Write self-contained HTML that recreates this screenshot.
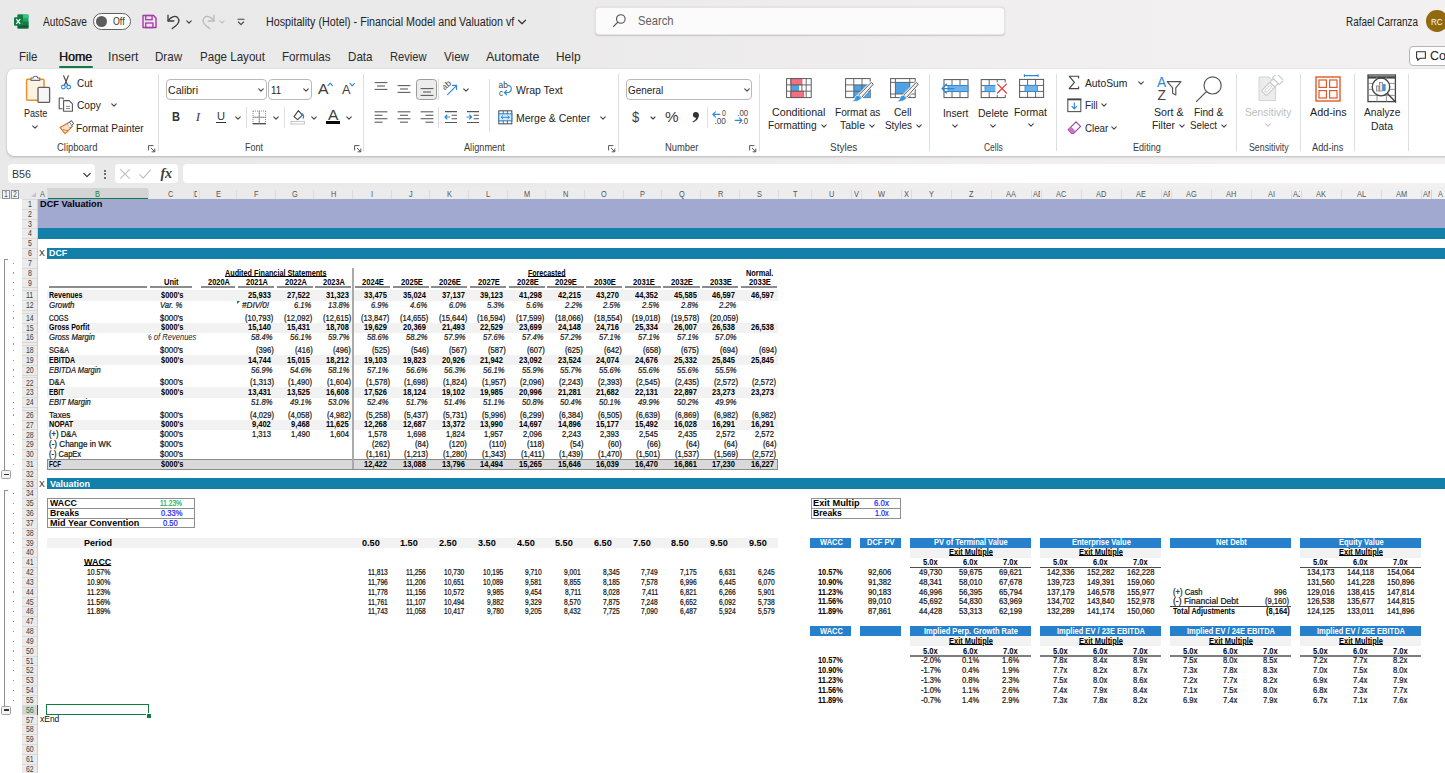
<!DOCTYPE html>
<html><head><meta charset="utf-8"><title>Excel</title><style>
html,body{margin:0;padding:0}
body{width:1445px;height:773px;overflow:hidden;background:linear-gradient(90deg,#e9e9e9 0%,#ebeaea 35%,#f1efef 75%,#f2f0f0 100%);font-family:"Liberation Sans",sans-serif;position:relative}
#app{position:absolute;left:0;top:0;width:1445px;height:773px;overflow:hidden}
#app div,#app span.t,#app svg{position:absolute}
#sheet{left:0;top:186.5px;width:1445px;height:586.5px;background:#fff}
.t{white-space:nowrap;font-size:7px;color:#111;font-family:"Liberation Sans",sans-serif}
.g{height:10px;line-height:10px}
</style></head>
<body><div id="app">
<div id="sheet"></div>
<div style="left:0.00px;top:186.50px;width:1445.00px;height:12.60px;background:linear-gradient(90deg,#e9e9e9 0%,#ececec 40%,#f0f0f0 100%)"></div>
<div style="left:0.00px;top:199.10px;width:22.00px;height:573.90px;background:#fff"></div>
<div style="left:22.00px;top:199.10px;width:16.00px;height:573.90px;background:#ebebeb"></div>
<div style="left:47.00px;top:188.30px;width:101.00px;height:10.80px;background:#d4d4d4;border-bottom:1.5px solid #107c41;box-sizing:border-box"></div>
<span class="t g" style="left:40.33px;top:189px;font-size:8.6px;color:#555;transform:scaleX(0.86);transform-origin:0 50%">A</span>
<span class="t g" style="left:95.33px;top:189px;font-size:8.6px;color:#107c41;transform:scaleX(0.86);transform-origin:0 50%">B</span>
<div style="left:46.50px;top:189.50px;width:1.00px;height:9.60px;background:#dcdcdc"></div>
<span class="t g" style="left:168.13px;top:189px;font-size:8.6px;color:#555;transform:scaleX(0.86);transform-origin:0 50%">C</span>
<div style="left:147.50px;top:189.50px;width:1.00px;height:9.60px;background:#dcdcdc"></div>
<div style="left:193.80px;top:189px;width:3.00px;height:10px;overflow:hidden"><span class="t g" style="left:0.60px;top:0;font-size:8.6px;color:#555;transform:scaleX(0.86);transform-origin:0 50%">D</span></div>
<div style="left:192.50px;top:189.50px;width:1.00px;height:9.60px;background:#dcdcdc"></div>
<span class="t g" style="left:215.58px;top:189px;font-size:8.6px;color:#555;transform:scaleX(0.86);transform-origin:0 50%">E</span>
<div style="left:198.50px;top:189.50px;width:1.00px;height:9.60px;background:#dcdcdc"></div>
<span class="t g" style="left:253.88px;top:189px;font-size:8.6px;color:#555;transform:scaleX(0.86);transform-origin:0 50%">F</span>
<div style="left:236.00px;top:189.50px;width:1.00px;height:9.60px;background:#dcdcdc"></div>
<span class="t g" style="left:291.94px;top:189px;font-size:8.6px;color:#555;transform:scaleX(0.86);transform-origin:0 50%">G</span>
<div style="left:274.68px;top:189.50px;width:1.00px;height:9.60px;background:#dcdcdc"></div>
<span class="t g" style="left:330.83px;top:189px;font-size:8.6px;color:#555;transform:scaleX(0.86);transform-origin:0 50%">H</span>
<div style="left:313.36px;top:189.50px;width:1.00px;height:9.60px;background:#dcdcdc"></div>
<span class="t g" style="left:371.15px;top:189px;font-size:8.6px;color:#555;transform:scaleX(0.86);transform-origin:0 50%">I</span>
<div style="left:352.04px;top:189.50px;width:1.00px;height:9.60px;background:#dcdcdc"></div>
<span class="t g" style="left:409.01px;top:189px;font-size:8.6px;color:#555;transform:scaleX(0.86);transform-origin:0 50%">J</span>
<div style="left:390.72px;top:189.50px;width:1.00px;height:9.60px;background:#dcdcdc"></div>
<span class="t g" style="left:447.07px;top:189px;font-size:8.6px;color:#555;transform:scaleX(0.86);transform-origin:0 50%">K</span>
<div style="left:429.40px;top:189.50px;width:1.00px;height:9.60px;background:#dcdcdc"></div>
<span class="t g" style="left:486.16px;top:189px;font-size:8.6px;color:#555;transform:scaleX(0.86);transform-origin:0 50%">L</span>
<div style="left:468.08px;top:189.50px;width:1.00px;height:9.60px;background:#dcdcdc"></div>
<span class="t g" style="left:523.82px;top:189px;font-size:8.6px;color:#555;transform:scaleX(0.86);transform-origin:0 50%">M</span>
<div style="left:506.76px;top:189.50px;width:1.00px;height:9.60px;background:#dcdcdc"></div>
<span class="t g" style="left:562.91px;top:189px;font-size:8.6px;color:#555;transform:scaleX(0.86);transform-origin:0 50%">N</span>
<div style="left:545.44px;top:189.50px;width:1.00px;height:9.60px;background:#dcdcdc"></div>
<span class="t g" style="left:601.38px;top:189px;font-size:8.6px;color:#555;transform:scaleX(0.86);transform-origin:0 50%">O</span>
<div style="left:584.12px;top:189.50px;width:1.00px;height:9.60px;background:#dcdcdc"></div>
<span class="t g" style="left:640.47px;top:189px;font-size:8.6px;color:#555;transform:scaleX(0.86);transform-origin:0 50%">P</span>
<div style="left:622.80px;top:189.50px;width:1.00px;height:9.60px;background:#dcdcdc"></div>
<span class="t g" style="left:678.74px;top:189px;font-size:8.6px;color:#555;transform:scaleX(0.86);transform-origin:0 50%">Q</span>
<div style="left:661.48px;top:189.50px;width:1.00px;height:9.60px;background:#dcdcdc"></div>
<span class="t g" style="left:717.63px;top:189px;font-size:8.6px;color:#555;transform:scaleX(0.86);transform-origin:0 50%">R</span>
<div style="left:700.16px;top:189.50px;width:1.00px;height:9.60px;background:#dcdcdc"></div>
<span class="t g" style="left:756.51px;top:189px;font-size:8.6px;color:#555;transform:scaleX(0.86);transform-origin:0 50%">S</span>
<div style="left:738.84px;top:189.50px;width:1.00px;height:9.60px;background:#dcdcdc"></div>
<span class="t g" style="left:792.54px;top:189px;font-size:8.6px;color:#555;transform:scaleX(0.86);transform-origin:0 50%">T</span>
<div style="left:777.50px;top:189.50px;width:1.00px;height:9.60px;background:#dcdcdc"></div>
<span class="t g" style="left:828.63px;top:189px;font-size:8.6px;color:#555;transform:scaleX(0.86);transform-origin:0 50%">U</span>
<div style="left:810.50px;top:189.50px;width:1.00px;height:9.60px;background:#dcdcdc"></div>
<span class="t g" style="left:853.83px;top:189px;font-size:8.6px;color:#555;transform:scaleX(0.86);transform-origin:0 50%">V</span>
<div style="left:850.50px;top:189.50px;width:1.00px;height:9.60px;background:#dcdcdc"></div>
<span class="t g" style="left:877.81px;top:189px;font-size:8.6px;color:#555;transform:scaleX(0.86);transform-origin:0 50%">W</span>
<div style="left:860.50px;top:189.50px;width:1.00px;height:9.60px;background:#dcdcdc"></div>
<span class="t g" style="left:903.83px;top:189px;font-size:8.6px;color:#555;transform:scaleX(0.86);transform-origin:0 50%">X</span>
<div style="left:900.50px;top:189.50px;width:1.00px;height:9.60px;background:#dcdcdc"></div>
<span class="t g" style="left:928.83px;top:189px;font-size:8.6px;color:#555;transform:scaleX(0.86);transform-origin:0 50%">Y</span>
<div style="left:910.50px;top:189.50px;width:1.00px;height:9.60px;background:#dcdcdc"></div>
<span class="t g" style="left:969.04px;top:189px;font-size:8.6px;color:#555;transform:scaleX(0.86);transform-origin:0 50%">Z</span>
<div style="left:950.50px;top:189.50px;width:1.00px;height:9.60px;background:#dcdcdc"></div>
<span class="t g" style="left:1006.37px;top:189px;font-size:8.6px;color:#555;transform:scaleX(0.86);transform-origin:0 50%">AA</span>
<div style="left:990.50px;top:189.50px;width:1.00px;height:9.60px;background:#dcdcdc"></div>
<div style="left:1031.80px;top:189px;width:8.40px;height:10px;overflow:hidden"><span class="t g" style="left:0.80px;top:0;font-size:8.6px;color:#555;transform:scaleX(0.86);transform-origin:0 50%">AB</span></div>
<div style="left:1030.50px;top:189.50px;width:1.00px;height:9.60px;background:#dcdcdc"></div>
<span class="t g" style="left:1056.16px;top:189px;font-size:8.6px;color:#555;transform:scaleX(0.86);transform-origin:0 50%">AC</span>
<div style="left:1040.50px;top:189.50px;width:1.00px;height:9.60px;background:#dcdcdc"></div>
<span class="t g" style="left:1096.16px;top:189px;font-size:8.6px;color:#555;transform:scaleX(0.86);transform-origin:0 50%">AD</span>
<div style="left:1080.50px;top:189.50px;width:1.00px;height:9.60px;background:#dcdcdc"></div>
<span class="t g" style="left:1136.37px;top:189px;font-size:8.6px;color:#555;transform:scaleX(0.86);transform-origin:0 50%">AE</span>
<div style="left:1120.50px;top:189.50px;width:1.00px;height:9.60px;background:#dcdcdc"></div>
<div style="left:1161.80px;top:189px;width:8.40px;height:10px;overflow:hidden"><span class="t g" style="left:0.80px;top:0;font-size:8.6px;color:#555;transform:scaleX(0.86);transform-origin:0 50%">AF</span></div>
<div style="left:1160.50px;top:189.50px;width:1.00px;height:9.60px;background:#dcdcdc"></div>
<span class="t g" style="left:1185.96px;top:189px;font-size:8.6px;color:#555;transform:scaleX(0.86);transform-origin:0 50%">AG</span>
<div style="left:1170.50px;top:189.50px;width:1.00px;height:9.60px;background:#dcdcdc"></div>
<span class="t g" style="left:1226.16px;top:189px;font-size:8.6px;color:#555;transform:scaleX(0.86);transform-origin:0 50%">AH</span>
<div style="left:1210.50px;top:189.50px;width:1.00px;height:9.60px;background:#dcdcdc"></div>
<span class="t g" style="left:1267.81px;top:189px;font-size:8.6px;color:#555;transform:scaleX(0.86);transform-origin:0 50%">AI</span>
<div style="left:1250.50px;top:189.50px;width:1.00px;height:9.60px;background:#dcdcdc"></div>
<div style="left:1291.80px;top:189px;width:8.40px;height:10px;overflow:hidden"><span class="t g" style="left:0.80px;top:0;font-size:8.6px;color:#555;transform:scaleX(0.86);transform-origin:0 50%">AJ</span></div>
<div style="left:1290.50px;top:189.50px;width:1.00px;height:9.60px;background:#dcdcdc"></div>
<span class="t g" style="left:1316.37px;top:189px;font-size:8.6px;color:#555;transform:scaleX(0.86);transform-origin:0 50%">AK</span>
<div style="left:1300.50px;top:189.50px;width:1.00px;height:9.60px;background:#dcdcdc"></div>
<span class="t g" style="left:1356.78px;top:189px;font-size:8.6px;color:#555;transform:scaleX(0.86);transform-origin:0 50%">AL</span>
<div style="left:1340.50px;top:189.50px;width:1.00px;height:9.60px;background:#dcdcdc"></div>
<span class="t g" style="left:1395.75px;top:189px;font-size:8.6px;color:#555;transform:scaleX(0.86);transform-origin:0 50%">AM</span>
<div style="left:1380.50px;top:189.50px;width:1.00px;height:9.60px;background:#dcdcdc"></div>
<div style="left:1421.80px;top:189px;width:8.40px;height:10px;overflow:hidden"><span class="t g" style="left:0.80px;top:0;font-size:8.6px;color:#555;transform:scaleX(0.86);transform-origin:0 50%">AN</span></div>
<div style="left:1420.50px;top:189.50px;width:1.00px;height:9.60px;background:#dcdcdc"></div>
<span class="t g" style="left:1438.4px;top:189px;font-size:8.6px;color:#555;transform:scaleX(0.86);transform-origin:0 50%">A</span>
<div style="left:1430.50px;top:189.50px;width:1.00px;height:9.60px;background:#d2d2d2"></div>
<span class="t g" style="left:28.06px;top:199px;font-size:8.4px;color:#3c3c3c;transform:scaleX(0.83);transform-origin:0 50%">1</span>
<div style="left:22.00px;top:198.90px;width:16.00px;height:0.80px;background:#d9d9d9"></div>
<span class="t g" style="left:28.06px;top:209px;font-size:8.4px;color:#3c3c3c;transform:scaleX(0.83);transform-origin:0 50%">2</span>
<div style="left:22.00px;top:208.73px;width:16.00px;height:0.80px;background:#d9d9d9"></div>
<span class="t g" style="left:28.06px;top:219px;font-size:8.4px;color:#3c3c3c;transform:scaleX(0.83);transform-origin:0 50%">3</span>
<div style="left:22.00px;top:218.56px;width:16.00px;height:0.80px;background:#d9d9d9"></div>
<span class="t g" style="left:28.06px;top:228px;font-size:8.4px;color:#3c3c3c;transform:scaleX(0.83);transform-origin:0 50%">4</span>
<div style="left:22.00px;top:228.39px;width:16.00px;height:0.80px;background:#d9d9d9"></div>
<span class="t g" style="left:28.06px;top:238px;font-size:8.4px;color:#3c3c3c;transform:scaleX(0.83);transform-origin:0 50%">5</span>
<div style="left:22.00px;top:238.22px;width:16.00px;height:0.80px;background:#d9d9d9"></div>
<span class="t g" style="left:28.06px;top:248px;font-size:8.4px;color:#3c3c3c;transform:scaleX(0.83);transform-origin:0 50%">6</span>
<div style="left:22.00px;top:248.05px;width:16.00px;height:0.80px;background:#d9d9d9"></div>
<span class="t g" style="left:28.06px;top:258px;font-size:8.4px;color:#3c3c3c;transform:scaleX(0.83);transform-origin:0 50%">7</span>
<div style="left:22.00px;top:257.88px;width:16.00px;height:0.80px;background:#d9d9d9"></div>
<span class="t g" style="left:28.06px;top:268px;font-size:8.4px;color:#3c3c3c;transform:scaleX(0.83);transform-origin:0 50%">8</span>
<div style="left:22.00px;top:267.71px;width:16.00px;height:0.80px;background:#d9d9d9"></div>
<span class="t g" style="left:28.06px;top:278px;font-size:8.4px;color:#3c3c3c;transform:scaleX(0.83);transform-origin:0 50%">9</span>
<div style="left:22.00px;top:277.54px;width:16.00px;height:0.80px;background:#d9d9d9"></div>
<div style="left:22.00px;top:287.37px;width:16.00px;height:0.80px;background:#d6d6d6"></div>
<span class="t g" style="left:26.38px;top:290px;font-size:8.4px;color:#3c3c3c;transform:scaleX(0.83);transform-origin:0 50%">11</span>
<div style="left:22.00px;top:290.22px;width:16.00px;height:0.80px;background:#d9d9d9"></div>
<span class="t g" style="left:26.12px;top:300px;font-size:8.4px;color:#3c3c3c;transform:scaleX(0.83);transform-origin:0 50%">12</span>
<div style="left:22.00px;top:300.05px;width:16.00px;height:0.80px;background:#d9d9d9"></div>
<div style="left:22.00px;top:309.88px;width:16.00px;height:0.80px;background:#d6d6d6"></div>
<span class="t g" style="left:26.12px;top:313px;font-size:8.4px;color:#3c3c3c;transform:scaleX(0.83);transform-origin:0 50%">14</span>
<div style="left:22.00px;top:312.73px;width:16.00px;height:0.80px;background:#d9d9d9"></div>
<span class="t g" style="left:26.12px;top:323px;font-size:8.4px;color:#3c3c3c;transform:scaleX(0.83);transform-origin:0 50%">15</span>
<div style="left:22.00px;top:322.56px;width:16.00px;height:0.80px;background:#d9d9d9"></div>
<span class="t g" style="left:26.12px;top:332px;font-size:8.4px;color:#3c3c3c;transform:scaleX(0.83);transform-origin:0 50%">16</span>
<div style="left:22.00px;top:332.39px;width:16.00px;height:0.80px;background:#d9d9d9"></div>
<div style="left:22.00px;top:342.22px;width:16.00px;height:0.80px;background:#d6d6d6"></div>
<span class="t g" style="left:26.12px;top:345px;font-size:8.4px;color:#3c3c3c;transform:scaleX(0.83);transform-origin:0 50%">18</span>
<div style="left:22.00px;top:345.07px;width:16.00px;height:0.80px;background:#d9d9d9"></div>
<span class="t g" style="left:26.12px;top:355px;font-size:8.4px;color:#3c3c3c;transform:scaleX(0.83);transform-origin:0 50%">19</span>
<div style="left:22.00px;top:354.90px;width:16.00px;height:0.80px;background:#d9d9d9"></div>
<span class="t g" style="left:26.12px;top:365px;font-size:8.4px;color:#3c3c3c;transform:scaleX(0.83);transform-origin:0 50%">20</span>
<div style="left:22.00px;top:364.73px;width:16.00px;height:0.80px;background:#d9d9d9"></div>
<div style="left:22.00px;top:374.56px;width:16.00px;height:0.80px;background:#d6d6d6"></div>
<span class="t g" style="left:26.12px;top:378px;font-size:8.4px;color:#3c3c3c;transform:scaleX(0.83);transform-origin:0 50%">22</span>
<div style="left:22.00px;top:377.41px;width:16.00px;height:0.80px;background:#d9d9d9"></div>
<span class="t g" style="left:26.12px;top:387px;font-size:8.4px;color:#3c3c3c;transform:scaleX(0.83);transform-origin:0 50%">23</span>
<div style="left:22.00px;top:387.24px;width:16.00px;height:0.80px;background:#d9d9d9"></div>
<span class="t g" style="left:26.12px;top:397px;font-size:8.4px;color:#3c3c3c;transform:scaleX(0.83);transform-origin:0 50%">24</span>
<div style="left:22.00px;top:397.07px;width:16.00px;height:0.80px;background:#d9d9d9"></div>
<div style="left:22.00px;top:406.90px;width:16.00px;height:0.80px;background:#d6d6d6"></div>
<span class="t g" style="left:26.12px;top:410px;font-size:8.4px;color:#3c3c3c;transform:scaleX(0.83);transform-origin:0 50%">26</span>
<div style="left:22.00px;top:409.75px;width:16.00px;height:0.80px;background:#d9d9d9"></div>
<span class="t g" style="left:26.12px;top:420px;font-size:8.4px;color:#3c3c3c;transform:scaleX(0.83);transform-origin:0 50%">27</span>
<div style="left:22.00px;top:419.58px;width:16.00px;height:0.80px;background:#d9d9d9"></div>
<span class="t g" style="left:26.12px;top:430px;font-size:8.4px;color:#3c3c3c;transform:scaleX(0.83);transform-origin:0 50%">28</span>
<div style="left:22.00px;top:429.41px;width:16.00px;height:0.80px;background:#d9d9d9"></div>
<span class="t g" style="left:26.12px;top:439px;font-size:8.4px;color:#3c3c3c;transform:scaleX(0.83);transform-origin:0 50%">29</span>
<div style="left:22.00px;top:439.24px;width:16.00px;height:0.80px;background:#d9d9d9"></div>
<span class="t g" style="left:26.12px;top:449px;font-size:8.4px;color:#3c3c3c;transform:scaleX(0.83);transform-origin:0 50%">30</span>
<div style="left:22.00px;top:449.07px;width:16.00px;height:0.80px;background:#d9d9d9"></div>
<span class="t g" style="left:26.12px;top:459px;font-size:8.4px;color:#3c3c3c;transform:scaleX(0.83);transform-origin:0 50%">31</span>
<div style="left:22.00px;top:458.90px;width:16.00px;height:0.80px;background:#d9d9d9"></div>
<span class="t g" style="left:26.12px;top:469px;font-size:8.4px;color:#3c3c3c;transform:scaleX(0.83);transform-origin:0 50%">32</span>
<div style="left:22.00px;top:468.73px;width:16.00px;height:0.80px;background:#d9d9d9"></div>
<span class="t g" style="left:26.12px;top:479px;font-size:8.4px;color:#3c3c3c;transform:scaleX(0.83);transform-origin:0 50%">33</span>
<div style="left:22.00px;top:478.56px;width:16.00px;height:0.80px;background:#d9d9d9"></div>
<span class="t g" style="left:26.12px;top:488px;font-size:8.4px;color:#3c3c3c;transform:scaleX(0.83);transform-origin:0 50%">34</span>
<div style="left:22.00px;top:488.39px;width:16.00px;height:0.80px;background:#d9d9d9"></div>
<span class="t g" style="left:26.12px;top:498px;font-size:8.4px;color:#3c3c3c;transform:scaleX(0.83);transform-origin:0 50%">35</span>
<div style="left:22.00px;top:498.22px;width:16.00px;height:0.80px;background:#d9d9d9"></div>
<span class="t g" style="left:26.12px;top:508px;font-size:8.4px;color:#3c3c3c;transform:scaleX(0.83);transform-origin:0 50%">36</span>
<div style="left:22.00px;top:508.05px;width:16.00px;height:0.80px;background:#d9d9d9"></div>
<span class="t g" style="left:26.12px;top:518px;font-size:8.4px;color:#3c3c3c;transform:scaleX(0.83);transform-origin:0 50%">37</span>
<div style="left:22.00px;top:517.88px;width:16.00px;height:0.80px;background:#d9d9d9"></div>
<span class="t g" style="left:26.12px;top:528px;font-size:8.4px;color:#3c3c3c;transform:scaleX(0.83);transform-origin:0 50%">38</span>
<div style="left:22.00px;top:527.71px;width:16.00px;height:0.80px;background:#d9d9d9"></div>
<span class="t g" style="left:26.12px;top:538px;font-size:8.4px;color:#3c3c3c;transform:scaleX(0.83);transform-origin:0 50%">39</span>
<div style="left:22.00px;top:537.54px;width:16.00px;height:0.80px;background:#d9d9d9"></div>
<span class="t g" style="left:26.12px;top:547px;font-size:8.4px;color:#3c3c3c;transform:scaleX(0.83);transform-origin:0 50%">40</span>
<div style="left:22.00px;top:547.37px;width:16.00px;height:0.80px;background:#d9d9d9"></div>
<span class="t g" style="left:26.12px;top:557px;font-size:8.4px;color:#3c3c3c;transform:scaleX(0.83);transform-origin:0 50%">41</span>
<div style="left:22.00px;top:557.20px;width:16.00px;height:0.80px;background:#d9d9d9"></div>
<span class="t g" style="left:26.12px;top:567px;font-size:8.4px;color:#3c3c3c;transform:scaleX(0.83);transform-origin:0 50%">42</span>
<div style="left:22.00px;top:567.03px;width:16.00px;height:0.80px;background:#d9d9d9"></div>
<span class="t g" style="left:26.12px;top:577px;font-size:8.4px;color:#3c3c3c;transform:scaleX(0.83);transform-origin:0 50%">43</span>
<div style="left:22.00px;top:576.86px;width:16.00px;height:0.80px;background:#d9d9d9"></div>
<span class="t g" style="left:26.12px;top:587px;font-size:8.4px;color:#3c3c3c;transform:scaleX(0.83);transform-origin:0 50%">44</span>
<div style="left:22.00px;top:586.69px;width:16.00px;height:0.80px;background:#d9d9d9"></div>
<span class="t g" style="left:26.12px;top:597px;font-size:8.4px;color:#3c3c3c;transform:scaleX(0.83);transform-origin:0 50%">45</span>
<div style="left:22.00px;top:596.52px;width:16.00px;height:0.80px;background:#d9d9d9"></div>
<span class="t g" style="left:26.12px;top:606px;font-size:8.4px;color:#3c3c3c;transform:scaleX(0.83);transform-origin:0 50%">46</span>
<div style="left:22.00px;top:606.35px;width:16.00px;height:0.80px;background:#d9d9d9"></div>
<span class="t g" style="left:26.12px;top:616px;font-size:8.4px;color:#3c3c3c;transform:scaleX(0.83);transform-origin:0 50%">47</span>
<div style="left:22.00px;top:616.18px;width:16.00px;height:0.80px;background:#d9d9d9"></div>
<span class="t g" style="left:26.12px;top:626px;font-size:8.4px;color:#3c3c3c;transform:scaleX(0.83);transform-origin:0 50%">48</span>
<div style="left:22.00px;top:626.01px;width:16.00px;height:0.80px;background:#d9d9d9"></div>
<span class="t g" style="left:26.12px;top:636px;font-size:8.4px;color:#3c3c3c;transform:scaleX(0.83);transform-origin:0 50%">49</span>
<div style="left:22.00px;top:635.84px;width:16.00px;height:0.80px;background:#d9d9d9"></div>
<span class="t g" style="left:26.12px;top:646px;font-size:8.4px;color:#3c3c3c;transform:scaleX(0.83);transform-origin:0 50%">50</span>
<div style="left:22.00px;top:645.67px;width:16.00px;height:0.80px;background:#d9d9d9"></div>
<span class="t g" style="left:26.12px;top:656px;font-size:8.4px;color:#3c3c3c;transform:scaleX(0.83);transform-origin:0 50%">51</span>
<div style="left:22.00px;top:655.50px;width:16.00px;height:0.80px;background:#d9d9d9"></div>
<span class="t g" style="left:26.12px;top:665px;font-size:8.4px;color:#3c3c3c;transform:scaleX(0.83);transform-origin:0 50%">52</span>
<div style="left:22.00px;top:665.33px;width:16.00px;height:0.80px;background:#d9d9d9"></div>
<span class="t g" style="left:26.12px;top:675px;font-size:8.4px;color:#3c3c3c;transform:scaleX(0.83);transform-origin:0 50%">53</span>
<div style="left:22.00px;top:675.16px;width:16.00px;height:0.80px;background:#d9d9d9"></div>
<span class="t g" style="left:26.12px;top:685px;font-size:8.4px;color:#3c3c3c;transform:scaleX(0.83);transform-origin:0 50%">54</span>
<div style="left:22.00px;top:684.99px;width:16.00px;height:0.80px;background:#d9d9d9"></div>
<span class="t g" style="left:26.12px;top:695px;font-size:8.4px;color:#3c3c3c;transform:scaleX(0.83);transform-origin:0 50%">55</span>
<div style="left:22.00px;top:694.82px;width:16.00px;height:0.80px;background:#d9d9d9"></div>
<div style="left:22.00px;top:705.05px;width:16.00px;height:9.83px;background:#d4d4d4;border-right:1.6px solid #107c41;box-sizing:border-box"></div>
<span class="t g" style="left:26.12px;top:705px;font-size:8.4px;color:#107c41;transform:scaleX(0.83);transform-origin:0 50%">56</span>
<div style="left:22.00px;top:704.65px;width:16.00px;height:0.80px;background:#d9d9d9"></div>
<span class="t g" style="left:26.12px;top:715px;font-size:8.4px;color:#3c3c3c;transform:scaleX(0.83);transform-origin:0 50%">57</span>
<div style="left:22.00px;top:714.48px;width:16.00px;height:0.80px;background:#d9d9d9"></div>
<span class="t g" style="left:26.12px;top:724px;font-size:8.4px;color:#3c3c3c;transform:scaleX(0.83);transform-origin:0 50%">58</span>
<div style="left:22.00px;top:724.31px;width:16.00px;height:0.80px;background:#d9d9d9"></div>
<span class="t g" style="left:26.12px;top:734px;font-size:8.4px;color:#3c3c3c;transform:scaleX(0.83);transform-origin:0 50%">59</span>
<div style="left:22.00px;top:734.14px;width:16.00px;height:0.80px;background:#d9d9d9"></div>
<span class="t g" style="left:26.12px;top:744px;font-size:8.4px;color:#3c3c3c;transform:scaleX(0.83);transform-origin:0 50%">60</span>
<div style="left:22.00px;top:743.97px;width:16.00px;height:0.80px;background:#d9d9d9"></div>
<span class="t g" style="left:26.12px;top:754px;font-size:8.4px;color:#3c3c3c;transform:scaleX(0.83);transform-origin:0 50%">61</span>
<div style="left:22.00px;top:753.80px;width:16.00px;height:0.80px;background:#d9d9d9"></div>
<span class="t g" style="left:26.12px;top:764px;font-size:8.4px;color:#3c3c3c;transform:scaleX(0.83);transform-origin:0 50%">62</span>
<div style="left:22.00px;top:763.63px;width:16.00px;height:0.80px;background:#d9d9d9"></div>
<div style="left:37.40px;top:199.10px;width:0.80px;height:573.90px;background:#cfcfcf"></div>
<div style="left:36.60px;top:705.05px;width:1.60px;height:9.83px;background:#107c41"></div>
<div style="left:31.4px;top:192.10px;width:0;height:0;border-bottom:5.6px solid #c6c6c6;border-left:5.6px solid transparent"></div>
<div style="left:1.50px;top:190.2px;width:8.8px;height:8.4px;border:1px solid #8f8f8f;box-sizing:border-box;background:#f6f6f6"></div>
<span class="t g" style="left:4.00px;top:190px;font-size:8.2px;color:#555;transform:scaleX(0.85);transform-origin:0 50%">1</span>
<div style="left:10.70px;top:190.2px;width:8.8px;height:8.4px;border:1px solid #8f8f8f;box-sizing:border-box;background:#f6f6f6"></div>
<span class="t g" style="left:13.20px;top:190px;font-size:8.2px;color:#555;transform:scaleX(0.85);transform-origin:0 50%">2</span>
<div style="left:4.00px;top:259.08px;width:1.20px;height:210.65px;background:#8f8f8f"></div>
<div style="left:4.00px;top:259.08px;width:4.00px;height:1.20px;background:#8f8f8f"></div>
<div style="left:1.3px;top:469.73px;width:9.4px;height:9px;border:1px solid #a0a0a0;border-radius:1.5px;box-sizing:border-box;background:#f3f3f3"></div>
<div style="left:3.50px;top:473.53px;width:5.00px;height:1.40px;background:#333"></div>
<div style="left:12.70px;top:262.60px;width:1.10px;height:1.20px;background:#999"></div>
<div style="left:12.70px;top:272.43px;width:1.10px;height:1.20px;background:#999"></div>
<div style="left:12.70px;top:282.26px;width:1.10px;height:1.20px;background:#999"></div>
<div style="left:12.70px;top:288.60px;width:1.10px;height:1.20px;background:#999"></div>
<div style="left:12.70px;top:294.94px;width:1.10px;height:1.20px;background:#999"></div>
<div style="left:12.70px;top:304.77px;width:1.10px;height:1.20px;background:#999"></div>
<div style="left:12.70px;top:311.11px;width:1.10px;height:1.20px;background:#999"></div>
<div style="left:12.70px;top:317.45px;width:1.10px;height:1.20px;background:#999"></div>
<div style="left:12.70px;top:327.28px;width:1.10px;height:1.20px;background:#999"></div>
<div style="left:12.70px;top:337.11px;width:1.10px;height:1.20px;background:#999"></div>
<div style="left:12.70px;top:343.44px;width:1.10px;height:1.20px;background:#999"></div>
<div style="left:12.70px;top:349.79px;width:1.10px;height:1.20px;background:#999"></div>
<div style="left:12.70px;top:359.62px;width:1.10px;height:1.20px;background:#999"></div>
<div style="left:12.70px;top:369.44px;width:1.10px;height:1.20px;background:#999"></div>
<div style="left:12.70px;top:375.78px;width:1.10px;height:1.20px;background:#999"></div>
<div style="left:12.70px;top:382.12px;width:1.10px;height:1.20px;background:#999"></div>
<div style="left:12.70px;top:391.95px;width:1.10px;height:1.20px;background:#999"></div>
<div style="left:12.70px;top:401.78px;width:1.10px;height:1.20px;background:#999"></div>
<div style="left:12.70px;top:408.12px;width:1.10px;height:1.20px;background:#999"></div>
<div style="left:12.70px;top:414.46px;width:1.10px;height:1.20px;background:#999"></div>
<div style="left:12.70px;top:424.29px;width:1.10px;height:1.20px;background:#999"></div>
<div style="left:12.70px;top:434.12px;width:1.10px;height:1.20px;background:#999"></div>
<div style="left:12.70px;top:443.95px;width:1.10px;height:1.20px;background:#999"></div>
<div style="left:12.70px;top:453.78px;width:1.10px;height:1.20px;background:#999"></div>
<div style="left:12.70px;top:463.61px;width:1.10px;height:1.20px;background:#999"></div>
<div style="left:4.00px;top:489.59px;width:1.20px;height:216.06px;background:#8f8f8f"></div>
<div style="left:4.00px;top:489.59px;width:4.00px;height:1.20px;background:#8f8f8f"></div>
<div style="left:1.3px;top:705.65px;width:9.4px;height:9px;border:1px solid #a0a0a0;border-radius:1.5px;box-sizing:border-box;background:#f3f3f3"></div>
<div style="left:3.50px;top:709.45px;width:5.00px;height:1.40px;background:#333"></div>
<div style="left:12.70px;top:493.10px;width:1.10px;height:1.20px;background:#999"></div>
<div style="left:12.70px;top:502.93px;width:1.10px;height:1.20px;background:#999"></div>
<div style="left:12.70px;top:512.76px;width:1.10px;height:1.20px;background:#999"></div>
<div style="left:12.70px;top:522.59px;width:1.10px;height:1.20px;background:#999"></div>
<div style="left:12.70px;top:532.42px;width:1.10px;height:1.20px;background:#999"></div>
<div style="left:12.70px;top:542.25px;width:1.10px;height:1.20px;background:#999"></div>
<div style="left:12.70px;top:552.08px;width:1.10px;height:1.20px;background:#999"></div>
<div style="left:12.70px;top:561.91px;width:1.10px;height:1.20px;background:#999"></div>
<div style="left:12.70px;top:571.75px;width:1.10px;height:1.20px;background:#999"></div>
<div style="left:12.70px;top:581.58px;width:1.10px;height:1.20px;background:#999"></div>
<div style="left:12.70px;top:591.41px;width:1.10px;height:1.20px;background:#999"></div>
<div style="left:12.70px;top:601.24px;width:1.10px;height:1.20px;background:#999"></div>
<div style="left:12.70px;top:611.07px;width:1.10px;height:1.20px;background:#999"></div>
<div style="left:12.70px;top:620.90px;width:1.10px;height:1.20px;background:#999"></div>
<div style="left:12.70px;top:630.73px;width:1.10px;height:1.20px;background:#999"></div>
<div style="left:12.70px;top:640.56px;width:1.10px;height:1.20px;background:#999"></div>
<div style="left:12.70px;top:650.39px;width:1.10px;height:1.20px;background:#999"></div>
<div style="left:12.70px;top:660.22px;width:1.10px;height:1.20px;background:#999"></div>
<div style="left:12.70px;top:670.05px;width:1.10px;height:1.20px;background:#999"></div>
<div style="left:12.70px;top:679.88px;width:1.10px;height:1.20px;background:#999"></div>
<div style="left:12.70px;top:689.71px;width:1.10px;height:1.20px;background:#999"></div>
<div style="left:12.70px;top:699.54px;width:1.10px;height:1.20px;background:#999"></div>
<div style="left:38.00px;top:199.10px;width:1407.00px;height:29.69px;background:#a2a9d0"></div>
<div style="left:38.00px;top:228.19px;width:1407.00px;height:10.53px;background:#1380aa"></div>
<div style="left:47.00px;top:247.95px;width:1398.00px;height:10.63px;background:#1380aa"></div>
<div style="left:47.00px;top:478.46px;width:1398.00px;height:10.63px;background:#1380aa"></div>
<div style="left:47.00px;top:290.32px;width:731.00px;height:10.33px;background:#f2f2f2"></div>
<div style="left:47.00px;top:322.66px;width:731.00px;height:10.33px;background:#f2f2f2"></div>
<div style="left:47.00px;top:355.00px;width:731.00px;height:10.33px;background:#f2f2f2"></div>
<div style="left:47.00px;top:387.34px;width:731.00px;height:10.33px;background:#f2f2f2"></div>
<div style="left:47.00px;top:419.68px;width:731.00px;height:10.33px;background:#f2f2f2"></div>
<div style="left:47.00px;top:458.90px;width:731.40px;height:10.63px;background:#d9d9d9;border-top:1px solid #8a8a8a;border-bottom:1px solid #8a8a8a;border-right:1px solid #8a8a8a;border-left:1px solid #8a8a8a;box-sizing:border-box"></div>
<div style="left:47.00px;top:537.74px;width:731.00px;height:10.23px;background:#f2f2f2"></div>
<div style="left:352.10px;top:267.51px;width:2.40px;height:201.62px;background:#aaaaaa"></div>
<div style="left:48.50px;top:286.02px;width:98.40px;height:1.90px;background:#8c8c8c"></div>
<div style="left:149.50px;top:286.02px;width:42.40px;height:1.90px;background:#8c8c8c"></div>
<div style="left:200.50px;top:286.02px;width:34.90px;height:1.90px;background:#8c8c8c"></div>
<div style="left:238.00px;top:286.02px;width:36.08px;height:1.90px;background:#8c8c8c"></div>
<div style="left:276.68px;top:286.02px;width:36.08px;height:1.90px;background:#8c8c8c"></div>
<div style="left:315.36px;top:286.02px;width:35.28px;height:1.90px;background:#8c8c8c"></div>
<div style="left:355.24px;top:286.02px;width:34.88px;height:1.90px;background:#8c8c8c"></div>
<div style="left:392.72px;top:286.02px;width:36.08px;height:1.90px;background:#8c8c8c"></div>
<div style="left:431.40px;top:286.02px;width:36.08px;height:1.90px;background:#8c8c8c"></div>
<div style="left:470.08px;top:286.02px;width:36.08px;height:1.90px;background:#8c8c8c"></div>
<div style="left:508.76px;top:286.02px;width:36.08px;height:1.90px;background:#8c8c8c"></div>
<div style="left:547.44px;top:286.02px;width:36.08px;height:1.90px;background:#8c8c8c"></div>
<div style="left:586.12px;top:286.02px;width:36.08px;height:1.90px;background:#8c8c8c"></div>
<div style="left:624.80px;top:286.02px;width:36.08px;height:1.90px;background:#8c8c8c"></div>
<div style="left:663.48px;top:286.02px;width:36.08px;height:1.90px;background:#8c8c8c"></div>
<div style="left:702.16px;top:286.02px;width:36.08px;height:1.90px;background:#8c8c8c"></div>
<div style="left:740.84px;top:286.02px;width:36.08px;height:1.90px;background:#8c8c8c"></div>
<span class="t g" style="left:39.60px;top:199px;font-size:8.6px;color:#000;font-weight:bold;transform:scaleX(1.0705);transform-origin:0 50%;">DCF Valuation</span>
<span class="t g" style="left:39.40px;top:248px;font-size:8.4px;color:#222;transform:scaleX(1.0351);transform-origin:0 50%;">X</span>
<span class="t g" style="left:49.40px;top:248px;font-size:8.6px;color:#fff;font-weight:bold;transform:scaleX(1.0297);transform-origin:0 50%;">DCF</span>
<span class="t g" style="left:39.40px;top:479px;font-size:8.4px;color:#222;transform:scaleX(1.0351);transform-origin:0 50%;">X</span>
<span class="t g" style="left:50.00px;top:479px;font-size:8.6px;color:#fff;font-weight:bold;transform:scaleX(1.0490);transform-origin:0 50%;">Valuation</span>
<span class="t g" style="left:39.80px;top:714px;font-size:8.4px;color:#111;transform:scaleX(1.0133);transform-origin:0 50%;">xEnd</span>
<span class="t g" style="left:225.10px;top:268px;font-size:8.3px;color:#000;font-weight:bold;transform:scaleX(0.8743);transform-origin:0 50%;text-decoration:underline;text-decoration-thickness:0.6px;text-underline-offset:0.4px;">Audited Financial Statements</span>
<span class="t g" style="left:527.60px;top:268px;font-size:8.3px;color:#000;font-weight:bold;transform:scaleX(0.8491);transform-origin:0 50%;text-decoration:underline;text-decoration-thickness:0.6px;text-underline-offset:0.4px;">Forecasted</span>
<span class="t g" style="left:745.58px;top:268px;font-size:8.3px;color:#000;font-weight:bold;transform:scaleX(0.8867);transform-origin:0 50%;">Normal.</span>
<span class="t g" style="left:164.00px;top:277px;font-size:8.3px;color:#000;font-weight:bold;transform:scaleX(0.9050);transform-origin:0 50%;">Unit</span>
<span class="t g" style="left:207.90px;top:277px;font-size:8.3px;color:#000;font-weight:bold;transform:scaleX(0.8955);transform-origin:0 50%;">2020A</span>
<span class="t g" style="left:245.99px;top:277px;font-size:8.3px;color:#000;font-weight:bold;transform:scaleX(0.8955);transform-origin:0 50%;">2021A</span>
<span class="t g" style="left:284.67px;top:277px;font-size:8.3px;color:#000;font-weight:bold;transform:scaleX(0.8955);transform-origin:0 50%;">2022A</span>
<span class="t g" style="left:323.35px;top:277px;font-size:8.3px;color:#000;font-weight:bold;transform:scaleX(0.8955);transform-origin:0 50%;">2023A</span>
<span class="t g" style="left:362.03px;top:277px;font-size:8.3px;color:#000;font-weight:bold;transform:scaleX(0.9126);transform-origin:0 50%;">2024E</span>
<span class="t g" style="left:400.71px;top:277px;font-size:8.3px;color:#000;font-weight:bold;transform:scaleX(0.9126);transform-origin:0 50%;">2025E</span>
<span class="t g" style="left:439.39px;top:277px;font-size:8.3px;color:#000;font-weight:bold;transform:scaleX(0.9126);transform-origin:0 50%;">2026E</span>
<span class="t g" style="left:478.07px;top:277px;font-size:8.3px;color:#000;font-weight:bold;transform:scaleX(0.9126);transform-origin:0 50%;">2027E</span>
<span class="t g" style="left:516.75px;top:277px;font-size:8.3px;color:#000;font-weight:bold;transform:scaleX(0.9126);transform-origin:0 50%;">2028E</span>
<span class="t g" style="left:555.43px;top:277px;font-size:8.3px;color:#000;font-weight:bold;transform:scaleX(0.9126);transform-origin:0 50%;">2029E</span>
<span class="t g" style="left:594.11px;top:277px;font-size:8.3px;color:#000;font-weight:bold;transform:scaleX(0.9126);transform-origin:0 50%;">2030E</span>
<span class="t g" style="left:632.79px;top:277px;font-size:8.3px;color:#000;font-weight:bold;transform:scaleX(0.9126);transform-origin:0 50%;">2031E</span>
<span class="t g" style="left:671.47px;top:277px;font-size:8.3px;color:#000;font-weight:bold;transform:scaleX(0.9126);transform-origin:0 50%;">2032E</span>
<span class="t g" style="left:710.15px;top:277px;font-size:8.3px;color:#000;font-weight:bold;transform:scaleX(0.9126);transform-origin:0 50%;">2033E</span>
<span class="t g" style="left:748.83px;top:277px;font-size:8.3px;color:#000;font-weight:bold;transform:scaleX(0.9126);transform-origin:0 50%;">2033E</span>
<span class="t g" style="left:49.30px;top:290px;font-size:8.3px;color:#000;font-weight:bold;transform:scaleX(0.8544);transform-origin:0 50%;">Revenues</span>
<span class="t g" style="left:160.65px;top:290px;font-size:8.3px;color:#000;font-weight:bold;transform:scaleX(0.8981);transform-origin:0 50%;">$000's</span>
<span class="t g" style="left:248.31px;top:290px;font-size:8.3px;color:#000;font-weight:bold;transform:scaleX(0.9050);transform-origin:0 50%;">25,933</span>
<span class="t g" style="left:286.99px;top:290px;font-size:8.3px;color:#000;font-weight:bold;transform:scaleX(0.9050);transform-origin:0 50%;">27,522</span>
<span class="t g" style="left:325.67px;top:290px;font-size:8.3px;color:#000;font-weight:bold;transform:scaleX(0.9050);transform-origin:0 50%;">31,323</span>
<span class="t g" style="left:364.35px;top:290px;font-size:8.3px;color:#000;font-weight:bold;transform:scaleX(0.9050);transform-origin:0 50%;">33,475</span>
<span class="t g" style="left:403.03px;top:290px;font-size:8.3px;color:#000;font-weight:bold;transform:scaleX(0.9050);transform-origin:0 50%;">35,024</span>
<span class="t g" style="left:441.71px;top:290px;font-size:8.3px;color:#000;font-weight:bold;transform:scaleX(0.9050);transform-origin:0 50%;">37,137</span>
<span class="t g" style="left:480.39px;top:290px;font-size:8.3px;color:#000;font-weight:bold;transform:scaleX(0.9050);transform-origin:0 50%;">39,123</span>
<span class="t g" style="left:519.07px;top:290px;font-size:8.3px;color:#000;font-weight:bold;transform:scaleX(0.9050);transform-origin:0 50%;">41,298</span>
<span class="t g" style="left:557.75px;top:290px;font-size:8.3px;color:#000;font-weight:bold;transform:scaleX(0.9050);transform-origin:0 50%;">42,215</span>
<span class="t g" style="left:596.43px;top:290px;font-size:8.3px;color:#000;font-weight:bold;transform:scaleX(0.9050);transform-origin:0 50%;">43,270</span>
<span class="t g" style="left:635.11px;top:290px;font-size:8.3px;color:#000;font-weight:bold;transform:scaleX(0.9050);transform-origin:0 50%;">44,352</span>
<span class="t g" style="left:673.79px;top:290px;font-size:8.3px;color:#000;font-weight:bold;transform:scaleX(0.9050);transform-origin:0 50%;">45,585</span>
<span class="t g" style="left:712.47px;top:290px;font-size:8.3px;color:#000;font-weight:bold;transform:scaleX(0.9050);transform-origin:0 50%;">46,597</span>
<span class="t g" style="left:751.15px;top:290px;font-size:8.3px;color:#000;font-weight:bold;transform:scaleX(0.9050);transform-origin:0 50%;">46,597</span>
<span class="t g" style="left:49.30px;top:300px;font-size:8.4px;color:#1a1a1a;-webkit-text-stroke:0.22px #1a1a1a;font-style:italic;transform:scaleX(0.9456);transform-origin:0 50%;">Growth</span>
<span class="t g" style="left:160.05px;top:300px;font-size:8.4px;color:#1a1a1a;-webkit-text-stroke:0.22px #1a1a1a;font-style:italic;transform:scaleX(0.9152);transform-origin:0 50%;">Var. %</span>
<span class="t g" style="left:241.88px;top:300px;font-size:8.3px;color:#1a1a1a;-webkit-text-stroke:0.22px #1a1a1a;font-style:italic;transform:scaleX(0.9791);transform-origin:0 50%;">#DIV/0!</span>
<span class="t g" style="left:293.95px;top:300px;font-size:8.3px;color:#1a1a1a;-webkit-text-stroke:0.22px #1a1a1a;font-style:italic;transform:scaleX(0.9150);transform-origin:0 50%;">6.1%</span>
<span class="t g" style="left:328.41px;top:300px;font-size:8.3px;color:#1a1a1a;-webkit-text-stroke:0.22px #1a1a1a;font-style:italic;transform:scaleX(0.9150);transform-origin:0 50%;">13.8%</span>
<span class="t g" style="left:371.31px;top:300px;font-size:8.3px;color:#1a1a1a;-webkit-text-stroke:0.22px #1a1a1a;font-style:italic;transform:scaleX(0.9150);transform-origin:0 50%;">6.9%</span>
<span class="t g" style="left:409.99px;top:300px;font-size:8.3px;color:#1a1a1a;-webkit-text-stroke:0.22px #1a1a1a;font-style:italic;transform:scaleX(0.9150);transform-origin:0 50%;">4.6%</span>
<span class="t g" style="left:448.67px;top:300px;font-size:8.3px;color:#1a1a1a;-webkit-text-stroke:0.22px #1a1a1a;font-style:italic;transform:scaleX(0.9150);transform-origin:0 50%;">6.0%</span>
<span class="t g" style="left:487.35px;top:300px;font-size:8.3px;color:#1a1a1a;-webkit-text-stroke:0.22px #1a1a1a;font-style:italic;transform:scaleX(0.9150);transform-origin:0 50%;">5.3%</span>
<span class="t g" style="left:526.03px;top:300px;font-size:8.3px;color:#1a1a1a;-webkit-text-stroke:0.22px #1a1a1a;font-style:italic;transform:scaleX(0.9150);transform-origin:0 50%;">5.6%</span>
<span class="t g" style="left:564.71px;top:300px;font-size:8.3px;color:#1a1a1a;-webkit-text-stroke:0.22px #1a1a1a;font-style:italic;transform:scaleX(0.9150);transform-origin:0 50%;">2.2%</span>
<span class="t g" style="left:603.39px;top:300px;font-size:8.3px;color:#1a1a1a;-webkit-text-stroke:0.22px #1a1a1a;font-style:italic;transform:scaleX(0.9150);transform-origin:0 50%;">2.5%</span>
<span class="t g" style="left:642.07px;top:300px;font-size:8.3px;color:#1a1a1a;-webkit-text-stroke:0.22px #1a1a1a;font-style:italic;transform:scaleX(0.9150);transform-origin:0 50%;">2.5%</span>
<span class="t g" style="left:680.75px;top:300px;font-size:8.3px;color:#1a1a1a;-webkit-text-stroke:0.22px #1a1a1a;font-style:italic;transform:scaleX(0.9150);transform-origin:0 50%;">2.8%</span>
<span class="t g" style="left:719.43px;top:300px;font-size:8.3px;color:#1a1a1a;-webkit-text-stroke:0.22px #1a1a1a;font-style:italic;transform:scaleX(0.9150);transform-origin:0 50%;">2.2%</span>
<span class="t g" style="left:49.30px;top:313px;font-size:8.4px;color:#141414;-webkit-text-stroke:0.22px #141414;transform:scaleX(0.7843);transform-origin:0 50%;">COGS</span>
<span class="t g" style="left:160.05px;top:313px;font-size:8.4px;color:#141414;-webkit-text-stroke:0.22px #141414;transform:scaleX(0.9433);transform-origin:0 50%;">$000's</span>
<span class="t g" style="left:245.40px;top:313px;font-size:8.3px;color:#141414;-webkit-text-stroke:0.22px #141414;transform:scaleX(0.9150);transform-origin:0 50%;">(10,793)</span>
<span class="t g" style="left:284.08px;top:313px;font-size:8.3px;color:#141414;-webkit-text-stroke:0.22px #141414;transform:scaleX(0.9150);transform-origin:0 50%;">(12,092)</span>
<span class="t g" style="left:322.76px;top:313px;font-size:8.3px;color:#141414;-webkit-text-stroke:0.22px #141414;transform:scaleX(0.9150);transform-origin:0 50%;">(12,615)</span>
<span class="t g" style="left:361.44px;top:313px;font-size:8.3px;color:#141414;-webkit-text-stroke:0.22px #141414;transform:scaleX(0.9150);transform-origin:0 50%;">(13,847)</span>
<span class="t g" style="left:400.12px;top:313px;font-size:8.3px;color:#141414;-webkit-text-stroke:0.22px #141414;transform:scaleX(0.9150);transform-origin:0 50%;">(14,655)</span>
<span class="t g" style="left:438.80px;top:313px;font-size:8.3px;color:#141414;-webkit-text-stroke:0.22px #141414;transform:scaleX(0.9150);transform-origin:0 50%;">(15,644)</span>
<span class="t g" style="left:477.48px;top:313px;font-size:8.3px;color:#141414;-webkit-text-stroke:0.22px #141414;transform:scaleX(0.9150);transform-origin:0 50%;">(16,594)</span>
<span class="t g" style="left:516.16px;top:313px;font-size:8.3px;color:#141414;-webkit-text-stroke:0.22px #141414;transform:scaleX(0.9150);transform-origin:0 50%;">(17,599)</span>
<span class="t g" style="left:554.84px;top:313px;font-size:8.3px;color:#141414;-webkit-text-stroke:0.22px #141414;transform:scaleX(0.9150);transform-origin:0 50%;">(18,066)</span>
<span class="t g" style="left:593.52px;top:313px;font-size:8.3px;color:#141414;-webkit-text-stroke:0.22px #141414;transform:scaleX(0.9150);transform-origin:0 50%;">(18,554)</span>
<span class="t g" style="left:632.20px;top:313px;font-size:8.3px;color:#141414;-webkit-text-stroke:0.22px #141414;transform:scaleX(0.9150);transform-origin:0 50%;">(19,018)</span>
<span class="t g" style="left:670.88px;top:313px;font-size:8.3px;color:#141414;-webkit-text-stroke:0.22px #141414;transform:scaleX(0.9150);transform-origin:0 50%;">(19,578)</span>
<span class="t g" style="left:709.56px;top:313px;font-size:8.3px;color:#141414;-webkit-text-stroke:0.22px #141414;transform:scaleX(0.9150);transform-origin:0 50%;">(20,059)</span>
<span class="t g" style="left:49.30px;top:322px;font-size:8.3px;color:#000;font-weight:bold;transform:scaleX(0.8444);transform-origin:0 50%;">Gross Porfit</span>
<span class="t g" style="left:160.65px;top:322px;font-size:8.3px;color:#000;font-weight:bold;transform:scaleX(0.8981);transform-origin:0 50%;">$000's</span>
<span class="t g" style="left:248.31px;top:322px;font-size:8.3px;color:#000;font-weight:bold;transform:scaleX(0.9050);transform-origin:0 50%;">15,140</span>
<span class="t g" style="left:286.99px;top:322px;font-size:8.3px;color:#000;font-weight:bold;transform:scaleX(0.9050);transform-origin:0 50%;">15,431</span>
<span class="t g" style="left:325.67px;top:322px;font-size:8.3px;color:#000;font-weight:bold;transform:scaleX(0.9050);transform-origin:0 50%;">18,708</span>
<span class="t g" style="left:364.35px;top:322px;font-size:8.3px;color:#000;font-weight:bold;transform:scaleX(0.9050);transform-origin:0 50%;">19,629</span>
<span class="t g" style="left:403.03px;top:322px;font-size:8.3px;color:#000;font-weight:bold;transform:scaleX(0.9050);transform-origin:0 50%;">20,369</span>
<span class="t g" style="left:441.71px;top:322px;font-size:8.3px;color:#000;font-weight:bold;transform:scaleX(0.9050);transform-origin:0 50%;">21,493</span>
<span class="t g" style="left:480.39px;top:322px;font-size:8.3px;color:#000;font-weight:bold;transform:scaleX(0.9050);transform-origin:0 50%;">22,529</span>
<span class="t g" style="left:519.07px;top:322px;font-size:8.3px;color:#000;font-weight:bold;transform:scaleX(0.9050);transform-origin:0 50%;">23,699</span>
<span class="t g" style="left:557.75px;top:322px;font-size:8.3px;color:#000;font-weight:bold;transform:scaleX(0.9050);transform-origin:0 50%;">24,148</span>
<span class="t g" style="left:596.43px;top:322px;font-size:8.3px;color:#000;font-weight:bold;transform:scaleX(0.9050);transform-origin:0 50%;">24,716</span>
<span class="t g" style="left:635.11px;top:322px;font-size:8.3px;color:#000;font-weight:bold;transform:scaleX(0.9050);transform-origin:0 50%;">25,334</span>
<span class="t g" style="left:673.79px;top:322px;font-size:8.3px;color:#000;font-weight:bold;transform:scaleX(0.9050);transform-origin:0 50%;">26,007</span>
<span class="t g" style="left:712.47px;top:322px;font-size:8.3px;color:#000;font-weight:bold;transform:scaleX(0.9050);transform-origin:0 50%;">26,538</span>
<span class="t g" style="left:751.15px;top:322px;font-size:8.3px;color:#000;font-weight:bold;transform:scaleX(0.9050);transform-origin:0 50%;">26,538</span>
<span class="t g" style="left:49.30px;top:332px;font-size:8.4px;color:#1a1a1a;-webkit-text-stroke:0.22px #1a1a1a;font-style:italic;transform:scaleX(0.9105);transform-origin:0 50%;">Gross Margin</span>
<div style="left:148.00px;top:332px;width:60px;height:10px;overflow:hidden"><span class="t g" style="left:-3.15px;top:0;font-size:8.4px;font-style:italic;color:#1a1a1a;transform:scaleX(0.9041);transform-origin:0 50%">% of Revenues</span></div>
<span class="t g" style="left:251.05px;top:332px;font-size:8.3px;color:#1a1a1a;-webkit-text-stroke:0.22px #1a1a1a;font-style:italic;transform:scaleX(0.9150);transform-origin:0 50%;">58.4%</span>
<span class="t g" style="left:289.73px;top:332px;font-size:8.3px;color:#1a1a1a;-webkit-text-stroke:0.22px #1a1a1a;font-style:italic;transform:scaleX(0.9150);transform-origin:0 50%;">56.1%</span>
<span class="t g" style="left:328.41px;top:332px;font-size:8.3px;color:#1a1a1a;-webkit-text-stroke:0.22px #1a1a1a;font-style:italic;transform:scaleX(0.9150);transform-origin:0 50%;">59.7%</span>
<span class="t g" style="left:367.09px;top:332px;font-size:8.3px;color:#1a1a1a;-webkit-text-stroke:0.22px #1a1a1a;font-style:italic;transform:scaleX(0.9150);transform-origin:0 50%;">58.6%</span>
<span class="t g" style="left:405.77px;top:332px;font-size:8.3px;color:#1a1a1a;-webkit-text-stroke:0.22px #1a1a1a;font-style:italic;transform:scaleX(0.9150);transform-origin:0 50%;">58.2%</span>
<span class="t g" style="left:444.45px;top:332px;font-size:8.3px;color:#1a1a1a;-webkit-text-stroke:0.22px #1a1a1a;font-style:italic;transform:scaleX(0.9150);transform-origin:0 50%;">57.9%</span>
<span class="t g" style="left:483.13px;top:332px;font-size:8.3px;color:#1a1a1a;-webkit-text-stroke:0.22px #1a1a1a;font-style:italic;transform:scaleX(0.9150);transform-origin:0 50%;">57.6%</span>
<span class="t g" style="left:521.81px;top:332px;font-size:8.3px;color:#1a1a1a;-webkit-text-stroke:0.22px #1a1a1a;font-style:italic;transform:scaleX(0.9150);transform-origin:0 50%;">57.4%</span>
<span class="t g" style="left:560.49px;top:332px;font-size:8.3px;color:#1a1a1a;-webkit-text-stroke:0.22px #1a1a1a;font-style:italic;transform:scaleX(0.9150);transform-origin:0 50%;">57.2%</span>
<span class="t g" style="left:599.17px;top:332px;font-size:8.3px;color:#1a1a1a;-webkit-text-stroke:0.22px #1a1a1a;font-style:italic;transform:scaleX(0.9150);transform-origin:0 50%;">57.1%</span>
<span class="t g" style="left:637.85px;top:332px;font-size:8.3px;color:#1a1a1a;-webkit-text-stroke:0.22px #1a1a1a;font-style:italic;transform:scaleX(0.9150);transform-origin:0 50%;">57.1%</span>
<span class="t g" style="left:676.53px;top:332px;font-size:8.3px;color:#1a1a1a;-webkit-text-stroke:0.22px #1a1a1a;font-style:italic;transform:scaleX(0.9150);transform-origin:0 50%;">57.1%</span>
<span class="t g" style="left:715.21px;top:332px;font-size:8.3px;color:#1a1a1a;-webkit-text-stroke:0.22px #1a1a1a;font-style:italic;transform:scaleX(0.9150);transform-origin:0 50%;">57.0%</span>
<span class="t g" style="left:49.30px;top:345px;font-size:8.4px;color:#141414;-webkit-text-stroke:0.22px #141414;transform:scaleX(0.8654);transform-origin:0 50%;">SG&amp;A</span>
<span class="t g" style="left:160.05px;top:345px;font-size:8.4px;color:#141414;-webkit-text-stroke:0.22px #141414;transform:scaleX(0.9433);transform-origin:0 50%;">$000's</span>
<span class="t g" style="left:255.95px;top:345px;font-size:8.3px;color:#141414;-webkit-text-stroke:0.22px #141414;transform:scaleX(0.9150);transform-origin:0 50%;">(396)</span>
<span class="t g" style="left:294.63px;top:345px;font-size:8.3px;color:#141414;-webkit-text-stroke:0.22px #141414;transform:scaleX(0.9150);transform-origin:0 50%;">(416)</span>
<span class="t g" style="left:333.31px;top:345px;font-size:8.3px;color:#141414;-webkit-text-stroke:0.22px #141414;transform:scaleX(0.9150);transform-origin:0 50%;">(496)</span>
<span class="t g" style="left:371.99px;top:345px;font-size:8.3px;color:#141414;-webkit-text-stroke:0.22px #141414;transform:scaleX(0.9150);transform-origin:0 50%;">(525)</span>
<span class="t g" style="left:410.67px;top:345px;font-size:8.3px;color:#141414;-webkit-text-stroke:0.22px #141414;transform:scaleX(0.9150);transform-origin:0 50%;">(546)</span>
<span class="t g" style="left:449.35px;top:345px;font-size:8.3px;color:#141414;-webkit-text-stroke:0.22px #141414;transform:scaleX(0.9150);transform-origin:0 50%;">(567)</span>
<span class="t g" style="left:488.03px;top:345px;font-size:8.3px;color:#141414;-webkit-text-stroke:0.22px #141414;transform:scaleX(0.9150);transform-origin:0 50%;">(587)</span>
<span class="t g" style="left:526.71px;top:345px;font-size:8.3px;color:#141414;-webkit-text-stroke:0.22px #141414;transform:scaleX(0.9150);transform-origin:0 50%;">(607)</span>
<span class="t g" style="left:565.39px;top:345px;font-size:8.3px;color:#141414;-webkit-text-stroke:0.22px #141414;transform:scaleX(0.9150);transform-origin:0 50%;">(625)</span>
<span class="t g" style="left:604.07px;top:345px;font-size:8.3px;color:#141414;-webkit-text-stroke:0.22px #141414;transform:scaleX(0.9150);transform-origin:0 50%;">(642)</span>
<span class="t g" style="left:642.75px;top:345px;font-size:8.3px;color:#141414;-webkit-text-stroke:0.22px #141414;transform:scaleX(0.9150);transform-origin:0 50%;">(658)</span>
<span class="t g" style="left:681.43px;top:345px;font-size:8.3px;color:#141414;-webkit-text-stroke:0.22px #141414;transform:scaleX(0.9150);transform-origin:0 50%;">(675)</span>
<span class="t g" style="left:720.11px;top:345px;font-size:8.3px;color:#141414;-webkit-text-stroke:0.22px #141414;transform:scaleX(0.9150);transform-origin:0 50%;">(694)</span>
<span class="t g" style="left:758.79px;top:345px;font-size:8.3px;color:#141414;-webkit-text-stroke:0.22px #141414;transform:scaleX(0.9150);transform-origin:0 50%;">(694)</span>
<span class="t g" style="left:49.30px;top:355px;font-size:8.3px;color:#000;font-weight:bold;transform:scaleX(0.8448);transform-origin:0 50%;">EBITDA</span>
<span class="t g" style="left:160.65px;top:355px;font-size:8.3px;color:#000;font-weight:bold;transform:scaleX(0.8981);transform-origin:0 50%;">$000's</span>
<span class="t g" style="left:248.31px;top:355px;font-size:8.3px;color:#000;font-weight:bold;transform:scaleX(0.9050);transform-origin:0 50%;">14,744</span>
<span class="t g" style="left:286.99px;top:355px;font-size:8.3px;color:#000;font-weight:bold;transform:scaleX(0.9050);transform-origin:0 50%;">15,015</span>
<span class="t g" style="left:325.67px;top:355px;font-size:8.3px;color:#000;font-weight:bold;transform:scaleX(0.9050);transform-origin:0 50%;">18,212</span>
<span class="t g" style="left:364.35px;top:355px;font-size:8.3px;color:#000;font-weight:bold;transform:scaleX(0.9050);transform-origin:0 50%;">19,103</span>
<span class="t g" style="left:403.03px;top:355px;font-size:8.3px;color:#000;font-weight:bold;transform:scaleX(0.9050);transform-origin:0 50%;">19,823</span>
<span class="t g" style="left:441.71px;top:355px;font-size:8.3px;color:#000;font-weight:bold;transform:scaleX(0.9050);transform-origin:0 50%;">20,926</span>
<span class="t g" style="left:480.39px;top:355px;font-size:8.3px;color:#000;font-weight:bold;transform:scaleX(0.9050);transform-origin:0 50%;">21,942</span>
<span class="t g" style="left:519.07px;top:355px;font-size:8.3px;color:#000;font-weight:bold;transform:scaleX(0.9050);transform-origin:0 50%;">23,092</span>
<span class="t g" style="left:557.75px;top:355px;font-size:8.3px;color:#000;font-weight:bold;transform:scaleX(0.9050);transform-origin:0 50%;">23,524</span>
<span class="t g" style="left:596.43px;top:355px;font-size:8.3px;color:#000;font-weight:bold;transform:scaleX(0.9050);transform-origin:0 50%;">24,074</span>
<span class="t g" style="left:635.11px;top:355px;font-size:8.3px;color:#000;font-weight:bold;transform:scaleX(0.9050);transform-origin:0 50%;">24,676</span>
<span class="t g" style="left:673.79px;top:355px;font-size:8.3px;color:#000;font-weight:bold;transform:scaleX(0.9050);transform-origin:0 50%;">25,332</span>
<span class="t g" style="left:712.47px;top:355px;font-size:8.3px;color:#000;font-weight:bold;transform:scaleX(0.9050);transform-origin:0 50%;">25,845</span>
<span class="t g" style="left:751.15px;top:355px;font-size:8.3px;color:#000;font-weight:bold;transform:scaleX(0.9050);transform-origin:0 50%;">25,845</span>
<span class="t g" style="left:49.30px;top:365px;font-size:8.4px;color:#1a1a1a;-webkit-text-stroke:0.22px #1a1a1a;font-style:italic;transform:scaleX(0.8908);transform-origin:0 50%;">EBITDA Margin</span>
<span class="t g" style="left:251.05px;top:365px;font-size:8.3px;color:#1a1a1a;-webkit-text-stroke:0.22px #1a1a1a;font-style:italic;transform:scaleX(0.9150);transform-origin:0 50%;">56.9%</span>
<span class="t g" style="left:289.73px;top:365px;font-size:8.3px;color:#1a1a1a;-webkit-text-stroke:0.22px #1a1a1a;font-style:italic;transform:scaleX(0.9150);transform-origin:0 50%;">54.6%</span>
<span class="t g" style="left:328.41px;top:365px;font-size:8.3px;color:#1a1a1a;-webkit-text-stroke:0.22px #1a1a1a;font-style:italic;transform:scaleX(0.9150);transform-origin:0 50%;">58.1%</span>
<span class="t g" style="left:367.09px;top:365px;font-size:8.3px;color:#1a1a1a;-webkit-text-stroke:0.22px #1a1a1a;font-style:italic;transform:scaleX(0.9150);transform-origin:0 50%;">57.1%</span>
<span class="t g" style="left:405.77px;top:365px;font-size:8.3px;color:#1a1a1a;-webkit-text-stroke:0.22px #1a1a1a;font-style:italic;transform:scaleX(0.9150);transform-origin:0 50%;">56.6%</span>
<span class="t g" style="left:444.45px;top:365px;font-size:8.3px;color:#1a1a1a;-webkit-text-stroke:0.22px #1a1a1a;font-style:italic;transform:scaleX(0.9150);transform-origin:0 50%;">56.3%</span>
<span class="t g" style="left:483.13px;top:365px;font-size:8.3px;color:#1a1a1a;-webkit-text-stroke:0.22px #1a1a1a;font-style:italic;transform:scaleX(0.9150);transform-origin:0 50%;">56.1%</span>
<span class="t g" style="left:521.81px;top:365px;font-size:8.3px;color:#1a1a1a;-webkit-text-stroke:0.22px #1a1a1a;font-style:italic;transform:scaleX(0.9150);transform-origin:0 50%;">55.9%</span>
<span class="t g" style="left:560.49px;top:365px;font-size:8.3px;color:#1a1a1a;-webkit-text-stroke:0.22px #1a1a1a;font-style:italic;transform:scaleX(0.9150);transform-origin:0 50%;">55.7%</span>
<span class="t g" style="left:599.17px;top:365px;font-size:8.3px;color:#1a1a1a;-webkit-text-stroke:0.22px #1a1a1a;font-style:italic;transform:scaleX(0.9150);transform-origin:0 50%;">55.6%</span>
<span class="t g" style="left:637.85px;top:365px;font-size:8.3px;color:#1a1a1a;-webkit-text-stroke:0.22px #1a1a1a;font-style:italic;transform:scaleX(0.9150);transform-origin:0 50%;">55.6%</span>
<span class="t g" style="left:676.53px;top:365px;font-size:8.3px;color:#1a1a1a;-webkit-text-stroke:0.22px #1a1a1a;font-style:italic;transform:scaleX(0.9150);transform-origin:0 50%;">55.6%</span>
<span class="t g" style="left:715.21px;top:365px;font-size:8.3px;color:#1a1a1a;-webkit-text-stroke:0.22px #1a1a1a;font-style:italic;transform:scaleX(0.9150);transform-origin:0 50%;">55.5%</span>
<span class="t g" style="left:49.30px;top:377px;font-size:8.4px;color:#141414;-webkit-text-stroke:0.22px #141414;transform:scaleX(0.9147);transform-origin:0 50%;">D&amp;A</span>
<span class="t g" style="left:160.05px;top:377px;font-size:8.4px;color:#141414;-webkit-text-stroke:0.22px #141414;transform:scaleX(0.9433);transform-origin:0 50%;">$000's</span>
<span class="t g" style="left:249.62px;top:377px;font-size:8.3px;color:#141414;-webkit-text-stroke:0.22px #141414;transform:scaleX(0.9150);transform-origin:0 50%;">(1,313)</span>
<span class="t g" style="left:288.30px;top:377px;font-size:8.3px;color:#141414;-webkit-text-stroke:0.22px #141414;transform:scaleX(0.9150);transform-origin:0 50%;">(1,490)</span>
<span class="t g" style="left:326.98px;top:377px;font-size:8.3px;color:#141414;-webkit-text-stroke:0.22px #141414;transform:scaleX(0.9150);transform-origin:0 50%;">(1,604)</span>
<span class="t g" style="left:365.66px;top:377px;font-size:8.3px;color:#141414;-webkit-text-stroke:0.22px #141414;transform:scaleX(0.9150);transform-origin:0 50%;">(1,578)</span>
<span class="t g" style="left:404.34px;top:377px;font-size:8.3px;color:#141414;-webkit-text-stroke:0.22px #141414;transform:scaleX(0.9150);transform-origin:0 50%;">(1,698)</span>
<span class="t g" style="left:443.02px;top:377px;font-size:8.3px;color:#141414;-webkit-text-stroke:0.22px #141414;transform:scaleX(0.9150);transform-origin:0 50%;">(1,824)</span>
<span class="t g" style="left:481.70px;top:377px;font-size:8.3px;color:#141414;-webkit-text-stroke:0.22px #141414;transform:scaleX(0.9150);transform-origin:0 50%;">(1,957)</span>
<span class="t g" style="left:520.38px;top:377px;font-size:8.3px;color:#141414;-webkit-text-stroke:0.22px #141414;transform:scaleX(0.9150);transform-origin:0 50%;">(2,096)</span>
<span class="t g" style="left:559.06px;top:377px;font-size:8.3px;color:#141414;-webkit-text-stroke:0.22px #141414;transform:scaleX(0.9150);transform-origin:0 50%;">(2,243)</span>
<span class="t g" style="left:597.74px;top:377px;font-size:8.3px;color:#141414;-webkit-text-stroke:0.22px #141414;transform:scaleX(0.9150);transform-origin:0 50%;">(2,393)</span>
<span class="t g" style="left:636.42px;top:377px;font-size:8.3px;color:#141414;-webkit-text-stroke:0.22px #141414;transform:scaleX(0.9150);transform-origin:0 50%;">(2,545)</span>
<span class="t g" style="left:675.10px;top:377px;font-size:8.3px;color:#141414;-webkit-text-stroke:0.22px #141414;transform:scaleX(0.9150);transform-origin:0 50%;">(2,435)</span>
<span class="t g" style="left:713.78px;top:377px;font-size:8.3px;color:#141414;-webkit-text-stroke:0.22px #141414;transform:scaleX(0.9150);transform-origin:0 50%;">(2,572)</span>
<span class="t g" style="left:752.46px;top:377px;font-size:8.3px;color:#141414;-webkit-text-stroke:0.22px #141414;transform:scaleX(0.9150);transform-origin:0 50%;">(2,572)</span>
<span class="t g" style="left:49.30px;top:387px;font-size:8.3px;color:#000;font-weight:bold;transform:scaleX(0.7934);transform-origin:0 50%;">EBIT</span>
<span class="t g" style="left:160.65px;top:387px;font-size:8.3px;color:#000;font-weight:bold;transform:scaleX(0.8981);transform-origin:0 50%;">$000's</span>
<span class="t g" style="left:248.31px;top:387px;font-size:8.3px;color:#000;font-weight:bold;transform:scaleX(0.9050);transform-origin:0 50%;">13,431</span>
<span class="t g" style="left:286.99px;top:387px;font-size:8.3px;color:#000;font-weight:bold;transform:scaleX(0.9050);transform-origin:0 50%;">13,525</span>
<span class="t g" style="left:325.67px;top:387px;font-size:8.3px;color:#000;font-weight:bold;transform:scaleX(0.9050);transform-origin:0 50%;">16,608</span>
<span class="t g" style="left:364.35px;top:387px;font-size:8.3px;color:#000;font-weight:bold;transform:scaleX(0.9050);transform-origin:0 50%;">17,526</span>
<span class="t g" style="left:403.03px;top:387px;font-size:8.3px;color:#000;font-weight:bold;transform:scaleX(0.9050);transform-origin:0 50%;">18,124</span>
<span class="t g" style="left:441.71px;top:387px;font-size:8.3px;color:#000;font-weight:bold;transform:scaleX(0.9050);transform-origin:0 50%;">19,102</span>
<span class="t g" style="left:480.39px;top:387px;font-size:8.3px;color:#000;font-weight:bold;transform:scaleX(0.9050);transform-origin:0 50%;">19,985</span>
<span class="t g" style="left:519.07px;top:387px;font-size:8.3px;color:#000;font-weight:bold;transform:scaleX(0.9050);transform-origin:0 50%;">20,996</span>
<span class="t g" style="left:557.75px;top:387px;font-size:8.3px;color:#000;font-weight:bold;transform:scaleX(0.9050);transform-origin:0 50%;">21,281</span>
<span class="t g" style="left:596.43px;top:387px;font-size:8.3px;color:#000;font-weight:bold;transform:scaleX(0.9050);transform-origin:0 50%;">21,682</span>
<span class="t g" style="left:635.11px;top:387px;font-size:8.3px;color:#000;font-weight:bold;transform:scaleX(0.9050);transform-origin:0 50%;">22,131</span>
<span class="t g" style="left:673.79px;top:387px;font-size:8.3px;color:#000;font-weight:bold;transform:scaleX(0.9050);transform-origin:0 50%;">22,897</span>
<span class="t g" style="left:712.47px;top:387px;font-size:8.3px;color:#000;font-weight:bold;transform:scaleX(0.9050);transform-origin:0 50%;">23,273</span>
<span class="t g" style="left:751.15px;top:387px;font-size:8.3px;color:#000;font-weight:bold;transform:scaleX(0.9050);transform-origin:0 50%;">23,273</span>
<span class="t g" style="left:49.30px;top:397px;font-size:8.4px;color:#1a1a1a;-webkit-text-stroke:0.22px #1a1a1a;font-style:italic;transform:scaleX(0.8976);transform-origin:0 50%;">EBIT Margin</span>
<span class="t g" style="left:251.05px;top:397px;font-size:8.3px;color:#1a1a1a;-webkit-text-stroke:0.22px #1a1a1a;font-style:italic;transform:scaleX(0.9150);transform-origin:0 50%;">51.8%</span>
<span class="t g" style="left:289.73px;top:397px;font-size:8.3px;color:#1a1a1a;-webkit-text-stroke:0.22px #1a1a1a;font-style:italic;transform:scaleX(0.9150);transform-origin:0 50%;">49.1%</span>
<span class="t g" style="left:328.41px;top:397px;font-size:8.3px;color:#1a1a1a;-webkit-text-stroke:0.22px #1a1a1a;font-style:italic;transform:scaleX(0.9150);transform-origin:0 50%;">53.0%</span>
<span class="t g" style="left:367.09px;top:397px;font-size:8.3px;color:#1a1a1a;-webkit-text-stroke:0.22px #1a1a1a;font-style:italic;transform:scaleX(0.9150);transform-origin:0 50%;">52.4%</span>
<span class="t g" style="left:405.77px;top:397px;font-size:8.3px;color:#1a1a1a;-webkit-text-stroke:0.22px #1a1a1a;font-style:italic;transform:scaleX(0.9150);transform-origin:0 50%;">51.7%</span>
<span class="t g" style="left:444.45px;top:397px;font-size:8.3px;color:#1a1a1a;-webkit-text-stroke:0.22px #1a1a1a;font-style:italic;transform:scaleX(0.9150);transform-origin:0 50%;">51.4%</span>
<span class="t g" style="left:483.13px;top:397px;font-size:8.3px;color:#1a1a1a;-webkit-text-stroke:0.22px #1a1a1a;font-style:italic;transform:scaleX(0.9150);transform-origin:0 50%;">51.1%</span>
<span class="t g" style="left:521.81px;top:397px;font-size:8.3px;color:#1a1a1a;-webkit-text-stroke:0.22px #1a1a1a;font-style:italic;transform:scaleX(0.9150);transform-origin:0 50%;">50.8%</span>
<span class="t g" style="left:560.49px;top:397px;font-size:8.3px;color:#1a1a1a;-webkit-text-stroke:0.22px #1a1a1a;font-style:italic;transform:scaleX(0.9150);transform-origin:0 50%;">50.4%</span>
<span class="t g" style="left:599.17px;top:397px;font-size:8.3px;color:#1a1a1a;-webkit-text-stroke:0.22px #1a1a1a;font-style:italic;transform:scaleX(0.9150);transform-origin:0 50%;">50.1%</span>
<span class="t g" style="left:637.85px;top:397px;font-size:8.3px;color:#1a1a1a;-webkit-text-stroke:0.22px #1a1a1a;font-style:italic;transform:scaleX(0.9150);transform-origin:0 50%;">49.9%</span>
<span class="t g" style="left:676.53px;top:397px;font-size:8.3px;color:#1a1a1a;-webkit-text-stroke:0.22px #1a1a1a;font-style:italic;transform:scaleX(0.9150);transform-origin:0 50%;">50.2%</span>
<span class="t g" style="left:715.21px;top:397px;font-size:8.3px;color:#1a1a1a;-webkit-text-stroke:0.22px #1a1a1a;font-style:italic;transform:scaleX(0.9150);transform-origin:0 50%;">49.9%</span>
<span class="t g" style="left:49.30px;top:410px;font-size:8.4px;color:#141414;-webkit-text-stroke:0.22px #141414;transform:scaleX(0.9753);transform-origin:0 50%;">Taxes</span>
<span class="t g" style="left:160.05px;top:410px;font-size:8.4px;color:#141414;-webkit-text-stroke:0.22px #141414;transform:scaleX(0.9433);transform-origin:0 50%;">$000's</span>
<span class="t g" style="left:249.62px;top:410px;font-size:8.3px;color:#141414;-webkit-text-stroke:0.22px #141414;transform:scaleX(0.9150);transform-origin:0 50%;">(4,029)</span>
<span class="t g" style="left:288.30px;top:410px;font-size:8.3px;color:#141414;-webkit-text-stroke:0.22px #141414;transform:scaleX(0.9150);transform-origin:0 50%;">(4,058)</span>
<span class="t g" style="left:326.98px;top:410px;font-size:8.3px;color:#141414;-webkit-text-stroke:0.22px #141414;transform:scaleX(0.9150);transform-origin:0 50%;">(4,982)</span>
<span class="t g" style="left:365.66px;top:410px;font-size:8.3px;color:#141414;-webkit-text-stroke:0.22px #141414;transform:scaleX(0.9150);transform-origin:0 50%;">(5,258)</span>
<span class="t g" style="left:404.34px;top:410px;font-size:8.3px;color:#141414;-webkit-text-stroke:0.22px #141414;transform:scaleX(0.9150);transform-origin:0 50%;">(5,437)</span>
<span class="t g" style="left:443.02px;top:410px;font-size:8.3px;color:#141414;-webkit-text-stroke:0.22px #141414;transform:scaleX(0.9150);transform-origin:0 50%;">(5,731)</span>
<span class="t g" style="left:481.70px;top:410px;font-size:8.3px;color:#141414;-webkit-text-stroke:0.22px #141414;transform:scaleX(0.9150);transform-origin:0 50%;">(5,996)</span>
<span class="t g" style="left:520.38px;top:410px;font-size:8.3px;color:#141414;-webkit-text-stroke:0.22px #141414;transform:scaleX(0.9150);transform-origin:0 50%;">(6,299)</span>
<span class="t g" style="left:559.06px;top:410px;font-size:8.3px;color:#141414;-webkit-text-stroke:0.22px #141414;transform:scaleX(0.9150);transform-origin:0 50%;">(6,384)</span>
<span class="t g" style="left:597.74px;top:410px;font-size:8.3px;color:#141414;-webkit-text-stroke:0.22px #141414;transform:scaleX(0.9150);transform-origin:0 50%;">(6,505)</span>
<span class="t g" style="left:636.42px;top:410px;font-size:8.3px;color:#141414;-webkit-text-stroke:0.22px #141414;transform:scaleX(0.9150);transform-origin:0 50%;">(6,639)</span>
<span class="t g" style="left:675.10px;top:410px;font-size:8.3px;color:#141414;-webkit-text-stroke:0.22px #141414;transform:scaleX(0.9150);transform-origin:0 50%;">(6,869)</span>
<span class="t g" style="left:713.78px;top:410px;font-size:8.3px;color:#141414;-webkit-text-stroke:0.22px #141414;transform:scaleX(0.9150);transform-origin:0 50%;">(6,982)</span>
<span class="t g" style="left:752.46px;top:410px;font-size:8.3px;color:#141414;-webkit-text-stroke:0.22px #141414;transform:scaleX(0.9150);transform-origin:0 50%;">(6,982)</span>
<span class="t g" style="left:49.30px;top:419px;font-size:8.3px;color:#000;font-weight:bold;transform:scaleX(0.8735);transform-origin:0 50%;">NOPAT</span>
<span class="t g" style="left:160.65px;top:419px;font-size:8.3px;color:#000;font-weight:bold;transform:scaleX(0.8981);transform-origin:0 50%;">$000's</span>
<span class="t g" style="left:252.48px;top:419px;font-size:8.3px;color:#000;font-weight:bold;transform:scaleX(0.9050);transform-origin:0 50%;">9,402</span>
<span class="t g" style="left:291.16px;top:419px;font-size:8.3px;color:#000;font-weight:bold;transform:scaleX(0.9050);transform-origin:0 50%;">9,468</span>
<span class="t g" style="left:326.08px;top:419px;font-size:8.3px;color:#000;font-weight:bold;transform:scaleX(0.9050);transform-origin:0 50%;">11,625</span>
<span class="t g" style="left:364.35px;top:419px;font-size:8.3px;color:#000;font-weight:bold;transform:scaleX(0.9050);transform-origin:0 50%;">12,268</span>
<span class="t g" style="left:403.03px;top:419px;font-size:8.3px;color:#000;font-weight:bold;transform:scaleX(0.9050);transform-origin:0 50%;">12,687</span>
<span class="t g" style="left:441.71px;top:419px;font-size:8.3px;color:#000;font-weight:bold;transform:scaleX(0.9050);transform-origin:0 50%;">13,372</span>
<span class="t g" style="left:480.39px;top:419px;font-size:8.3px;color:#000;font-weight:bold;transform:scaleX(0.9050);transform-origin:0 50%;">13,990</span>
<span class="t g" style="left:519.07px;top:419px;font-size:8.3px;color:#000;font-weight:bold;transform:scaleX(0.9050);transform-origin:0 50%;">14,697</span>
<span class="t g" style="left:557.75px;top:419px;font-size:8.3px;color:#000;font-weight:bold;transform:scaleX(0.9050);transform-origin:0 50%;">14,896</span>
<span class="t g" style="left:596.43px;top:419px;font-size:8.3px;color:#000;font-weight:bold;transform:scaleX(0.9050);transform-origin:0 50%;">15,177</span>
<span class="t g" style="left:635.11px;top:419px;font-size:8.3px;color:#000;font-weight:bold;transform:scaleX(0.9050);transform-origin:0 50%;">15,492</span>
<span class="t g" style="left:673.79px;top:419px;font-size:8.3px;color:#000;font-weight:bold;transform:scaleX(0.9050);transform-origin:0 50%;">16,028</span>
<span class="t g" style="left:712.47px;top:419px;font-size:8.3px;color:#000;font-weight:bold;transform:scaleX(0.9050);transform-origin:0 50%;">16,291</span>
<span class="t g" style="left:751.15px;top:419px;font-size:8.3px;color:#000;font-weight:bold;transform:scaleX(0.9050);transform-origin:0 50%;">16,291</span>
<span class="t g" style="left:49.30px;top:429px;font-size:8.4px;color:#141414;-webkit-text-stroke:0.22px #141414;transform:scaleX(0.9201);transform-origin:0 50%;">(+) D&amp;A</span>
<span class="t g" style="left:160.05px;top:429px;font-size:8.4px;color:#141414;-webkit-text-stroke:0.22px #141414;transform:scaleX(0.9433);transform-origin:0 50%;">$000's</span>
<span class="t g" style="left:252.28px;top:429px;font-size:8.3px;color:#141414;-webkit-text-stroke:0.22px #141414;transform:scaleX(0.9150);transform-origin:0 50%;">1,313</span>
<span class="t g" style="left:290.96px;top:429px;font-size:8.3px;color:#141414;-webkit-text-stroke:0.22px #141414;transform:scaleX(0.9150);transform-origin:0 50%;">1,490</span>
<span class="t g" style="left:329.64px;top:429px;font-size:8.3px;color:#141414;-webkit-text-stroke:0.22px #141414;transform:scaleX(0.9150);transform-origin:0 50%;">1,604</span>
<span class="t g" style="left:368.32px;top:429px;font-size:8.3px;color:#141414;-webkit-text-stroke:0.22px #141414;transform:scaleX(0.9150);transform-origin:0 50%;">1,578</span>
<span class="t g" style="left:407.00px;top:429px;font-size:8.3px;color:#141414;-webkit-text-stroke:0.22px #141414;transform:scaleX(0.9150);transform-origin:0 50%;">1,698</span>
<span class="t g" style="left:445.68px;top:429px;font-size:8.3px;color:#141414;-webkit-text-stroke:0.22px #141414;transform:scaleX(0.9150);transform-origin:0 50%;">1,824</span>
<span class="t g" style="left:484.36px;top:429px;font-size:8.3px;color:#141414;-webkit-text-stroke:0.22px #141414;transform:scaleX(0.9150);transform-origin:0 50%;">1,957</span>
<span class="t g" style="left:523.04px;top:429px;font-size:8.3px;color:#141414;-webkit-text-stroke:0.22px #141414;transform:scaleX(0.9150);transform-origin:0 50%;">2,096</span>
<span class="t g" style="left:561.72px;top:429px;font-size:8.3px;color:#141414;-webkit-text-stroke:0.22px #141414;transform:scaleX(0.9150);transform-origin:0 50%;">2,243</span>
<span class="t g" style="left:600.40px;top:429px;font-size:8.3px;color:#141414;-webkit-text-stroke:0.22px #141414;transform:scaleX(0.9150);transform-origin:0 50%;">2,393</span>
<span class="t g" style="left:639.08px;top:429px;font-size:8.3px;color:#141414;-webkit-text-stroke:0.22px #141414;transform:scaleX(0.9150);transform-origin:0 50%;">2,545</span>
<span class="t g" style="left:677.76px;top:429px;font-size:8.3px;color:#141414;-webkit-text-stroke:0.22px #141414;transform:scaleX(0.9150);transform-origin:0 50%;">2,435</span>
<span class="t g" style="left:716.44px;top:429px;font-size:8.3px;color:#141414;-webkit-text-stroke:0.22px #141414;transform:scaleX(0.9150);transform-origin:0 50%;">2,572</span>
<span class="t g" style="left:755.12px;top:429px;font-size:8.3px;color:#141414;-webkit-text-stroke:0.22px #141414;transform:scaleX(0.9150);transform-origin:0 50%;">2,572</span>
<span class="t g" style="left:49.30px;top:439px;font-size:8.4px;color:#141414;-webkit-text-stroke:0.22px #141414;transform:scaleX(0.9633);transform-origin:0 50%;">(-) Change in WK</span>
<span class="t g" style="left:160.05px;top:439px;font-size:8.4px;color:#141414;-webkit-text-stroke:0.22px #141414;transform:scaleX(0.9433);transform-origin:0 50%;">$000's</span>
<span class="t g" style="left:371.99px;top:439px;font-size:8.3px;color:#141414;-webkit-text-stroke:0.22px #141414;transform:scaleX(0.9150);transform-origin:0 50%;">(262)</span>
<span class="t g" style="left:414.90px;top:439px;font-size:8.3px;color:#141414;-webkit-text-stroke:0.22px #141414;transform:scaleX(0.9150);transform-origin:0 50%;">(84)</span>
<span class="t g" style="left:449.35px;top:439px;font-size:8.3px;color:#141414;-webkit-text-stroke:0.22px #141414;transform:scaleX(0.9150);transform-origin:0 50%;">(120)</span>
<span class="t g" style="left:488.60px;top:439px;font-size:8.3px;color:#141414;-webkit-text-stroke:0.22px #141414;transform:scaleX(0.9150);transform-origin:0 50%;">(110)</span>
<span class="t g" style="left:527.28px;top:439px;font-size:8.3px;color:#141414;-webkit-text-stroke:0.22px #141414;transform:scaleX(0.9150);transform-origin:0 50%;">(118)</span>
<span class="t g" style="left:569.62px;top:439px;font-size:8.3px;color:#141414;-webkit-text-stroke:0.22px #141414;transform:scaleX(0.9150);transform-origin:0 50%;">(54)</span>
<span class="t g" style="left:608.30px;top:439px;font-size:8.3px;color:#141414;-webkit-text-stroke:0.22px #141414;transform:scaleX(0.9150);transform-origin:0 50%;">(60)</span>
<span class="t g" style="left:646.98px;top:439px;font-size:8.3px;color:#141414;-webkit-text-stroke:0.22px #141414;transform:scaleX(0.9150);transform-origin:0 50%;">(66)</span>
<span class="t g" style="left:685.66px;top:439px;font-size:8.3px;color:#141414;-webkit-text-stroke:0.22px #141414;transform:scaleX(0.9150);transform-origin:0 50%;">(64)</span>
<span class="t g" style="left:724.34px;top:439px;font-size:8.3px;color:#141414;-webkit-text-stroke:0.22px #141414;transform:scaleX(0.9150);transform-origin:0 50%;">(64)</span>
<span class="t g" style="left:763.02px;top:439px;font-size:8.3px;color:#141414;-webkit-text-stroke:0.22px #141414;transform:scaleX(0.9150);transform-origin:0 50%;">(64)</span>
<span class="t g" style="left:49.30px;top:449px;font-size:8.4px;color:#141414;-webkit-text-stroke:0.22px #141414;transform:scaleX(0.8960);transform-origin:0 50%;">(-) CapEx</span>
<span class="t g" style="left:160.05px;top:449px;font-size:8.4px;color:#141414;-webkit-text-stroke:0.22px #141414;transform:scaleX(0.9433);transform-origin:0 50%;">$000's</span>
<span class="t g" style="left:365.66px;top:449px;font-size:8.3px;color:#141414;-webkit-text-stroke:0.22px #141414;transform:scaleX(0.9150);transform-origin:0 50%;">(1,161)</span>
<span class="t g" style="left:404.34px;top:449px;font-size:8.3px;color:#141414;-webkit-text-stroke:0.22px #141414;transform:scaleX(0.9150);transform-origin:0 50%;">(1,213)</span>
<span class="t g" style="left:443.02px;top:449px;font-size:8.3px;color:#141414;-webkit-text-stroke:0.22px #141414;transform:scaleX(0.9150);transform-origin:0 50%;">(1,280)</span>
<span class="t g" style="left:481.70px;top:449px;font-size:8.3px;color:#141414;-webkit-text-stroke:0.22px #141414;transform:scaleX(0.9150);transform-origin:0 50%;">(1,343)</span>
<span class="t g" style="left:520.94px;top:449px;font-size:8.3px;color:#141414;-webkit-text-stroke:0.22px #141414;transform:scaleX(0.9150);transform-origin:0 50%;">(1,411)</span>
<span class="t g" style="left:559.06px;top:449px;font-size:8.3px;color:#141414;-webkit-text-stroke:0.22px #141414;transform:scaleX(0.9150);transform-origin:0 50%;">(1,439)</span>
<span class="t g" style="left:597.74px;top:449px;font-size:8.3px;color:#141414;-webkit-text-stroke:0.22px #141414;transform:scaleX(0.9150);transform-origin:0 50%;">(1,470)</span>
<span class="t g" style="left:636.42px;top:449px;font-size:8.3px;color:#141414;-webkit-text-stroke:0.22px #141414;transform:scaleX(0.9150);transform-origin:0 50%;">(1,501)</span>
<span class="t g" style="left:675.10px;top:449px;font-size:8.3px;color:#141414;-webkit-text-stroke:0.22px #141414;transform:scaleX(0.9150);transform-origin:0 50%;">(1,537)</span>
<span class="t g" style="left:713.78px;top:449px;font-size:8.3px;color:#141414;-webkit-text-stroke:0.22px #141414;transform:scaleX(0.9150);transform-origin:0 50%;">(1,569)</span>
<span class="t g" style="left:752.46px;top:449px;font-size:8.3px;color:#141414;-webkit-text-stroke:0.22px #141414;transform:scaleX(0.9150);transform-origin:0 50%;">(2,572)</span>
<span class="t g" style="left:49.30px;top:459px;font-size:8.3px;color:#000;font-weight:bold;transform:scaleX(0.7376);transform-origin:0 50%;">FCF</span>
<span class="t g" style="left:160.65px;top:459px;font-size:8.3px;color:#000;font-weight:bold;transform:scaleX(0.8981);transform-origin:0 50%;">$000's</span>
<span class="t g" style="left:364.35px;top:459px;font-size:8.3px;color:#000;font-weight:bold;transform:scaleX(0.9050);transform-origin:0 50%;">12,422</span>
<span class="t g" style="left:403.03px;top:459px;font-size:8.3px;color:#000;font-weight:bold;transform:scaleX(0.9050);transform-origin:0 50%;">13,088</span>
<span class="t g" style="left:441.71px;top:459px;font-size:8.3px;color:#000;font-weight:bold;transform:scaleX(0.9050);transform-origin:0 50%;">13,796</span>
<span class="t g" style="left:480.39px;top:459px;font-size:8.3px;color:#000;font-weight:bold;transform:scaleX(0.9050);transform-origin:0 50%;">14,494</span>
<span class="t g" style="left:519.07px;top:459px;font-size:8.3px;color:#000;font-weight:bold;transform:scaleX(0.9050);transform-origin:0 50%;">15,265</span>
<span class="t g" style="left:557.75px;top:459px;font-size:8.3px;color:#000;font-weight:bold;transform:scaleX(0.9050);transform-origin:0 50%;">15,646</span>
<span class="t g" style="left:596.43px;top:459px;font-size:8.3px;color:#000;font-weight:bold;transform:scaleX(0.9050);transform-origin:0 50%;">16,039</span>
<span class="t g" style="left:635.11px;top:459px;font-size:8.3px;color:#000;font-weight:bold;transform:scaleX(0.9050);transform-origin:0 50%;">16,470</span>
<span class="t g" style="left:673.79px;top:459px;font-size:8.3px;color:#000;font-weight:bold;transform:scaleX(0.9050);transform-origin:0 50%;">16,861</span>
<span class="t g" style="left:712.47px;top:459px;font-size:8.3px;color:#000;font-weight:bold;transform:scaleX(0.9050);transform-origin:0 50%;">17,230</span>
<span class="t g" style="left:751.15px;top:459px;font-size:8.3px;color:#000;font-weight:bold;transform:scaleX(0.9050);transform-origin:0 50%;">16,227</span>
<div style="left:237.00px;top:300.95px;width:0;height:0;border-top:3.2px solid #107c41;border-right:3.2px solid transparent"></div>
<div style="left:47.00px;top:498.12px;width:147.90px;height:30.39px;border:1px solid #8f8f8f;box-sizing:border-box"></div>
<div style="left:47.00px;top:507.95px;width:147.90px;height:1.00px;background:#8f8f8f"></div>
<div style="left:47.00px;top:517.78px;width:147.90px;height:1.00px;background:#8f8f8f"></div>
<span class="t g" style="left:49.90px;top:498px;font-size:8.6px;color:#000;font-weight:bold;transform:scaleX(1.0238);transform-origin:0 50%;">WACC</span>
<span class="t g" style="left:49.90px;top:508px;font-size:8.6px;color:#000;font-weight:bold;transform:scaleX(1.0144);transform-origin:0 50%;">Breaks</span>
<span class="t g" style="left:49.90px;top:518px;font-size:8.6px;color:#000;font-weight:bold;transform:scaleX(1.0519);transform-origin:0 50%;">Mid Year Convention</span>
<span class="t g" style="left:160.40px;top:498px;font-size:8.3px;color:#12b05a;-webkit-text-stroke:0.22px #12b05a;transform:scaleX(0.7991);transform-origin:0 50%;">11.23%</span>
<span class="t g" style="left:160.50px;top:508px;font-size:8.3px;color:#2222ff;-webkit-text-stroke:0.22px #2222ff;transform:scaleX(0.9094);transform-origin:0 50%;">0.33%</span>
<span class="t g" style="left:162.70px;top:518px;font-size:8.3px;color:#2222ff;-webkit-text-stroke:0.22px #2222ff;transform:scaleX(0.9039);transform-origin:0 50%;">0.50</span>
<span class="t g" style="left:84.05px;top:538px;font-size:8.6px;color:#000;font-weight:bold;transform:scaleX(1.0500);transform-origin:0 50%;">Period</span>
<span class="t g" style="left:361.78px;top:538px;font-size:8.6px;color:#000;font-weight:bold;transform:scaleX(1.0635);transform-origin:0 50%;">0.50</span>
<span class="t g" style="left:400.46px;top:538px;font-size:8.6px;color:#000;font-weight:bold;transform:scaleX(1.0635);transform-origin:0 50%;">1.50</span>
<span class="t g" style="left:439.14px;top:538px;font-size:8.6px;color:#000;font-weight:bold;transform:scaleX(1.0635);transform-origin:0 50%;">2.50</span>
<span class="t g" style="left:477.82px;top:538px;font-size:8.6px;color:#000;font-weight:bold;transform:scaleX(1.0635);transform-origin:0 50%;">3.50</span>
<span class="t g" style="left:516.50px;top:538px;font-size:8.6px;color:#000;font-weight:bold;transform:scaleX(1.0635);transform-origin:0 50%;">4.50</span>
<span class="t g" style="left:555.18px;top:538px;font-size:8.6px;color:#000;font-weight:bold;transform:scaleX(1.0635);transform-origin:0 50%;">5.50</span>
<span class="t g" style="left:593.86px;top:538px;font-size:8.6px;color:#000;font-weight:bold;transform:scaleX(1.0635);transform-origin:0 50%;">6.50</span>
<span class="t g" style="left:632.54px;top:538px;font-size:8.6px;color:#000;font-weight:bold;transform:scaleX(1.0635);transform-origin:0 50%;">7.50</span>
<span class="t g" style="left:671.22px;top:538px;font-size:8.6px;color:#000;font-weight:bold;transform:scaleX(1.0635);transform-origin:0 50%;">8.50</span>
<span class="t g" style="left:709.90px;top:538px;font-size:8.6px;color:#000;font-weight:bold;transform:scaleX(1.0635);transform-origin:0 50%;">9.50</span>
<span class="t g" style="left:748.58px;top:538px;font-size:8.6px;color:#000;font-weight:bold;transform:scaleX(1.0635);transform-origin:0 50%;">9.50</span>
<span class="t g" style="left:84.30px;top:557px;font-size:8.6px;color:#000;font-weight:bold;transform:scaleX(1.0390);transform-origin:0 50%;text-decoration:underline;text-decoration-thickness:0.6px;text-underline-offset:0.4px;">WACC</span>
<span class="t g" style="left:86.65px;top:567px;font-size:8.3px;color:#111;-webkit-text-stroke:0.22px #111;transform:scaleX(0.8277);transform-origin:0 50%;">10.57%</span>
<span class="t g" style="left:367.51px;top:567px;font-size:8.3px;color:#111;-webkit-text-stroke:0.22px #111;transform:scaleX(0.8000);transform-origin:0 50%;">11,813</span>
<span class="t g" style="left:406.19px;top:567px;font-size:8.3px;color:#111;-webkit-text-stroke:0.22px #111;transform:scaleX(0.8000);transform-origin:0 50%;">11,256</span>
<span class="t g" style="left:444.37px;top:567px;font-size:8.3px;color:#111;-webkit-text-stroke:0.22px #111;transform:scaleX(0.8000);transform-origin:0 50%;">10,730</span>
<span class="t g" style="left:483.05px;top:567px;font-size:8.3px;color:#111;-webkit-text-stroke:0.22px #111;transform:scaleX(0.8000);transform-origin:0 50%;">10,195</span>
<span class="t g" style="left:525.43px;top:567px;font-size:8.3px;color:#111;-webkit-text-stroke:0.22px #111;transform:scaleX(0.8000);transform-origin:0 50%;">9,710</span>
<span class="t g" style="left:564.11px;top:567px;font-size:8.3px;color:#111;-webkit-text-stroke:0.22px #111;transform:scaleX(0.8000);transform-origin:0 50%;">9,001</span>
<span class="t g" style="left:602.79px;top:567px;font-size:8.3px;color:#111;-webkit-text-stroke:0.22px #111;transform:scaleX(0.8000);transform-origin:0 50%;">8,345</span>
<span class="t g" style="left:641.47px;top:567px;font-size:8.3px;color:#111;-webkit-text-stroke:0.22px #111;transform:scaleX(0.8000);transform-origin:0 50%;">7,749</span>
<span class="t g" style="left:680.15px;top:567px;font-size:8.3px;color:#111;-webkit-text-stroke:0.22px #111;transform:scaleX(0.8000);transform-origin:0 50%;">7,175</span>
<span class="t g" style="left:718.83px;top:567px;font-size:8.3px;color:#111;-webkit-text-stroke:0.22px #111;transform:scaleX(0.8000);transform-origin:0 50%;">6,631</span>
<span class="t g" style="left:757.51px;top:567px;font-size:8.3px;color:#111;-webkit-text-stroke:0.22px #111;transform:scaleX(0.8000);transform-origin:0 50%;">6,245</span>
<span class="t g" style="left:86.65px;top:577px;font-size:8.3px;color:#111;-webkit-text-stroke:0.22px #111;transform:scaleX(0.8277);transform-origin:0 50%;">10.90%</span>
<span class="t g" style="left:367.51px;top:577px;font-size:8.3px;color:#111;-webkit-text-stroke:0.22px #111;transform:scaleX(0.8000);transform-origin:0 50%;">11,796</span>
<span class="t g" style="left:406.19px;top:577px;font-size:8.3px;color:#111;-webkit-text-stroke:0.22px #111;transform:scaleX(0.8000);transform-origin:0 50%;">11,206</span>
<span class="t g" style="left:444.37px;top:577px;font-size:8.3px;color:#111;-webkit-text-stroke:0.22px #111;transform:scaleX(0.8000);transform-origin:0 50%;">10,651</span>
<span class="t g" style="left:483.05px;top:577px;font-size:8.3px;color:#111;-webkit-text-stroke:0.22px #111;transform:scaleX(0.8000);transform-origin:0 50%;">10,089</span>
<span class="t g" style="left:525.43px;top:577px;font-size:8.3px;color:#111;-webkit-text-stroke:0.22px #111;transform:scaleX(0.8000);transform-origin:0 50%;">9,581</span>
<span class="t g" style="left:564.11px;top:577px;font-size:8.3px;color:#111;-webkit-text-stroke:0.22px #111;transform:scaleX(0.8000);transform-origin:0 50%;">8,855</span>
<span class="t g" style="left:602.79px;top:577px;font-size:8.3px;color:#111;-webkit-text-stroke:0.22px #111;transform:scaleX(0.8000);transform-origin:0 50%;">8,185</span>
<span class="t g" style="left:641.47px;top:577px;font-size:8.3px;color:#111;-webkit-text-stroke:0.22px #111;transform:scaleX(0.8000);transform-origin:0 50%;">7,578</span>
<span class="t g" style="left:680.15px;top:577px;font-size:8.3px;color:#111;-webkit-text-stroke:0.22px #111;transform:scaleX(0.8000);transform-origin:0 50%;">6,996</span>
<span class="t g" style="left:718.83px;top:577px;font-size:8.3px;color:#111;-webkit-text-stroke:0.22px #111;transform:scaleX(0.8000);transform-origin:0 50%;">6,445</span>
<span class="t g" style="left:757.51px;top:577px;font-size:8.3px;color:#111;-webkit-text-stroke:0.22px #111;transform:scaleX(0.8000);transform-origin:0 50%;">6,070</span>
<span class="t g" style="left:86.65px;top:587px;font-size:8.3px;color:#111;-webkit-text-stroke:0.22px #111;transform:scaleX(0.8463);transform-origin:0 50%;">11.23%</span>
<span class="t g" style="left:367.51px;top:587px;font-size:8.3px;color:#111;-webkit-text-stroke:0.22px #111;transform:scaleX(0.8000);transform-origin:0 50%;">11,778</span>
<span class="t g" style="left:406.19px;top:587px;font-size:8.3px;color:#111;-webkit-text-stroke:0.22px #111;transform:scaleX(0.8000);transform-origin:0 50%;">11,156</span>
<span class="t g" style="left:444.37px;top:587px;font-size:8.3px;color:#111;-webkit-text-stroke:0.22px #111;transform:scaleX(0.8000);transform-origin:0 50%;">10,572</span>
<span class="t g" style="left:486.75px;top:587px;font-size:8.3px;color:#111;-webkit-text-stroke:0.22px #111;transform:scaleX(0.8000);transform-origin:0 50%;">9,985</span>
<span class="t g" style="left:525.43px;top:587px;font-size:8.3px;color:#111;-webkit-text-stroke:0.22px #111;transform:scaleX(0.8000);transform-origin:0 50%;">9,454</span>
<span class="t g" style="left:564.60px;top:587px;font-size:8.3px;color:#111;-webkit-text-stroke:0.22px #111;transform:scaleX(0.8000);transform-origin:0 50%;">8,711</span>
<span class="t g" style="left:602.79px;top:587px;font-size:8.3px;color:#111;-webkit-text-stroke:0.22px #111;transform:scaleX(0.8000);transform-origin:0 50%;">8,028</span>
<span class="t g" style="left:641.96px;top:587px;font-size:8.3px;color:#111;-webkit-text-stroke:0.22px #111;transform:scaleX(0.8000);transform-origin:0 50%;">7,411</span>
<span class="t g" style="left:680.15px;top:587px;font-size:8.3px;color:#111;-webkit-text-stroke:0.22px #111;transform:scaleX(0.8000);transform-origin:0 50%;">6,821</span>
<span class="t g" style="left:718.83px;top:587px;font-size:8.3px;color:#111;-webkit-text-stroke:0.22px #111;transform:scaleX(0.8000);transform-origin:0 50%;">6,266</span>
<span class="t g" style="left:757.51px;top:587px;font-size:8.3px;color:#111;-webkit-text-stroke:0.22px #111;transform:scaleX(0.8000);transform-origin:0 50%;">5,901</span>
<span class="t g" style="left:86.65px;top:597px;font-size:8.3px;color:#111;-webkit-text-stroke:0.22px #111;transform:scaleX(0.8463);transform-origin:0 50%;">11.56%</span>
<span class="t g" style="left:367.51px;top:597px;font-size:8.3px;color:#111;-webkit-text-stroke:0.22px #111;transform:scaleX(0.8000);transform-origin:0 50%;">11,761</span>
<span class="t g" style="left:406.19px;top:597px;font-size:8.3px;color:#111;-webkit-text-stroke:0.22px #111;transform:scaleX(0.8000);transform-origin:0 50%;">11,107</span>
<span class="t g" style="left:444.37px;top:597px;font-size:8.3px;color:#111;-webkit-text-stroke:0.22px #111;transform:scaleX(0.8000);transform-origin:0 50%;">10,494</span>
<span class="t g" style="left:486.75px;top:597px;font-size:8.3px;color:#111;-webkit-text-stroke:0.22px #111;transform:scaleX(0.8000);transform-origin:0 50%;">9,882</span>
<span class="t g" style="left:525.43px;top:597px;font-size:8.3px;color:#111;-webkit-text-stroke:0.22px #111;transform:scaleX(0.8000);transform-origin:0 50%;">9,329</span>
<span class="t g" style="left:564.11px;top:597px;font-size:8.3px;color:#111;-webkit-text-stroke:0.22px #111;transform:scaleX(0.8000);transform-origin:0 50%;">8,570</span>
<span class="t g" style="left:602.79px;top:597px;font-size:8.3px;color:#111;-webkit-text-stroke:0.22px #111;transform:scaleX(0.8000);transform-origin:0 50%;">7,875</span>
<span class="t g" style="left:641.47px;top:597px;font-size:8.3px;color:#111;-webkit-text-stroke:0.22px #111;transform:scaleX(0.8000);transform-origin:0 50%;">7,248</span>
<span class="t g" style="left:680.15px;top:597px;font-size:8.3px;color:#111;-webkit-text-stroke:0.22px #111;transform:scaleX(0.8000);transform-origin:0 50%;">6,652</span>
<span class="t g" style="left:718.83px;top:597px;font-size:8.3px;color:#111;-webkit-text-stroke:0.22px #111;transform:scaleX(0.8000);transform-origin:0 50%;">6,092</span>
<span class="t g" style="left:757.51px;top:597px;font-size:8.3px;color:#111;-webkit-text-stroke:0.22px #111;transform:scaleX(0.8000);transform-origin:0 50%;">5,738</span>
<span class="t g" style="left:86.65px;top:606px;font-size:8.3px;color:#111;-webkit-text-stroke:0.22px #111;transform:scaleX(0.8463);transform-origin:0 50%;">11.89%</span>
<span class="t g" style="left:367.51px;top:606px;font-size:8.3px;color:#111;-webkit-text-stroke:0.22px #111;transform:scaleX(0.8000);transform-origin:0 50%;">11,743</span>
<span class="t g" style="left:406.19px;top:606px;font-size:8.3px;color:#111;-webkit-text-stroke:0.22px #111;transform:scaleX(0.8000);transform-origin:0 50%;">11,058</span>
<span class="t g" style="left:444.37px;top:606px;font-size:8.3px;color:#111;-webkit-text-stroke:0.22px #111;transform:scaleX(0.8000);transform-origin:0 50%;">10,417</span>
<span class="t g" style="left:486.75px;top:606px;font-size:8.3px;color:#111;-webkit-text-stroke:0.22px #111;transform:scaleX(0.8000);transform-origin:0 50%;">9,780</span>
<span class="t g" style="left:525.43px;top:606px;font-size:8.3px;color:#111;-webkit-text-stroke:0.22px #111;transform:scaleX(0.8000);transform-origin:0 50%;">9,205</span>
<span class="t g" style="left:564.11px;top:606px;font-size:8.3px;color:#111;-webkit-text-stroke:0.22px #111;transform:scaleX(0.8000);transform-origin:0 50%;">8,432</span>
<span class="t g" style="left:602.79px;top:606px;font-size:8.3px;color:#111;-webkit-text-stroke:0.22px #111;transform:scaleX(0.8000);transform-origin:0 50%;">7,725</span>
<span class="t g" style="left:641.47px;top:606px;font-size:8.3px;color:#111;-webkit-text-stroke:0.22px #111;transform:scaleX(0.8000);transform-origin:0 50%;">7,090</span>
<span class="t g" style="left:680.15px;top:606px;font-size:8.3px;color:#111;-webkit-text-stroke:0.22px #111;transform:scaleX(0.8000);transform-origin:0 50%;">6,487</span>
<span class="t g" style="left:718.83px;top:606px;font-size:8.3px;color:#111;-webkit-text-stroke:0.22px #111;transform:scaleX(0.8000);transform-origin:0 50%;">5,924</span>
<span class="t g" style="left:757.51px;top:606px;font-size:8.3px;color:#111;-webkit-text-stroke:0.22px #111;transform:scaleX(0.8000);transform-origin:0 50%;">5,579</span>
<div style="left:46.10px;top:704.15px;width:102.90px;height:11.33px;border:1.5px solid #107c41;box-sizing:border-box"></div>
<div style="left:146.20px;top:713.08px;width:4.00px;height:4.00px;background:#107c41;border:0.7px solid #fff;box-sizing:content-box"></div>
<div style="left:811.00px;top:498.12px;width:90.40px;height:20.66px;border:1px solid #8f8f8f;box-sizing:border-box"></div>
<div style="left:811.00px;top:507.95px;width:90.40px;height:1.00px;background:#8f8f8f"></div>
<span class="t g" style="left:813.10px;top:498px;font-size:8.6px;color:#000;font-weight:bold;transform:scaleX(1.0720);transform-origin:0 50%;">Exit Multip</span>
<span class="t g" style="left:813.10px;top:508px;font-size:8.6px;color:#000;font-weight:bold;transform:scaleX(1.0074);transform-origin:0 50%;">Breaks</span>
<span class="t g" style="left:874.00px;top:498px;font-size:8.3px;color:#2222ff;-webkit-text-stroke:0.22px #2222ff;transform:scaleX(0.9435);transform-origin:0 50%;">6.0x</span>
<span class="t g" style="left:874.60px;top:508px;font-size:8.3px;color:#2222ff;-webkit-text-stroke:0.22px #2222ff;transform:scaleX(0.8670);transform-origin:0 50%;">1.0x</span>
<div style="left:810.40px;top:537.84px;width:40.90px;height:10.13px;background:#2680cb"></div>
<span class="t g" style="left:819.53px;top:537px;font-size:8.3px;color:#fff;font-weight:bold;transform:scaleX(0.9050);transform-origin:0 50%;">WACC</span>
<div style="left:860.40px;top:537.84px;width:40.90px;height:10.13px;background:#2680cb"></div>
<span class="t g" style="left:867.23px;top:537px;font-size:8.3px;color:#fff;font-weight:bold;transform:scaleX(0.9050);transform-origin:0 50%;">DCF PV</span>
<div style="left:810.40px;top:626.31px;width:40.90px;height:10.13px;background:#2680cb"></div>
<span class="t g" style="left:819.53px;top:626px;font-size:8.3px;color:#fff;font-weight:bold;transform:scaleX(0.9050);transform-origin:0 50%;">WACC</span>
<div style="left:860.40px;top:626.31px;width:40.90px;height:10.13px;background:#2680cb"></div>
<span class="t g" style="left:818.45px;top:567px;font-size:8.3px;color:#000;font-weight:bold;transform:scaleX(0.8846);transform-origin:0 50%;">10.57%</span>
<span class="t g" style="left:818.45px;top:577px;font-size:8.3px;color:#000;font-weight:bold;transform:scaleX(0.8846);transform-origin:0 50%;">10.90%</span>
<span class="t g" style="left:818.45px;top:587px;font-size:8.3px;color:#000;font-weight:bold;transform:scaleX(0.8992);transform-origin:0 50%;">11.23%</span>
<span class="t g" style="left:818.45px;top:596px;font-size:8.3px;color:#000;font-weight:bold;transform:scaleX(0.8992);transform-origin:0 50%;">11.56%</span>
<span class="t g" style="left:818.45px;top:606px;font-size:8.3px;color:#000;font-weight:bold;transform:scaleX(0.8992);transform-origin:0 50%;">11.89%</span>
<span class="t g" style="left:818.45px;top:655px;font-size:8.3px;color:#000;font-weight:bold;transform:scaleX(0.8846);transform-origin:0 50%;">10.57%</span>
<span class="t g" style="left:818.45px;top:665px;font-size:8.3px;color:#000;font-weight:bold;transform:scaleX(0.8846);transform-origin:0 50%;">10.90%</span>
<span class="t g" style="left:818.45px;top:675px;font-size:8.3px;color:#000;font-weight:bold;transform:scaleX(0.8992);transform-origin:0 50%;">11.23%</span>
<span class="t g" style="left:818.45px;top:685px;font-size:8.3px;color:#000;font-weight:bold;transform:scaleX(0.8992);transform-origin:0 50%;">11.56%</span>
<span class="t g" style="left:818.45px;top:695px;font-size:8.3px;color:#000;font-weight:bold;transform:scaleX(0.8992);transform-origin:0 50%;">11.89%</span>
<span class="t g" style="left:868.19px;top:567px;font-size:8.3px;color:#141414;-webkit-text-stroke:0.22px #141414;transform:scaleX(0.9150);transform-origin:0 50%;">92,606</span>
<span class="t g" style="left:868.19px;top:577px;font-size:8.3px;color:#141414;-webkit-text-stroke:0.22px #141414;transform:scaleX(0.9150);transform-origin:0 50%;">91,382</span>
<span class="t g" style="left:868.19px;top:587px;font-size:8.3px;color:#141414;-webkit-text-stroke:0.22px #141414;transform:scaleX(0.9150);transform-origin:0 50%;">90,183</span>
<span class="t g" style="left:868.19px;top:596px;font-size:8.3px;color:#141414;-webkit-text-stroke:0.22px #141414;transform:scaleX(0.9150);transform-origin:0 50%;">89,010</span>
<span class="t g" style="left:868.19px;top:606px;font-size:8.3px;color:#141414;-webkit-text-stroke:0.22px #141414;transform:scaleX(0.9150);transform-origin:0 50%;">87,861</span>
<div style="left:910.40px;top:537.84px;width:120.90px;height:10.13px;background:#2680cb"></div>
<span class="t g" style="left:934.13px;top:537px;font-size:8.3px;color:#fff;font-weight:bold;transform:scaleX(0.9050);transform-origin:0 50%;">PV of Terminal Value</span>
<div style="left:910.40px;top:547.97px;width:120.90px;height:9.63px;background:#f2f2f2"></div>
<span class="t g" style="left:949.30px;top:547px;font-size:8.3px;color:#000;font-weight:bold;transform:scaleX(0.9002);transform-origin:0 50%;text-decoration:underline;text-decoration-thickness:0.6px;text-underline-offset:0.4px;">Exit Multiple</span>
<span class="t g" style="left:923.29px;top:557px;font-size:8.3px;color:#000;font-weight:bold;transform:scaleX(0.9050);transform-origin:0 50%;">5.0x</span>
<span class="t g" style="left:963.29px;top:557px;font-size:8.3px;color:#000;font-weight:bold;transform:scaleX(0.9050);transform-origin:0 50%;">6.0x</span>
<span class="t g" style="left:1003.29px;top:557px;font-size:8.3px;color:#000;font-weight:bold;transform:scaleX(0.9050);transform-origin:0 50%;">7.0x</span>
<div style="left:910.40px;top:566.73px;width:120.90px;height:1.10px;background:#4d4d4d"></div>
<span class="t g" style="left:918.89px;top:567px;font-size:8.3px;color:#141414;-webkit-text-stroke:0.22px #141414;transform:scaleX(0.9150);transform-origin:0 50%;">49,730</span>
<span class="t g" style="left:958.89px;top:567px;font-size:8.3px;color:#141414;-webkit-text-stroke:0.22px #141414;transform:scaleX(0.9150);transform-origin:0 50%;">59,675</span>
<span class="t g" style="left:998.89px;top:567px;font-size:8.3px;color:#141414;-webkit-text-stroke:0.22px #141414;transform:scaleX(0.9150);transform-origin:0 50%;">69,621</span>
<span class="t g" style="left:918.89px;top:577px;font-size:8.3px;color:#141414;-webkit-text-stroke:0.22px #141414;transform:scaleX(0.9150);transform-origin:0 50%;">48,341</span>
<span class="t g" style="left:958.89px;top:577px;font-size:8.3px;color:#141414;-webkit-text-stroke:0.22px #141414;transform:scaleX(0.9150);transform-origin:0 50%;">58,010</span>
<span class="t g" style="left:998.89px;top:577px;font-size:8.3px;color:#141414;-webkit-text-stroke:0.22px #141414;transform:scaleX(0.9150);transform-origin:0 50%;">67,678</span>
<span class="t g" style="left:918.89px;top:587px;font-size:8.3px;color:#141414;-webkit-text-stroke:0.22px #141414;transform:scaleX(0.9150);transform-origin:0 50%;">46,996</span>
<span class="t g" style="left:958.89px;top:587px;font-size:8.3px;color:#141414;-webkit-text-stroke:0.22px #141414;transform:scaleX(0.9150);transform-origin:0 50%;">56,395</span>
<span class="t g" style="left:998.89px;top:587px;font-size:8.3px;color:#141414;-webkit-text-stroke:0.22px #141414;transform:scaleX(0.9150);transform-origin:0 50%;">65,794</span>
<span class="t g" style="left:918.89px;top:596px;font-size:8.3px;color:#141414;-webkit-text-stroke:0.22px #141414;transform:scaleX(0.9150);transform-origin:0 50%;">45,692</span>
<span class="t g" style="left:958.89px;top:596px;font-size:8.3px;color:#141414;-webkit-text-stroke:0.22px #141414;transform:scaleX(0.9150);transform-origin:0 50%;">54,830</span>
<span class="t g" style="left:998.89px;top:596px;font-size:8.3px;color:#141414;-webkit-text-stroke:0.22px #141414;transform:scaleX(0.9150);transform-origin:0 50%;">63,969</span>
<span class="t g" style="left:918.89px;top:606px;font-size:8.3px;color:#141414;-webkit-text-stroke:0.22px #141414;transform:scaleX(0.9150);transform-origin:0 50%;">44,428</span>
<span class="t g" style="left:958.89px;top:606px;font-size:8.3px;color:#141414;-webkit-text-stroke:0.22px #141414;transform:scaleX(0.9150);transform-origin:0 50%;">53,313</span>
<span class="t g" style="left:998.89px;top:606px;font-size:8.3px;color:#141414;-webkit-text-stroke:0.22px #141414;transform:scaleX(0.9150);transform-origin:0 50%;">62,199</span>
<div style="left:1040.40px;top:537.84px;width:120.90px;height:10.13px;background:#2680cb"></div>
<span class="t g" style="left:1071.57px;top:537px;font-size:8.3px;color:#fff;font-weight:bold;transform:scaleX(0.9050);transform-origin:0 50%;">Enterprise Value</span>
<div style="left:1040.40px;top:547.97px;width:120.90px;height:9.63px;background:#f2f2f2"></div>
<span class="t g" style="left:1079.30px;top:547px;font-size:8.3px;color:#000;font-weight:bold;transform:scaleX(0.9002);transform-origin:0 50%;text-decoration:underline;text-decoration-thickness:0.6px;text-underline-offset:0.4px;">Exit Multiple</span>
<span class="t g" style="left:1053.29px;top:557px;font-size:8.3px;color:#000;font-weight:bold;transform:scaleX(0.9050);transform-origin:0 50%;">5.0x</span>
<span class="t g" style="left:1093.29px;top:557px;font-size:8.3px;color:#000;font-weight:bold;transform:scaleX(0.9050);transform-origin:0 50%;">6.0x</span>
<span class="t g" style="left:1133.29px;top:557px;font-size:8.3px;color:#000;font-weight:bold;transform:scaleX(0.9050);transform-origin:0 50%;">7.0x</span>
<div style="left:1040.40px;top:566.73px;width:120.90px;height:1.10px;background:#4d4d4d"></div>
<span class="t g" style="left:1046.78px;top:567px;font-size:8.3px;color:#141414;-webkit-text-stroke:0.22px #141414;transform:scaleX(0.9150);transform-origin:0 50%;">142,336</span>
<span class="t g" style="left:1086.78px;top:567px;font-size:8.3px;color:#141414;-webkit-text-stroke:0.22px #141414;transform:scaleX(0.9150);transform-origin:0 50%;">152,282</span>
<span class="t g" style="left:1126.78px;top:567px;font-size:8.3px;color:#141414;-webkit-text-stroke:0.22px #141414;transform:scaleX(0.9150);transform-origin:0 50%;">162,228</span>
<span class="t g" style="left:1046.78px;top:577px;font-size:8.3px;color:#141414;-webkit-text-stroke:0.22px #141414;transform:scaleX(0.9150);transform-origin:0 50%;">139,723</span>
<span class="t g" style="left:1086.78px;top:577px;font-size:8.3px;color:#141414;-webkit-text-stroke:0.22px #141414;transform:scaleX(0.9150);transform-origin:0 50%;">149,391</span>
<span class="t g" style="left:1126.78px;top:577px;font-size:8.3px;color:#141414;-webkit-text-stroke:0.22px #141414;transform:scaleX(0.9150);transform-origin:0 50%;">159,060</span>
<span class="t g" style="left:1046.78px;top:587px;font-size:8.3px;color:#141414;-webkit-text-stroke:0.22px #141414;transform:scaleX(0.9150);transform-origin:0 50%;">137,179</span>
<span class="t g" style="left:1086.78px;top:587px;font-size:8.3px;color:#141414;-webkit-text-stroke:0.22px #141414;transform:scaleX(0.9150);transform-origin:0 50%;">146,578</span>
<span class="t g" style="left:1126.78px;top:587px;font-size:8.3px;color:#141414;-webkit-text-stroke:0.22px #141414;transform:scaleX(0.9150);transform-origin:0 50%;">155,977</span>
<span class="t g" style="left:1046.78px;top:596px;font-size:8.3px;color:#141414;-webkit-text-stroke:0.22px #141414;transform:scaleX(0.9150);transform-origin:0 50%;">134,702</span>
<span class="t g" style="left:1086.78px;top:596px;font-size:8.3px;color:#141414;-webkit-text-stroke:0.22px #141414;transform:scaleX(0.9150);transform-origin:0 50%;">143,840</span>
<span class="t g" style="left:1126.78px;top:596px;font-size:8.3px;color:#141414;-webkit-text-stroke:0.22px #141414;transform:scaleX(0.9150);transform-origin:0 50%;">152,978</span>
<span class="t g" style="left:1046.78px;top:606px;font-size:8.3px;color:#141414;-webkit-text-stroke:0.22px #141414;transform:scaleX(0.9150);transform-origin:0 50%;">132,289</span>
<span class="t g" style="left:1086.78px;top:606px;font-size:8.3px;color:#141414;-webkit-text-stroke:0.22px #141414;transform:scaleX(0.9150);transform-origin:0 50%;">141,174</span>
<span class="t g" style="left:1126.78px;top:606px;font-size:8.3px;color:#141414;-webkit-text-stroke:0.22px #141414;transform:scaleX(0.9150);transform-origin:0 50%;">150,060</span>
<div style="left:1170.40px;top:537.84px;width:120.90px;height:10.13px;background:#2680cb"></div>
<span class="t g" style="left:1215.56px;top:537px;font-size:8.3px;color:#fff;font-weight:bold;transform:scaleX(0.9050);transform-origin:0 50%;">Net Debt</span>
<div style="left:1300.40px;top:537.84px;width:120.90px;height:10.13px;background:#2680cb"></div>
<span class="t g" style="left:1338.67px;top:537px;font-size:8.3px;color:#fff;font-weight:bold;transform:scaleX(0.9050);transform-origin:0 50%;">Equity Value</span>
<div style="left:1300.40px;top:547.97px;width:120.90px;height:9.63px;background:#f2f2f2"></div>
<span class="t g" style="left:1339.30px;top:547px;font-size:8.3px;color:#000;font-weight:bold;transform:scaleX(0.9002);transform-origin:0 50%;text-decoration:underline;text-decoration-thickness:0.6px;text-underline-offset:0.4px;">Exit Multiple</span>
<span class="t g" style="left:1313.29px;top:557px;font-size:8.3px;color:#000;font-weight:bold;transform:scaleX(0.9050);transform-origin:0 50%;">5.0x</span>
<span class="t g" style="left:1353.29px;top:557px;font-size:8.3px;color:#000;font-weight:bold;transform:scaleX(0.9050);transform-origin:0 50%;">6.0x</span>
<span class="t g" style="left:1393.29px;top:557px;font-size:8.3px;color:#000;font-weight:bold;transform:scaleX(0.9050);transform-origin:0 50%;">7.0x</span>
<div style="left:1300.40px;top:566.73px;width:120.90px;height:1.10px;background:#4d4d4d"></div>
<span class="t g" style="left:1306.78px;top:567px;font-size:8.3px;color:#141414;-webkit-text-stroke:0.22px #141414;transform:scaleX(0.9150);transform-origin:0 50%;">134,173</span>
<span class="t g" style="left:1347.06px;top:567px;font-size:8.3px;color:#141414;-webkit-text-stroke:0.22px #141414;transform:scaleX(0.9150);transform-origin:0 50%;">144,118</span>
<span class="t g" style="left:1386.78px;top:567px;font-size:8.3px;color:#141414;-webkit-text-stroke:0.22px #141414;transform:scaleX(0.9150);transform-origin:0 50%;">154,064</span>
<span class="t g" style="left:1306.78px;top:577px;font-size:8.3px;color:#141414;-webkit-text-stroke:0.22px #141414;transform:scaleX(0.9150);transform-origin:0 50%;">131,560</span>
<span class="t g" style="left:1346.78px;top:577px;font-size:8.3px;color:#141414;-webkit-text-stroke:0.22px #141414;transform:scaleX(0.9150);transform-origin:0 50%;">141,228</span>
<span class="t g" style="left:1386.78px;top:577px;font-size:8.3px;color:#141414;-webkit-text-stroke:0.22px #141414;transform:scaleX(0.9150);transform-origin:0 50%;">150,896</span>
<span class="t g" style="left:1306.78px;top:587px;font-size:8.3px;color:#141414;-webkit-text-stroke:0.22px #141414;transform:scaleX(0.9150);transform-origin:0 50%;">129,016</span>
<span class="t g" style="left:1346.78px;top:587px;font-size:8.3px;color:#141414;-webkit-text-stroke:0.22px #141414;transform:scaleX(0.9150);transform-origin:0 50%;">138,415</span>
<span class="t g" style="left:1386.78px;top:587px;font-size:8.3px;color:#141414;-webkit-text-stroke:0.22px #141414;transform:scaleX(0.9150);transform-origin:0 50%;">147,814</span>
<span class="t g" style="left:1306.78px;top:596px;font-size:8.3px;color:#141414;-webkit-text-stroke:0.22px #141414;transform:scaleX(0.9150);transform-origin:0 50%;">126,538</span>
<span class="t g" style="left:1346.78px;top:596px;font-size:8.3px;color:#141414;-webkit-text-stroke:0.22px #141414;transform:scaleX(0.9150);transform-origin:0 50%;">135,677</span>
<span class="t g" style="left:1386.78px;top:596px;font-size:8.3px;color:#141414;-webkit-text-stroke:0.22px #141414;transform:scaleX(0.9150);transform-origin:0 50%;">144,815</span>
<span class="t g" style="left:1306.78px;top:606px;font-size:8.3px;color:#141414;-webkit-text-stroke:0.22px #141414;transform:scaleX(0.9150);transform-origin:0 50%;">124,125</span>
<span class="t g" style="left:1347.06px;top:606px;font-size:8.3px;color:#141414;-webkit-text-stroke:0.22px #141414;transform:scaleX(0.9150);transform-origin:0 50%;">133,011</span>
<span class="t g" style="left:1386.78px;top:606px;font-size:8.3px;color:#141414;-webkit-text-stroke:0.22px #141414;transform:scaleX(0.9150);transform-origin:0 50%;">141,896</span>
<div style="left:910.40px;top:626.31px;width:120.90px;height:10.13px;background:#2680cb"></div>
<span class="t g" style="left:924.05px;top:626px;font-size:8.3px;color:#fff;font-weight:bold;transform:scaleX(0.9050);transform-origin:0 50%;">Implied Perp. Growth Rate</span>
<div style="left:910.40px;top:636.44px;width:120.90px;height:9.63px;background:#f2f2f2"></div>
<span class="t g" style="left:949.30px;top:636px;font-size:8.3px;color:#000;font-weight:bold;transform:scaleX(0.9002);transform-origin:0 50%;text-decoration:underline;text-decoration-thickness:0.6px;text-underline-offset:0.4px;">Exit Multiple</span>
<span class="t g" style="left:923.29px;top:646px;font-size:8.3px;color:#000;font-weight:bold;transform:scaleX(0.9050);transform-origin:0 50%;">5.0x</span>
<span class="t g" style="left:963.29px;top:646px;font-size:8.3px;color:#000;font-weight:bold;transform:scaleX(0.9050);transform-origin:0 50%;">6.0x</span>
<span class="t g" style="left:1003.29px;top:646px;font-size:8.3px;color:#000;font-weight:bold;transform:scaleX(0.9050);transform-origin:0 50%;">7.0x</span>
<div style="left:910.40px;top:655.00px;width:120.90px;height:2.00px;background:#7e7e7e"></div>
<span class="t g" style="left:920.58px;top:655px;font-size:8.3px;color:#141414;-webkit-text-stroke:0.22px #141414;transform:scaleX(0.9150);transform-origin:0 50%;">-2.0%</span>
<span class="t g" style="left:961.85px;top:655px;font-size:8.3px;color:#141414;-webkit-text-stroke:0.22px #141414;transform:scaleX(0.9150);transform-origin:0 50%;">0.1%</span>
<span class="t g" style="left:1001.85px;top:655px;font-size:8.3px;color:#141414;-webkit-text-stroke:0.22px #141414;transform:scaleX(0.9150);transform-origin:0 50%;">1.6%</span>
<span class="t g" style="left:920.58px;top:665px;font-size:8.3px;color:#141414;-webkit-text-stroke:0.22px #141414;transform:scaleX(0.9150);transform-origin:0 50%;">-1.7%</span>
<span class="t g" style="left:961.85px;top:665px;font-size:8.3px;color:#141414;-webkit-text-stroke:0.22px #141414;transform:scaleX(0.9150);transform-origin:0 50%;">0.4%</span>
<span class="t g" style="left:1001.85px;top:665px;font-size:8.3px;color:#141414;-webkit-text-stroke:0.22px #141414;transform:scaleX(0.9150);transform-origin:0 50%;">1.9%</span>
<span class="t g" style="left:920.58px;top:675px;font-size:8.3px;color:#141414;-webkit-text-stroke:0.22px #141414;transform:scaleX(0.9150);transform-origin:0 50%;">-1.3%</span>
<span class="t g" style="left:961.85px;top:675px;font-size:8.3px;color:#141414;-webkit-text-stroke:0.22px #141414;transform:scaleX(0.9150);transform-origin:0 50%;">0.8%</span>
<span class="t g" style="left:1001.85px;top:675px;font-size:8.3px;color:#141414;-webkit-text-stroke:0.22px #141414;transform:scaleX(0.9150);transform-origin:0 50%;">2.3%</span>
<span class="t g" style="left:920.58px;top:685px;font-size:8.3px;color:#141414;-webkit-text-stroke:0.22px #141414;transform:scaleX(0.9150);transform-origin:0 50%;">-1.0%</span>
<span class="t g" style="left:961.85px;top:685px;font-size:8.3px;color:#141414;-webkit-text-stroke:0.22px #141414;transform:scaleX(0.9150);transform-origin:0 50%;">1.1%</span>
<span class="t g" style="left:1001.85px;top:685px;font-size:8.3px;color:#141414;-webkit-text-stroke:0.22px #141414;transform:scaleX(0.9150);transform-origin:0 50%;">2.6%</span>
<span class="t g" style="left:920.58px;top:695px;font-size:8.3px;color:#141414;-webkit-text-stroke:0.22px #141414;transform:scaleX(0.9150);transform-origin:0 50%;">-0.7%</span>
<span class="t g" style="left:961.85px;top:695px;font-size:8.3px;color:#141414;-webkit-text-stroke:0.22px #141414;transform:scaleX(0.9150);transform-origin:0 50%;">1.4%</span>
<span class="t g" style="left:1001.85px;top:695px;font-size:8.3px;color:#141414;-webkit-text-stroke:0.22px #141414;transform:scaleX(0.9150);transform-origin:0 50%;">2.9%</span>
<div style="left:1040.40px;top:626.31px;width:120.90px;height:10.13px;background:#2680cb"></div>
<span class="t g" style="left:1056.96px;top:626px;font-size:8.3px;color:#fff;font-weight:bold;transform:scaleX(0.9050);transform-origin:0 50%;">Implied EV / 23E EBITDA</span>
<div style="left:1040.40px;top:636.44px;width:120.90px;height:9.63px;background:#f2f2f2"></div>
<span class="t g" style="left:1079.30px;top:636px;font-size:8.3px;color:#000;font-weight:bold;transform:scaleX(0.9002);transform-origin:0 50%;text-decoration:underline;text-decoration-thickness:0.6px;text-underline-offset:0.4px;">Exit Multiple</span>
<span class="t g" style="left:1053.29px;top:646px;font-size:8.3px;color:#000;font-weight:bold;transform:scaleX(0.9050);transform-origin:0 50%;">5.0x</span>
<span class="t g" style="left:1093.29px;top:646px;font-size:8.3px;color:#000;font-weight:bold;transform:scaleX(0.9050);transform-origin:0 50%;">6.0x</span>
<span class="t g" style="left:1133.29px;top:646px;font-size:8.3px;color:#000;font-weight:bold;transform:scaleX(0.9050);transform-origin:0 50%;">7.0x</span>
<div style="left:1040.40px;top:655.00px;width:120.90px;height:2.00px;background:#7e7e7e"></div>
<span class="t g" style="left:1053.32px;top:655px;font-size:8.3px;color:#141414;-webkit-text-stroke:0.22px #141414;transform:scaleX(0.9150);transform-origin:0 50%;">7.8x</span>
<span class="t g" style="left:1093.32px;top:655px;font-size:8.3px;color:#141414;-webkit-text-stroke:0.22px #141414;transform:scaleX(0.9150);transform-origin:0 50%;">8.4x</span>
<span class="t g" style="left:1133.32px;top:655px;font-size:8.3px;color:#141414;-webkit-text-stroke:0.22px #141414;transform:scaleX(0.9150);transform-origin:0 50%;">8.9x</span>
<span class="t g" style="left:1053.32px;top:665px;font-size:8.3px;color:#141414;-webkit-text-stroke:0.22px #141414;transform:scaleX(0.9150);transform-origin:0 50%;">7.7x</span>
<span class="t g" style="left:1093.32px;top:665px;font-size:8.3px;color:#141414;-webkit-text-stroke:0.22px #141414;transform:scaleX(0.9150);transform-origin:0 50%;">8.2x</span>
<span class="t g" style="left:1133.32px;top:665px;font-size:8.3px;color:#141414;-webkit-text-stroke:0.22px #141414;transform:scaleX(0.9150);transform-origin:0 50%;">8.7x</span>
<span class="t g" style="left:1053.32px;top:675px;font-size:8.3px;color:#141414;-webkit-text-stroke:0.22px #141414;transform:scaleX(0.9150);transform-origin:0 50%;">7.5x</span>
<span class="t g" style="left:1093.32px;top:675px;font-size:8.3px;color:#141414;-webkit-text-stroke:0.22px #141414;transform:scaleX(0.9150);transform-origin:0 50%;">8.0x</span>
<span class="t g" style="left:1133.32px;top:675px;font-size:8.3px;color:#141414;-webkit-text-stroke:0.22px #141414;transform:scaleX(0.9150);transform-origin:0 50%;">8.6x</span>
<span class="t g" style="left:1053.32px;top:685px;font-size:8.3px;color:#141414;-webkit-text-stroke:0.22px #141414;transform:scaleX(0.9150);transform-origin:0 50%;">7.4x</span>
<span class="t g" style="left:1093.32px;top:685px;font-size:8.3px;color:#141414;-webkit-text-stroke:0.22px #141414;transform:scaleX(0.9150);transform-origin:0 50%;">7.9x</span>
<span class="t g" style="left:1133.32px;top:685px;font-size:8.3px;color:#141414;-webkit-text-stroke:0.22px #141414;transform:scaleX(0.9150);transform-origin:0 50%;">8.4x</span>
<span class="t g" style="left:1053.32px;top:695px;font-size:8.3px;color:#141414;-webkit-text-stroke:0.22px #141414;transform:scaleX(0.9150);transform-origin:0 50%;">7.3x</span>
<span class="t g" style="left:1093.32px;top:695px;font-size:8.3px;color:#141414;-webkit-text-stroke:0.22px #141414;transform:scaleX(0.9150);transform-origin:0 50%;">7.8x</span>
<span class="t g" style="left:1133.32px;top:695px;font-size:8.3px;color:#141414;-webkit-text-stroke:0.22px #141414;transform:scaleX(0.9150);transform-origin:0 50%;">8.2x</span>
<div style="left:1170.40px;top:626.31px;width:120.90px;height:10.13px;background:#2680cb"></div>
<span class="t g" style="left:1186.96px;top:626px;font-size:8.3px;color:#fff;font-weight:bold;transform:scaleX(0.9050);transform-origin:0 50%;">Implied EV / 24E EBITDA</span>
<div style="left:1170.40px;top:636.44px;width:120.90px;height:9.63px;background:#f2f2f2"></div>
<span class="t g" style="left:1209.30px;top:636px;font-size:8.3px;color:#000;font-weight:bold;transform:scaleX(0.9002);transform-origin:0 50%;text-decoration:underline;text-decoration-thickness:0.6px;text-underline-offset:0.4px;">Exit Multiple</span>
<span class="t g" style="left:1183.29px;top:646px;font-size:8.3px;color:#000;font-weight:bold;transform:scaleX(0.9050);transform-origin:0 50%;">5.0x</span>
<span class="t g" style="left:1223.29px;top:646px;font-size:8.3px;color:#000;font-weight:bold;transform:scaleX(0.9050);transform-origin:0 50%;">6.0x</span>
<span class="t g" style="left:1263.29px;top:646px;font-size:8.3px;color:#000;font-weight:bold;transform:scaleX(0.9050);transform-origin:0 50%;">7.0x</span>
<div style="left:1170.40px;top:655.00px;width:120.90px;height:2.00px;background:#7e7e7e"></div>
<span class="t g" style="left:1183.32px;top:655px;font-size:8.3px;color:#141414;-webkit-text-stroke:0.22px #141414;transform:scaleX(0.9150);transform-origin:0 50%;">7.5x</span>
<span class="t g" style="left:1223.32px;top:655px;font-size:8.3px;color:#141414;-webkit-text-stroke:0.22px #141414;transform:scaleX(0.9150);transform-origin:0 50%;">8.0x</span>
<span class="t g" style="left:1263.32px;top:655px;font-size:8.3px;color:#141414;-webkit-text-stroke:0.22px #141414;transform:scaleX(0.9150);transform-origin:0 50%;">8.5x</span>
<span class="t g" style="left:1183.32px;top:665px;font-size:8.3px;color:#141414;-webkit-text-stroke:0.22px #141414;transform:scaleX(0.9150);transform-origin:0 50%;">7.3x</span>
<span class="t g" style="left:1223.32px;top:665px;font-size:8.3px;color:#141414;-webkit-text-stroke:0.22px #141414;transform:scaleX(0.9150);transform-origin:0 50%;">7.8x</span>
<span class="t g" style="left:1263.32px;top:665px;font-size:8.3px;color:#141414;-webkit-text-stroke:0.22px #141414;transform:scaleX(0.9150);transform-origin:0 50%;">8.3x</span>
<span class="t g" style="left:1183.32px;top:675px;font-size:8.3px;color:#141414;-webkit-text-stroke:0.22px #141414;transform:scaleX(0.9150);transform-origin:0 50%;">7.2x</span>
<span class="t g" style="left:1223.32px;top:675px;font-size:8.3px;color:#141414;-webkit-text-stroke:0.22px #141414;transform:scaleX(0.9150);transform-origin:0 50%;">7.7x</span>
<span class="t g" style="left:1263.32px;top:675px;font-size:8.3px;color:#141414;-webkit-text-stroke:0.22px #141414;transform:scaleX(0.9150);transform-origin:0 50%;">8.2x</span>
<span class="t g" style="left:1183.32px;top:685px;font-size:8.3px;color:#141414;-webkit-text-stroke:0.22px #141414;transform:scaleX(0.9150);transform-origin:0 50%;">7.1x</span>
<span class="t g" style="left:1223.32px;top:685px;font-size:8.3px;color:#141414;-webkit-text-stroke:0.22px #141414;transform:scaleX(0.9150);transform-origin:0 50%;">7.5x</span>
<span class="t g" style="left:1263.32px;top:685px;font-size:8.3px;color:#141414;-webkit-text-stroke:0.22px #141414;transform:scaleX(0.9150);transform-origin:0 50%;">8.0x</span>
<span class="t g" style="left:1183.32px;top:695px;font-size:8.3px;color:#141414;-webkit-text-stroke:0.22px #141414;transform:scaleX(0.9150);transform-origin:0 50%;">6.9x</span>
<span class="t g" style="left:1223.32px;top:695px;font-size:8.3px;color:#141414;-webkit-text-stroke:0.22px #141414;transform:scaleX(0.9150);transform-origin:0 50%;">7.4x</span>
<span class="t g" style="left:1263.32px;top:695px;font-size:8.3px;color:#141414;-webkit-text-stroke:0.22px #141414;transform:scaleX(0.9150);transform-origin:0 50%;">7.9x</span>
<div style="left:1300.40px;top:626.31px;width:120.90px;height:10.13px;background:#2680cb"></div>
<span class="t g" style="left:1316.96px;top:626px;font-size:8.3px;color:#fff;font-weight:bold;transform:scaleX(0.9050);transform-origin:0 50%;">Implied EV / 25E EBITDA</span>
<div style="left:1300.40px;top:636.44px;width:120.90px;height:9.63px;background:#f2f2f2"></div>
<span class="t g" style="left:1339.30px;top:636px;font-size:8.3px;color:#000;font-weight:bold;transform:scaleX(0.9002);transform-origin:0 50%;text-decoration:underline;text-decoration-thickness:0.6px;text-underline-offset:0.4px;">Exit Multiple</span>
<span class="t g" style="left:1313.29px;top:646px;font-size:8.3px;color:#000;font-weight:bold;transform:scaleX(0.9050);transform-origin:0 50%;">5.0x</span>
<span class="t g" style="left:1353.29px;top:646px;font-size:8.3px;color:#000;font-weight:bold;transform:scaleX(0.9050);transform-origin:0 50%;">6.0x</span>
<span class="t g" style="left:1393.29px;top:646px;font-size:8.3px;color:#000;font-weight:bold;transform:scaleX(0.9050);transform-origin:0 50%;">7.0x</span>
<div style="left:1300.40px;top:655.00px;width:120.90px;height:2.00px;background:#7e7e7e"></div>
<span class="t g" style="left:1313.32px;top:655px;font-size:8.3px;color:#141414;-webkit-text-stroke:0.22px #141414;transform:scaleX(0.9150);transform-origin:0 50%;">7.2x</span>
<span class="t g" style="left:1353.32px;top:655px;font-size:8.3px;color:#141414;-webkit-text-stroke:0.22px #141414;transform:scaleX(0.9150);transform-origin:0 50%;">7.7x</span>
<span class="t g" style="left:1393.32px;top:655px;font-size:8.3px;color:#141414;-webkit-text-stroke:0.22px #141414;transform:scaleX(0.9150);transform-origin:0 50%;">8.2x</span>
<span class="t g" style="left:1313.32px;top:665px;font-size:8.3px;color:#141414;-webkit-text-stroke:0.22px #141414;transform:scaleX(0.9150);transform-origin:0 50%;">7.0x</span>
<span class="t g" style="left:1353.32px;top:665px;font-size:8.3px;color:#141414;-webkit-text-stroke:0.22px #141414;transform:scaleX(0.9150);transform-origin:0 50%;">7.5x</span>
<span class="t g" style="left:1393.32px;top:665px;font-size:8.3px;color:#141414;-webkit-text-stroke:0.22px #141414;transform:scaleX(0.9150);transform-origin:0 50%;">8.0x</span>
<span class="t g" style="left:1313.32px;top:675px;font-size:8.3px;color:#141414;-webkit-text-stroke:0.22px #141414;transform:scaleX(0.9150);transform-origin:0 50%;">6.9x</span>
<span class="t g" style="left:1353.32px;top:675px;font-size:8.3px;color:#141414;-webkit-text-stroke:0.22px #141414;transform:scaleX(0.9150);transform-origin:0 50%;">7.4x</span>
<span class="t g" style="left:1393.32px;top:675px;font-size:8.3px;color:#141414;-webkit-text-stroke:0.22px #141414;transform:scaleX(0.9150);transform-origin:0 50%;">7.9x</span>
<span class="t g" style="left:1313.32px;top:685px;font-size:8.3px;color:#141414;-webkit-text-stroke:0.22px #141414;transform:scaleX(0.9150);transform-origin:0 50%;">6.8x</span>
<span class="t g" style="left:1353.32px;top:685px;font-size:8.3px;color:#141414;-webkit-text-stroke:0.22px #141414;transform:scaleX(0.9150);transform-origin:0 50%;">7.3x</span>
<span class="t g" style="left:1393.32px;top:685px;font-size:8.3px;color:#141414;-webkit-text-stroke:0.22px #141414;transform:scaleX(0.9150);transform-origin:0 50%;">7.7x</span>
<span class="t g" style="left:1313.32px;top:695px;font-size:8.3px;color:#141414;-webkit-text-stroke:0.22px #141414;transform:scaleX(0.9150);transform-origin:0 50%;">6.7x</span>
<span class="t g" style="left:1353.32px;top:695px;font-size:8.3px;color:#141414;-webkit-text-stroke:0.22px #141414;transform:scaleX(0.9150);transform-origin:0 50%;">7.1x</span>
<span class="t g" style="left:1393.32px;top:695px;font-size:8.3px;color:#141414;-webkit-text-stroke:0.22px #141414;transform:scaleX(0.9150);transform-origin:0 50%;">7.6x</span>
<span class="t g" style="left:1173.30px;top:587px;font-size:8.4px;color:#141414;-webkit-text-stroke:0.22px #141414;transform:scaleX(0.9124);transform-origin:0 50%;">(+) Cash</span>
<span class="t g" style="left:1173.30px;top:596px;font-size:8.4px;color:#141414;-webkit-text-stroke:0.22px #141414;transform:scaleX(1.0184);transform-origin:0 50%;">(-) Financial Debt</span>
<span class="t g" style="left:1173.30px;top:606px;font-size:8.3px;color:#000;font-weight:bold;transform:scaleX(0.8675);transform-origin:0 50%;">Total Adjustments</span>
<span class="t g" style="left:1273.73px;top:587px;font-size:8.3px;color:#141414;-webkit-text-stroke:0.22px #141414;transform:scaleX(0.9150);transform-origin:0 50%;">996</span>
<span class="t g" style="left:1265.24px;top:596px;font-size:8.3px;color:#141414;-webkit-text-stroke:0.22px #141414;transform:scaleX(0.9150);transform-origin:0 50%;">(9,160)</span>
<span class="t g" style="left:1265.50px;top:606px;font-size:8.3px;color:#000;font-weight:bold;transform:scaleX(0.9050);transform-origin:0 50%;">(8,164)</span>
<div style="left:1170.30px;top:606.15px;width:120.90px;height:1.10px;background:#404040"></div>
<svg style="left:13.50px;top:14.00px" width="15" height="15" viewBox="0 0 15 15" fill="none"><rect x="3.5" y="0.5" width="11" height="14" rx="1.3" fill="#21a366"/><rect x="3.5" y="0.5" width="5.5" height="7" fill="#107c41"/><rect x="9" y="0.5" width="5.5" height="3.6" rx="0" fill="#33c481"/><rect x="9" y="7.5" width="5.5" height="3.5" fill="#107c41"/><rect x="3.5" y="11" width="11" height="3.5" rx="0" fill="#185c37"/><rect x="0" y="3.2" width="8.6" height="8.6" rx="1" fill="#107c41"/><path d="M2.4 5.2 L6.2 9.8 M6.2 5.2 L2.4 9.8" stroke="#fff" stroke-width="1.2"/></svg>
<span class="t" style="left:43.00px;top:13.60px;height:16px;line-height:16px;font-size:12px;color:#242424;transform:scaleX(0.8456);transform-origin:0 50%;">AutoSave</span>
<div style="left:92.60px;top:12.60px;width:38.20px;height:17.00px;border:1px solid #5f5f5f;border-radius:9px;box-sizing:border-box;background:#fdfdfd"></div>
<div style="left:96.00px;top:15.50px;width:11.20px;height:11.20px;border-radius:50%;background:#5d5d5d"></div>
<span class="t" style="left:112.70px;top:13.50px;height:16px;line-height:16px;font-size:10px;color:#333;transform:scaleX(0.8819);transform-origin:0 50%;">Off</span>
<svg style="left:142.00px;top:13.50px" width="15" height="15" viewBox="0 0 15 15" fill="none"><path d="M1 1.5 h10.6 l2.4 2.4 v9.6 h-13 z" fill="#f2e3f3" stroke="#a33aa8" stroke-width="1.4" stroke-linejoin="round"/><rect x="3.7" y="1.5" width="6.4" height="4.2" fill="none" stroke="#a33aa8" stroke-width="1.3"/><rect x="3.7" y="9" width="7.2" height="4.6" fill="none" stroke="#a33aa8" stroke-width="1.3"/></svg>
<svg style="left:166.00px;top:13.00px" width="16" height="17" viewBox="0 0 16 17" fill="none"><path d="M2 2.2 V8 H7.8" stroke="#3b3b3b" stroke-width="1.3" stroke-linecap="round" stroke-linejoin="round"/><path d="M2.2 7.8 C4.5 3.8 9 2.2 11.6 4.6 C14.2 7.2 12.6 10.6 9.6 13 L6.2 15.6" stroke="#3b3b3b" stroke-width="1.3" stroke-linecap="round"/></svg>
<svg style="left:184.50px;top:18.30px" width="8" height="8" viewBox="0 0 8 8" fill="none"><path d="M1.7999999999999998 2.9 L4 5.1 L6.2 2.9" stroke="#3b3b3b" stroke-width="1.1" stroke-linecap="round" stroke-linejoin="round"/></svg>
<svg style="left:199.50px;top:13.00px" width="16" height="17" viewBox="0 0 16 17" fill="none"><path d="M14 2.2 V8 H8.2" stroke="#b9b9b9" stroke-width="1.3" stroke-linecap="round" stroke-linejoin="round"/><path d="M13.8 7.8 C11.5 3.8 7 2.2 4.4 4.6 C1.8 7.2 3.4 10.6 6.4 13 L9.8 15.6" stroke="#b9b9b9" stroke-width="1.3" stroke-linecap="round"/></svg>
<svg style="left:218.30px;top:18.30px" width="8" height="8" viewBox="0 0 8 8" fill="none"><path d="M2.0 3.0 L4 5.0 L6.0 3.0" stroke="#c2c2c2" stroke-width="1.1" stroke-linecap="round" stroke-linejoin="round"/></svg>
<svg style="left:236.00px;top:17.00px" width="10" height="10" viewBox="0 0 10 10" fill="none"><path d="M2 2.2 H8" stroke="#444" stroke-width="1.1" stroke-linecap="round"/><path d="M2.4 5 L5 7.6 L7.6 5" stroke="#444" stroke-width="1.1" stroke-linecap="round" stroke-linejoin="round"/></svg>
<span class="t" style="left:265.70px;top:13.60px;height:16px;line-height:16px;font-size:12px;color:#242424;transform:scaleX(0.8935);transform-origin:0 50%;">Hospitality (Hotel) - Financial Model and Valuation vf</span>
<svg style="left:517.60px;top:18.20px" width="8" height="8" viewBox="0 0 8 8" fill="none"><path d="M0.5 2.25 L4 5.75 L7.5 2.25" stroke="#333" stroke-width="1.2" stroke-linecap="round" stroke-linejoin="round"/></svg>
<div style="left:594.50px;top:6.50px;width:410.50px;height:28.00px;background:#fbfbfb;border:1px solid #e6e3e3;border-radius:4px;box-sizing:border-box;box-shadow:0 0.6px 1.6px rgba(0,0,0,.16)"></div>
<svg style="left:612.00px;top:13.00px" width="15" height="15" viewBox="0 0 15 15" fill="none"><circle cx="8.8" cy="6" r="4.3" stroke="#505050" stroke-width="1.1"/><path d="M5.8 9.2 L1.6 13.4" stroke="#505050" stroke-width="1.2" stroke-linecap="round"/></svg>
<span class="t" style="left:638.00px;top:12.60px;height:16px;line-height:16px;font-size:12.6px;color:#5e5e5e;transform:scaleX(0.8893);transform-origin:0 50%;">Search</span>
<span class="t" style="left:1346.00px;top:13.60px;height:16px;line-height:16px;font-size:12px;color:#242424;transform:scaleX(0.8241);transform-origin:0 50%;">Rafael Carranza</span>
<div style="left:1426.40px;top:10.40px;width:21.40px;height:21.40px;border-radius:50%;background:#91690f"></div>
<span class="t" style="left:1431.20px;top:13.80px;height:16px;line-height:16px;font-size:9.2px;color:#fff;transform:scaleX(0.8579);transform-origin:0 50%;">RC</span>
<span class="t" style="left:19.00px;top:48.80px;height:16px;line-height:16px;font-size:13px;color:#2b2b2b;transform:scaleX(0.8832);transform-origin:0 50%;">File</span>
<span class="t" style="left:59.00px;top:48.80px;height:16px;line-height:16px;font-size:13px;color:#1a1a1a;transform:scaleX(0.9517);transform-origin:0 50%;text-shadow:0.35px 0 0 #1a1a1a;">Home</span>
<span class="t" style="left:108.00px;top:48.80px;height:16px;line-height:16px;font-size:13px;color:#2b2b2b;transform:scaleX(0.9382);transform-origin:0 50%;">Insert</span>
<span class="t" style="left:155.00px;top:48.80px;height:16px;line-height:16px;font-size:13px;color:#2b2b2b;transform:scaleX(0.8901);transform-origin:0 50%;">Draw</span>
<span class="t" style="left:199.50px;top:48.80px;height:16px;line-height:16px;font-size:13px;color:#2b2b2b;transform:scaleX(0.8904);transform-origin:0 50%;">Page Layout</span>
<span class="t" style="left:282.00px;top:48.80px;height:16px;line-height:16px;font-size:13px;color:#2b2b2b;transform:scaleX(0.8953);transform-origin:0 50%;">Formulas</span>
<span class="t" style="left:347.50px;top:48.80px;height:16px;line-height:16px;font-size:13px;color:#2b2b2b;transform:scaleX(0.8923);transform-origin:0 50%;">Data</span>
<span class="t" style="left:389.50px;top:48.80px;height:16px;line-height:16px;font-size:13px;color:#2b2b2b;transform:scaleX(0.8563);transform-origin:0 50%;">Review</span>
<span class="t" style="left:443.50px;top:48.80px;height:16px;line-height:16px;font-size:13px;color:#2b2b2b;transform:scaleX(0.8947);transform-origin:0 50%;">View</span>
<span class="t" style="left:485.50px;top:48.80px;height:16px;line-height:16px;font-size:13px;color:#2b2b2b;transform:scaleX(0.9615);transform-origin:0 50%;">Automate</span>
<span class="t" style="left:555.50px;top:48.80px;height:16px;line-height:16px;font-size:13px;color:#2b2b2b;transform:scaleX(0.9164);transform-origin:0 50%;">Help</span>
<div style="left:59.00px;top:65.60px;width:33.50px;height:2.40px;background:#107c41;border-radius:1.2px"></div>
<div style="left:1408.60px;top:45.60px;width:51.40px;height:20.00px;background:#fff;border:1px solid #b5b5b5;border-radius:4px;box-sizing:border-box"></div>
<svg style="left:1414.50px;top:49.50px" width="12" height="12" viewBox="0 0 12 12" fill="none"><path d="M1.6 1.8 H10.4 V8.2 H5.2 L2.8 10.4 V8.2 H1.6 Z" stroke="#333" stroke-width="1.1" stroke-linejoin="round"/></svg>
<span class="t" style="left:1429.50px;top:48.00px;height:16px;line-height:16px;font-size:13px;color:#222;transform:scaleX(0.9628);transform-origin:0 50%;">Co</span>
<div style="left:7.00px;top:69.30px;width:1453.00px;height:86.70px;background:#fff;border-radius:7px;box-shadow:0 1px 2.5px rgba(0,0,0,.22), 0 0 1px rgba(0,0,0,.15)"></div>
<div style="left:157.80px;top:73.50px;width:1.00px;height:77.50px;background:#dedede"></div>
<div style="left:363.10px;top:73.50px;width:1.00px;height:77.50px;background:#dedede"></div>
<div style="left:618.40px;top:73.50px;width:1.00px;height:77.50px;background:#dedede"></div>
<div style="left:759.00px;top:73.50px;width:1.00px;height:77.50px;background:#dedede"></div>
<div style="left:928.80px;top:73.50px;width:1.00px;height:77.50px;background:#dedede"></div>
<div style="left:1056.10px;top:73.50px;width:1.00px;height:77.50px;background:#dedede"></div>
<div style="left:1236.20px;top:73.50px;width:1.00px;height:77.50px;background:#dedede"></div>
<div style="left:1300.00px;top:73.50px;width:1.00px;height:77.50px;background:#dedede"></div>
<div style="left:1354.10px;top:73.50px;width:1.00px;height:77.50px;background:#dedede"></div>
<div style="left:1408.20px;top:73.50px;width:1.00px;height:77.50px;background:#dedede"></div>
<svg style="left:25.00px;top:74.50px" width="26" height="30" viewBox="0 0 26 30" fill="none"><rect x="1.6" y="4.2" width="17.4" height="21" rx="1" fill="#fdf3e3" stroke="#e8912d" stroke-width="1.5"/><path d="M6 5.4 V3 H8.2 C8.2 0.6 12.6 0.6 12.6 3 H14.8 V5.4 Z" fill="#fff" stroke="#6b6b6b" stroke-width="1.1" stroke-linejoin="round"/><rect x="13" y="12.4" width="11.6" height="15" rx="1" fill="#f6f6f6" stroke="#5f5f5f" stroke-width="1.3"/></svg>
<span class="t" style="left:24.20px;top:105.20px;height:16px;line-height:16px;font-size:11.6px;color:#242424;transform:scaleX(0.7822);transform-origin:0 50%;">Paste</span>
<svg style="left:31.30px;top:122.60px" width="8" height="8" viewBox="0 0 8 8" fill="none"><path d="M1.7000000000000002 2.85 L4 5.15 L6.3 2.85" stroke="#444" stroke-width="1.1" stroke-linecap="round" stroke-linejoin="round"/></svg>
<svg style="left:59.00px;top:75.00px" width="14" height="15" viewBox="0 0 14 15" fill="none"><path d="M4.6 0.8 L8.6 10.2 M9.4 0.8 L5.4 10.2" stroke="#444" stroke-width="1.1" stroke-linecap="round"/><circle cx="4.4" cy="12" r="1.9" stroke="#2b88d8" stroke-width="1.1"/><circle cx="9.6" cy="12" r="1.9" stroke="#2b88d8" stroke-width="1.1"/></svg>
<span class="t" style="left:76.60px;top:75.00px;height:16px;line-height:16px;font-size:11.6px;color:#242424;transform:scaleX(0.8532);transform-origin:0 50%;">Cut</span>
<svg style="left:58.00px;top:97.00px" width="16" height="15" viewBox="0 0 16 15" fill="none"><path d="M5.2 2.6 V1 H1.2 V11.8 H4.6" stroke="#555" stroke-width="1.1" stroke-linejoin="round"/><path d="M5.6 3.6 H11.2 L14.4 6.8 V14.2 H5.6 Z" fill="#fff" stroke="#555" stroke-width="1.1" stroke-linejoin="round"/><path d="M8 9.4 H12 M8 11.6 H12" stroke="#777" stroke-width="0.9"/></svg>
<span class="t" style="left:76.60px;top:97.20px;height:16px;line-height:16px;font-size:11.6px;color:#242424;transform:scaleX(0.8789);transform-origin:0 50%;">Copy</span>
<svg style="left:110.00px;top:101.00px" width="8" height="8" viewBox="0 0 8 8" fill="none"><path d="M1.7000000000000002 2.85 L4 5.15 L6.3 2.85" stroke="#444" stroke-width="1.1" stroke-linecap="round" stroke-linejoin="round"/></svg>
<svg style="left:58.50px;top:119.50px" width="16" height="15" viewBox="0 0 16 15" fill="none"><path d="M1 7.4 L8.4 3.4 L11.6 8.4 L6 13.6 Z" fill="#fbe3cf" stroke="#e07020" stroke-width="1.1" stroke-linejoin="round"/><path d="M4 9.6 L9.6 11" stroke="#e07020" stroke-width="0.9"/><path d="M8.2 3.6 L10.6 2 L13.4 6.6 L11.2 8" stroke="#444" stroke-width="1" fill="#fff" stroke-linejoin="round"/><path d="M10.8 2 L12.4 0.6 L14.6 3.6 L12.8 5.2" stroke="#444" stroke-width="1" fill="#fff" stroke-linejoin="round"/></svg>
<span class="t" style="left:76.40px;top:119.60px;height:16px;line-height:16px;font-size:11.6px;color:#242424;transform:scaleX(0.8813);transform-origin:0 50%;">Format Painter</span>
<span class="t" style="left:57.00px;top:139.90px;height:16px;line-height:16px;font-size:10.0px;color:#3b3b3b;transform:scaleX(0.9439);transform-origin:0 50%;">Clipboard</span>
<svg style="left:147.50px;top:144.80px" width="8" height="8" viewBox="0 0 8 8" fill="none"><path d="M0.6 5.4 V0.6 H5.4" stroke="#555" stroke-width="1"/><path d="M3 3 L6.8 6.8 M6.8 3.6 V6.8 H3.6" stroke="#555" stroke-width="1"/></svg>
<div style="left:166.00px;top:78.50px;width:100.70px;height:21.10px;background:#fff;border:1px solid #b9b9b9;border-radius:4px;box-sizing:border-box"></div>
<div style="left:268.30px;top:78.50px;width:43.30px;height:21.10px;background:#fff;border:1px solid #b9b9b9;border-radius:4px;box-sizing:border-box"></div>
<span class="t" style="left:168.00px;top:81.60px;height:16px;line-height:16px;font-size:11.8px;color:#242424;transform:scaleX(0.8971);transform-origin:0 50%;">Calibri</span>
<svg style="left:257.30px;top:85.60px" width="8" height="8" viewBox="0 0 8 8" fill="none"><path d="M1.7000000000000002 2.85 L4 5.15 L6.3 2.85" stroke="#444" stroke-width="1.1" stroke-linecap="round" stroke-linejoin="round"/></svg>
<span class="t" style="left:271.00px;top:81.60px;height:16px;line-height:16px;font-size:11.8px;color:#242424;transform:scaleX(0.8165);transform-origin:0 50%;">11</span>
<svg style="left:302.00px;top:85.60px" width="8" height="8" viewBox="0 0 8 8" fill="none"><path d="M1.7000000000000002 2.85 L4 5.15 L6.3 2.85" stroke="#444" stroke-width="1.1" stroke-linecap="round" stroke-linejoin="round"/></svg>
<span class="t" style="left:317.50px;top:80.60px;height:16px;line-height:16px;font-size:15.5px;color:#3b3b3b;transform:scaleX(1.0156);transform-origin:0 50%;">A</span>
<svg style="left:326.50px;top:82.00px" width="7" height="5" viewBox="0 0 7 5" fill="none"><path d="M1 3.6 L3.2 1.2 L5.4 3.6" stroke="#2b88d8" stroke-width="1.1" stroke-linecap="round" stroke-linejoin="round"/></svg>
<span class="t" style="left:341.50px;top:81.60px;height:16px;line-height:16px;font-size:13px;color:#3b3b3b;transform:scaleX(0.9802);transform-origin:0 50%;">A</span>
<svg style="left:349.00px;top:82.00px" width="7" height="5" viewBox="0 0 7 5" fill="none"><path d="M1 1.4 L3.2 3.8 L5.4 1.4" stroke="#2b88d8" stroke-width="1.1" stroke-linecap="round" stroke-linejoin="round"/></svg>
<span class="t" style="left:172.40px;top:108.80px;height:16px;line-height:16px;font-size:12.4px;color:#333;font-weight:bold;transform:scaleX(0.8933);transform-origin:0 50%;">B</span>
<span class="t" style="left:195.8px;top:108.7px;height:16px;line-height:16px;font-family:'Liberation Serif',serif;font-style:italic;font-size:13.2px;color:#3b3b3b">I</span>
<span class="t" style="left:217.00px;top:108.40px;height:16px;line-height:16px;font-size:11.6px;color:#333;transform:scaleX(0.9550);transform-origin:0 50%;">U</span>
<div style="left:216.40px;top:122.20px;width:9.20px;height:1.00px;background:#333"></div>
<svg style="left:233.60px;top:113.60px" width="8" height="8" viewBox="0 0 8 8" fill="none"><path d="M1.7000000000000002 2.85 L4 5.15 L6.3 2.85" stroke="#444" stroke-width="1.1" stroke-linecap="round" stroke-linejoin="round"/></svg>
<div style="left:246.00px;top:107.00px;width:1.00px;height:20.50px;background:#dedede"></div>
<svg style="left:252.00px;top:109.50px" width="15" height="15" viewBox="0 0 15 15" fill="none"><path d="M1 1 H13.6 M1 1 V13.6 M13.6 1 V13.6 M7.3 1 V13.6 M1 7.3 H13.6" stroke="#777" stroke-width="0.9" stroke-dasharray="1 1"/><path d="M0.6 13.7 H14" stroke="#444" stroke-width="1.3"/><path d="M7.3 1 V13.6 M1 7.3 H13.6" stroke="#8a8a8a" stroke-width="0.8"/></svg>
<svg style="left:271.60px;top:113.60px" width="8" height="8" viewBox="0 0 8 8" fill="none"><path d="M1.7000000000000002 2.85 L4 5.15 L6.3 2.85" stroke="#444" stroke-width="1.1" stroke-linecap="round" stroke-linejoin="round"/></svg>
<div style="left:284.00px;top:107.00px;width:1.00px;height:20.50px;background:#dedede"></div>
<svg style="left:289.50px;top:109.00px" width="16" height="16" viewBox="0 0 16 16" fill="none"><path d="M4 7.6 L8.4 1.6 L12.4 6.2 L7.6 10.6 Z" stroke="#444" stroke-width="1.1" stroke-linejoin="round" fill="#fff"/><path d="M11.6 4.6 C13.6 5.4 13.8 7.4 13.2 9.2" stroke="#2b88d8" stroke-width="1.3" stroke-linecap="round"/><rect x="1" y="12.4" width="13.4" height="2.6" fill="#fff" stroke="#bdbdbd" stroke-width="0.9"/></svg>
<svg style="left:309.60px;top:113.60px" width="8" height="8" viewBox="0 0 8 8" fill="none"><path d="M1.7000000000000002 2.85 L4 5.15 L6.3 2.85" stroke="#444" stroke-width="1.1" stroke-linecap="round" stroke-linejoin="round"/></svg>
<span class="t" style="left:328.00px;top:106.60px;height:16px;line-height:16px;font-size:14.2px;color:#3b3b3b;transform:scaleX(1.0980);transform-origin:0 50%;">A</span>
<div style="left:326.00px;top:121.20px;width:14.00px;height:3.00px;background:#0a0a0a"></div>
<svg style="left:345.40px;top:113.60px" width="8" height="8" viewBox="0 0 8 8" fill="none"><path d="M1.7000000000000002 2.85 L4 5.15 L6.3 2.85" stroke="#444" stroke-width="1.1" stroke-linecap="round" stroke-linejoin="round"/></svg>
<span class="t" style="left:245.00px;top:139.90px;height:16px;line-height:16px;font-size:10.0px;color:#3b3b3b;transform:scaleX(0.8996);transform-origin:0 50%;">Font</span>
<svg style="left:353.50px;top:144.80px" width="8" height="8" viewBox="0 0 8 8" fill="none"><path d="M0.6 5.4 V0.6 H5.4" stroke="#555" stroke-width="1"/><path d="M3 3 L6.8 6.8 M6.8 3.6 V6.8 H3.6" stroke="#555" stroke-width="1"/></svg>
<svg style="left:373.40px;top:78.00px" width="16" height="16" viewBox="0 0 16 16" fill="none"><path d="M1.60 4.60 H14.40" stroke="#555" stroke-width="1.05"/><path d="M4.03 8.00 H11.97" stroke="#555" stroke-width="1.05"/><path d="M1.60 11.40 H14.40" stroke="#555" stroke-width="1.05"/></svg>
<svg style="left:395.80px;top:80.60px" width="16" height="16" viewBox="0 0 16 16" fill="none"><path d="M1.60 4.60 H14.40" stroke="#555" stroke-width="1.05"/><path d="M4.03 8.00 H11.97" stroke="#555" stroke-width="1.05"/><path d="M1.60 11.40 H14.40" stroke="#555" stroke-width="1.05"/></svg>
<div style="left:416.00px;top:78.60px;width:21.00px;height:21.10px;background:#ececec;border:1px solid #9b9b9b;border-radius:3.5px;box-sizing:border-box"></div>
<svg style="left:418.60px;top:84.30px" width="16" height="16" viewBox="0 0 16 16" fill="none"><path d="M1.60 4.60 H14.40" stroke="#555" stroke-width="1.05"/><path d="M4.03 8.00 H11.97" stroke="#555" stroke-width="1.05"/><path d="M1.60 11.40 H14.40" stroke="#555" stroke-width="1.05"/></svg>
<div style="left:438.20px;top:78.60px;width:1.00px;height:21.00px;background:#dedede"></div>
<div style="left:438.20px;top:106.60px;width:1.00px;height:21.00px;background:#dedede"></div>
<svg style="left:443.00px;top:80.00px" width="16" height="17" viewBox="0 0 16 17" fill="none"><text x="0" y="0" font-family="Liberation Sans" font-size="8.6" fill="#444" transform="translate(1.6 10.4) rotate(-42)">ab</text><path d="M4.6 14.6 L13.4 5.6 M9.6 5.4 H13.6 V9.4" stroke="#2b88d8" stroke-width="1.1" stroke-linecap="round" stroke-linejoin="round"/></svg>
<svg style="left:461.80px;top:85.60px" width="8" height="8" viewBox="0 0 8 8" fill="none"><path d="M1.7000000000000002 2.85 L4 5.15 L6.3 2.85" stroke="#444" stroke-width="1.1" stroke-linecap="round" stroke-linejoin="round"/></svg>
<div style="left:488.70px;top:78.60px;width:1.00px;height:53.90px;background:#dedede"></div>
<svg style="left:498.00px;top:81.00px" width="16" height="17" viewBox="0 0 16 17" fill="none"><text x="0.6" y="7" font-family="Liberation Sans" font-size="8.4" fill="#444">ab</text><text x="1" y="14.6" font-family="Liberation Sans" font-size="8.4" fill="#444">c</text><path d="M10 4.4 C14.6 4.6 14.4 11.6 9.4 11.6 H6.6 M8.6 9.4 L6.4 11.6 L8.6 13.8" stroke="#2b88d8" stroke-width="1.1" stroke-linecap="round" stroke-linejoin="round"/></svg>
<span class="t" style="left:515.60px;top:81.60px;height:16px;line-height:16px;font-size:11.6px;color:#242424;transform:scaleX(0.9037);transform-origin:0 50%;">Wrap Text</span>
<svg style="left:373.20px;top:109.10px" width="16" height="16" viewBox="0 0 16 16" fill="none"><path d="M1.60 2.82 H14.40" stroke="#555" stroke-width="1.05"/><path d="M1.60 6.28 H9.54" stroke="#555" stroke-width="1.05"/><path d="M1.60 9.72 H14.40" stroke="#555" stroke-width="1.05"/><path d="M1.60 13.18 H9.54" stroke="#555" stroke-width="1.05"/></svg>
<svg style="left:395.70px;top:109.10px" width="16" height="16" viewBox="0 0 16 16" fill="none"><path d="M1.60 2.82 H14.40" stroke="#555" stroke-width="1.05"/><path d="M4.03 6.28 H11.97" stroke="#555" stroke-width="1.05"/><path d="M1.60 9.72 H14.40" stroke="#555" stroke-width="1.05"/><path d="M4.03 13.18 H11.97" stroke="#555" stroke-width="1.05"/></svg>
<svg style="left:418.60px;top:109.10px" width="16" height="16" viewBox="0 0 16 16" fill="none"><path d="M1.60 2.82 H14.40" stroke="#555" stroke-width="1.05"/><path d="M6.46 6.28 H14.40" stroke="#555" stroke-width="1.05"/><path d="M1.60 9.72 H14.40" stroke="#555" stroke-width="1.05"/><path d="M6.46 13.18 H14.40" stroke="#555" stroke-width="1.05"/></svg>
<svg style="left:443.00px;top:109.00px" width="16" height="16" viewBox="0 0 16 16" fill="none"><path d="M2 2.6 H14 M8.6 6.2 H14 M8.6 9.8 H14 M2 13.4 H14" stroke="#555" stroke-width="1.05"/><path d="M6.6 8 H2.2 M4 6 L2 8 L4 10" stroke="#2b88d8" stroke-width="1.1" stroke-linecap="round" stroke-linejoin="round"/></svg>
<svg style="left:465.40px;top:109.00px" width="16" height="16" viewBox="0 0 16 16" fill="none"><path d="M2 2.6 H14 M8.6 6.2 H14 M8.6 9.8 H14 M2 13.4 H14" stroke="#555" stroke-width="1.05"/><path d="M2 8 H6.4 M4.6 6 L6.6 8 L4.6 10" stroke="#2b88d8" stroke-width="1.1" stroke-linecap="round" stroke-linejoin="round"/></svg>
<svg style="left:497.50px;top:109.50px" width="15" height="15" viewBox="0 0 15 15" fill="none"><rect x="0.8" y="0.8" width="13" height="13" stroke="#555" stroke-width="1.1" fill="#fff"/><rect x="0.8" y="3.8" width="13" height="7" fill="#d6ebfb" stroke="#2b88d8" stroke-width="1.1"/><path d="M3.4 7.3 H11.2 M4.8 5.8 L3.2 7.3 L4.8 8.8 M9.8 5.8 L11.4 7.3 L9.8 8.8" stroke="#2b88d8" stroke-width="1" stroke-linecap="round" stroke-linejoin="round"/><path d="M5.2 0.8 V3.8 M9.4 0.8 V3.8 M5.2 10.8 V13.8 M9.4 10.8 V13.8" stroke="#555" stroke-width="0.9"/></svg>
<span class="t" style="left:515.60px;top:109.60px;height:16px;line-height:16px;font-size:11.6px;color:#242424;transform:scaleX(0.9063);transform-origin:0 50%;">Merge &amp; Center</span>
<svg style="left:599.40px;top:113.80px" width="8" height="8" viewBox="0 0 8 8" fill="none"><path d="M1.7000000000000002 2.85 L4 5.15 L6.3 2.85" stroke="#444" stroke-width="1.1" stroke-linecap="round" stroke-linejoin="round"/></svg>
<span class="t" style="left:463.60px;top:139.90px;height:16px;line-height:16px;font-size:10.0px;color:#3b3b3b;transform:scaleX(0.9176);transform-origin:0 50%;">Alignment</span>
<svg style="left:608.00px;top:144.80px" width="8" height="8" viewBox="0 0 8 8" fill="none"><path d="M0.6 5.4 V0.6 H5.4" stroke="#555" stroke-width="1"/><path d="M3 3 L6.8 6.8 M6.8 3.6 V6.8 H3.6" stroke="#555" stroke-width="1"/></svg>
<div style="left:626.00px;top:78.60px;width:125.80px;height:21.10px;background:#fff;border:1px solid #b9b9b9;border-radius:4px;box-sizing:border-box"></div>
<span class="t" style="left:628.20px;top:81.80px;height:16px;line-height:16px;font-size:11.8px;color:#242424;transform:scaleX(0.8386);transform-origin:0 50%;">General</span>
<svg style="left:742.60px;top:85.60px" width="8" height="8" viewBox="0 0 8 8" fill="none"><path d="M1.7000000000000002 2.85 L4 5.15 L6.3 2.85" stroke="#444" stroke-width="1.1" stroke-linecap="round" stroke-linejoin="round"/></svg>
<span class="t" style="left:632.40px;top:109.40px;height:16px;line-height:16px;font-size:14px;color:#3b3b3b;transform:scaleX(0.9248);transform-origin:0 50%;">$</span>
<svg style="left:648.60px;top:113.80px" width="8" height="8" viewBox="0 0 8 8" fill="none"><path d="M2.0 3.0 L4 5.0 L6.0 3.0" stroke="#444" stroke-width="1.1" stroke-linecap="round" stroke-linejoin="round"/></svg>
<span class="t" style="left:665.40px;top:109.40px;height:16px;line-height:16px;font-size:15px;color:#3b3b3b;transform:scaleX(1.0196);transform-origin:0 50%;">%</span>
<svg style="left:690.00px;top:110.00px" width="12" height="14" viewBox="0 0 12 14" fill="none"><circle cx="5.8" cy="4.8" r="2.9" fill="#333"/><path d="M8.5 3.6 C9.6 7.4 7.4 11 3 12.4 L2.6 11.6 C5.4 10.2 6.6 8.4 6.2 6.2 Z" fill="#333"/></svg>
<div style="left:706.60px;top:107.00px;width:1.00px;height:20.50px;background:#dedede"></div>
<svg style="left:710.00px;top:108.00px" width="18" height="18" viewBox="0 0 18 18" fill="none"><path d="M9.8 6.4 H3 M5.4 3.8 L2.8 6.4 L5.4 9" stroke="#2b88d8" stroke-width="1.1" stroke-linecap="round" stroke-linejoin="round"/><text x="12.1" y="8.2" font-family="Liberation Sans" font-size="8.6" fill="#4a4a4a" textLength="3.9" lengthAdjust="spacingAndGlyphs">0</text><text x="4.4" y="15.6" font-family="Liberation Sans" font-size="8.6" fill="#4a4a4a" textLength="11.6" lengthAdjust="spacingAndGlyphs">.00</text></svg>
<svg style="left:732.00px;top:108.00px" width="18" height="18" viewBox="0 0 18 18" fill="none"><text x="5.2" y="8.2" font-family="Liberation Sans" font-size="8.6" fill="#4a4a4a" textLength="11" lengthAdjust="spacingAndGlyphs">.00</text><path d="M3.2 12.4 H9.8 M7.4 9.8 L10 12.4 L7.4 15" stroke="#2b88d8" stroke-width="1.1" stroke-linecap="round" stroke-linejoin="round"/><text x="9.6" y="15.6" font-family="Liberation Sans" font-size="8.6" fill="#4a4a4a" textLength="6.6" lengthAdjust="spacingAndGlyphs">.0</text></svg>
<span class="t" style="left:664.60px;top:140.10px;height:16px;line-height:16px;font-size:10.0px;color:#3b3b3b;transform:scaleX(0.9392);transform-origin:0 50%;">Number</span>
<svg style="left:748.50px;top:144.80px" width="8" height="8" viewBox="0 0 8 8" fill="none"><path d="M0.6 5.4 V0.6 H5.4" stroke="#555" stroke-width="1"/><path d="M3 3 L6.8 6.8 M6.8 3.6 V6.8 H3.6" stroke="#555" stroke-width="1"/></svg>
<svg style="left:786.00px;top:78.20px" width="27" height="21" viewBox="0 0 27 21" fill="none"><rect x="0.6" y="0.6" width="24.6" height="19" fill="#fff"/><rect x="4.9" y="0.6" width="11" height="6.3" fill="#f4707e" stroke="#e0475a" stroke-width="0.8"/><rect x="4.9" y="6.9" width="8.2" height="6.3" fill="#4da3e6"/><rect x="4.9" y="13.2" width="12.8" height="6.4" fill="#f4707e" stroke="#e0475a" stroke-width="0.8"/><path d="M0.6 6.9 H25.2 M0.6 13.2 H25.2 M4.9 0.6 V19.6 M20.2 0.6 V19.6 M15.9 6.9 V13.2" stroke="#5a5a5a" stroke-width="0.9"/><rect x="0.6" y="0.6" width="24.6" height="19" fill="none" stroke="#5a5a5a" stroke-width="1"/></svg>
<span class="t" style="left:771.90px;top:103.80px;height:16px;line-height:16px;font-size:11.6px;color:#242424;transform:scaleX(0.9201);transform-origin:0 50%;">Conditional</span>
<span class="t" style="left:768.00px;top:117.40px;height:16px;line-height:16px;font-size:11.6px;color:#242424;transform:scaleX(0.8767);transform-origin:0 50%;">Formatting</span>
<svg style="left:819.60px;top:121.60px" width="8" height="8" viewBox="0 0 8 8" fill="none"><path d="M1.7999999999999998 2.9 L4 5.1 L6.2 2.9" stroke="#444" stroke-width="1.1" stroke-linecap="round" stroke-linejoin="round"/></svg>
<svg style="left:844.60px;top:78.20px" width="30" height="26" viewBox="0 0 30 26" fill="none"><rect x="0.6" y="0.6" width="24.6" height="19" fill="#fff" stroke="#5a5a5a" stroke-width="1"/><rect x="8.8" y="6.9" width="16.4" height="12.7" fill="#4da3e6"/><path d="M0.6 6.9 H25.2 M0.6 13.2 H25.2 M8.8 0.6 V19.6 M17 0.6 V19.6" stroke="#5a5a5a" stroke-width="0.9"/><path d="M26.3 4.4 L28.3 6.2 L16.3 19.6 L13.5 17.3 Z" fill="#fff" stroke="#fff" stroke-width="2.4" stroke-linejoin="round"/><path d="M26.3 4.4 L28.3 6.2 L16.3 19.6 L13.5 17.3 Z" fill="#f4f4f4" stroke="#5a5a5a" stroke-width="1" stroke-linejoin="round"/><path d="M13.4 17.2 C11 17 10.2 19 9.8 20.4 C9.4 21.8 8.2 22.6 6.8 22.9 C10.6 24.2 15.4 23 16.5 19.7 Z" fill="#3a96dd" stroke="#fff" stroke-width="0.7"/></svg>
<span class="t" style="left:834.70px;top:103.80px;height:16px;line-height:16px;font-size:11.6px;color:#242424;transform:scaleX(0.8696);transform-origin:0 50%;">Format as</span>
<span class="t" style="left:840.00px;top:117.40px;height:16px;line-height:16px;font-size:11.6px;color:#242424;transform:scaleX(0.9016);transform-origin:0 50%;">Table</span>
<svg style="left:867.60px;top:121.60px" width="8" height="8" viewBox="0 0 8 8" fill="none"><path d="M1.7999999999999998 2.9 L4 5.1 L6.2 2.9" stroke="#444" stroke-width="1.1" stroke-linecap="round" stroke-linejoin="round"/></svg>
<svg style="left:890.00px;top:78.20px" width="30" height="26" viewBox="0 0 30 26" fill="none"><rect x="0.6" y="0.6" width="24.6" height="19" fill="#fff" stroke="#5a5a5a" stroke-width="1"/><rect x="5.4" y="4.4" width="14.4" height="11.6" fill="#4da3e6"/><path d="M0.6 4.4 H25.2 M0.6 16 H25.2 M5.4 0.6 V19.6 M19.8 0.6 V19.6" stroke="#5a5a5a" stroke-width="0.9"/><path d="M26.3 4.4 L28.3 6.2 L16.3 19.6 L13.5 17.3 Z" fill="#fff" stroke="#fff" stroke-width="2.4" stroke-linejoin="round"/><path d="M26.3 4.4 L28.3 6.2 L16.3 19.6 L13.5 17.3 Z" fill="#f4f4f4" stroke="#5a5a5a" stroke-width="1" stroke-linejoin="round"/><path d="M13.4 17.2 C11 17 10.2 19 9.8 20.4 C9.4 21.8 8.2 22.6 6.8 22.9 C10.6 24.2 15.4 23 16.5 19.7 Z" fill="#3a96dd" stroke="#fff" stroke-width="0.7"/></svg>
<span class="t" style="left:894.20px;top:103.80px;height:16px;line-height:16px;font-size:11.6px;color:#242424;transform:scaleX(0.8808);transform-origin:0 50%;">Cell</span>
<span class="t" style="left:885.00px;top:117.40px;height:16px;line-height:16px;font-size:11.6px;color:#242424;transform:scaleX(0.8547);transform-origin:0 50%;">Styles</span>
<svg style="left:914.80px;top:121.60px" width="8" height="8" viewBox="0 0 8 8" fill="none"><path d="M1.7999999999999998 2.9 L4 5.1 L6.2 2.9" stroke="#444" stroke-width="1.1" stroke-linecap="round" stroke-linejoin="round"/></svg>
<span class="t" style="left:830.40px;top:140.30px;height:16px;line-height:16px;font-size:10.0px;color:#3b3b3b;transform:scaleX(0.9989);transform-origin:0 50%;">Styles</span>
<svg style="left:941.00px;top:78.60px" width="28" height="20" viewBox="0 0 28 20" fill="none"><g transform="translate(2.4 0)"><rect x="0.6" y="0.6" width="24" height="18" fill="#fff" stroke="#555" stroke-width="1"/><path d="M0.6 6.6 H24.6 M0.6 12.6 H24.6 M8.6 0.6 V18.6 M16.6 0.6 V18.6" stroke="#555" stroke-width="0.9"/></g><rect x="7" y="6.6" width="20" height="6" fill="#6db3ea" stroke="#2b88d8" stroke-width="0.8"/><path d="M13 9.6 H1.4 M5.4 5.2 L1 9.6 L5.4 14" stroke="#2b88d8" stroke-width="1.3" stroke-linecap="round" stroke-linejoin="round" fill="none"/></svg>
<span class="t" style="left:942.70px;top:105.00px;height:16px;line-height:16px;font-size:11.6px;color:#242424;transform:scaleX(0.8756);transform-origin:0 50%;">Insert</span>
<svg style="left:951.40px;top:122.00px" width="8" height="8" viewBox="0 0 8 8" fill="none"><path d="M1.7000000000000002 2.85 L4 5.15 L6.3 2.85" stroke="#444" stroke-width="1.1" stroke-linecap="round" stroke-linejoin="round"/></svg>
<svg style="left:980.00px;top:78.60px" width="28" height="20" viewBox="0 0 28 20" fill="none"><g transform="translate(0.6 0)"><rect x="0.6" y="0.6" width="24" height="18" fill="#fff" stroke="#555" stroke-width="1"/><path d="M0.6 6.6 H24.6 M0.6 12.6 H24.6 M8.6 0.6 V18.6 M16.6 0.6 V18.6" stroke="#555" stroke-width="0.9"/></g><rect x="5" y="6.6" width="12" height="6" fill="#6db3ea" stroke="#2b88d8" stroke-width="0.8"/><rect x="15.4" y="3.4" width="12" height="12.4" fill="#fff"/><path d="M17.6 5.2 L26.4 14 M26.4 5.2 L17.6 14" stroke="#e8383d" stroke-width="1.2" stroke-linecap="round"/></svg>
<span class="t" style="left:978.00px;top:105.00px;height:16px;line-height:16px;font-size:11.6px;color:#242424;transform:scaleX(0.9067);transform-origin:0 50%;">Delete</span>
<svg style="left:989.20px;top:122.00px" width="8" height="8" viewBox="0 0 8 8" fill="none"><path d="M1.7000000000000002 2.85 L4 5.15 L6.3 2.85" stroke="#444" stroke-width="1.1" stroke-linecap="round" stroke-linejoin="round"/></svg>
<svg style="left:1017.60px;top:74.00px" width="27" height="25" viewBox="0 0 27 25" fill="none"><g transform="translate(1 4.8)"><rect x="0.6" y="0.6" width="24" height="18" fill="#fff" stroke="#555" stroke-width="1"/><path d="M0.6 6.6 H24.6 M0.6 12.6 H24.6 M8.6 0.6 V18.6 M16.6 0.6 V18.6" stroke="#555" stroke-width="0.9"/></g><rect x="7" y="11.4" width="12.4" height="6" fill="#6db3ea" stroke="#2b88d8" stroke-width="0.8"/><path d="M6.4 1.6 H20 M6.4 0.2 V3 M20 0.2 V3" stroke="#2b88d8" stroke-width="1.1"/></svg>
<span class="t" style="left:1014.30px;top:103.60px;height:16px;line-height:16px;font-size:11.6px;color:#242424;transform:scaleX(0.8984);transform-origin:0 50%;">Format</span>
<svg style="left:1026.80px;top:120.80px" width="8" height="8" viewBox="0 0 8 8" fill="none"><path d="M1.7000000000000002 2.85 L4 5.15 L6.3 2.85" stroke="#444" stroke-width="1.1" stroke-linecap="round" stroke-linejoin="round"/></svg>
<span class="t" style="left:983.60px;top:140.30px;height:16px;line-height:16px;font-size:10.0px;color:#3b3b3b;transform:scaleX(0.8458);transform-origin:0 50%;">Cells</span>
<svg style="left:1067.00px;top:75.00px" width="14" height="15" viewBox="0 0 14 15" fill="none"><path d="M11.6 3 V1.2 H2.2 L7.4 7.4 L2.2 13.6 H11.6 V11.8" stroke="#444" stroke-width="1.15" stroke-linejoin="round" stroke-linecap="round"/></svg>
<span class="t" style="left:1085.00px;top:74.80px;height:16px;line-height:16px;font-size:11.6px;color:#242424;transform:scaleX(0.8887);transform-origin:0 50%;">AutoSum</span>
<svg style="left:1136.80px;top:78.80px" width="8" height="8" viewBox="0 0 8 8" fill="none"><path d="M1.7000000000000002 2.85 L4 5.15 L6.3 2.85" stroke="#444" stroke-width="1.1" stroke-linecap="round" stroke-linejoin="round"/></svg>
<svg style="left:1066.60px;top:97.60px" width="15" height="15" viewBox="0 0 15 15" fill="none"><rect x="0.8" y="1.8" width="13" height="11.8" stroke="#555" stroke-width="1.1" fill="#fff"/><path d="M0.4 1.2 H14.4" stroke="#444" stroke-width="1.6"/><path d="M7.3 4.8 V10.6 M4.9 8.4 L7.3 10.8 L9.7 8.4" stroke="#2b88d8" stroke-width="1.1" stroke-linecap="round" stroke-linejoin="round"/></svg>
<span class="t" style="left:1085.00px;top:97.00px;height:16px;line-height:16px;font-size:11.6px;color:#242424;transform:scaleX(0.8504);transform-origin:0 50%;">Fill</span>
<svg style="left:1100.00px;top:101.40px" width="8" height="8" viewBox="0 0 8 8" fill="none"><path d="M1.7999999999999998 2.9 L4 5.1 L6.2 2.9" stroke="#444" stroke-width="1.1" stroke-linecap="round" stroke-linejoin="round"/></svg>
<svg style="left:1066.60px;top:119.80px" width="15" height="15" viewBox="0 0 15 15" fill="none"><path d="M1.2 9.6 L9 1.8 L13.6 6.4 L6.6 13.4 H4.4 Z" stroke="#a33aa8" stroke-width="1.15" stroke-linejoin="round" fill="#fff"/><path d="M1.4 9.6 L4.2 6.8 L8.6 11.2 L6.4 13.4 H4.4 Z" fill="#c576c9"/></svg>
<span class="t" style="left:1085.00px;top:119.60px;height:16px;line-height:16px;font-size:11.6px;color:#242424;transform:scaleX(0.8370);transform-origin:0 50%;">Clear</span>
<svg style="left:1110.40px;top:123.80px" width="8" height="8" viewBox="0 0 8 8" fill="none"><path d="M1.7999999999999998 2.9 L4 5.1 L6.2 2.9" stroke="#444" stroke-width="1.1" stroke-linecap="round" stroke-linejoin="round"/></svg>
<svg style="left:1155.00px;top:75.40px" width="28" height="26" viewBox="0 0 28 26" fill="none"><text x="2" y="11.6" font-family="Liberation Sans" font-size="13.8" fill="#2b88d8">A</text><text x="2.4" y="24.8" font-family="Liberation Sans" font-size="13.8" fill="#444">Z</text><path d="M12.2 6.6 H26 L20.8 12.8 V20 L17.6 18.2 V12.8 Z" stroke="#555" stroke-width="1.15" stroke-linejoin="round" fill="#fff"/></svg>
<span class="t" style="left:1153.80px;top:103.80px;height:16px;line-height:16px;font-size:11.6px;color:#242424;transform:scaleX(0.9183);transform-origin:0 50%;">Sort &amp;</span>
<span class="t" style="left:1152.40px;top:117.40px;height:16px;line-height:16px;font-size:11.6px;color:#242424;transform:scaleX(0.8923);transform-origin:0 50%;">Filter</span>
<svg style="left:1177.60px;top:121.60px" width="8" height="8" viewBox="0 0 8 8" fill="none"><path d="M1.7999999999999998 2.9 L4 5.1 L6.2 2.9" stroke="#444" stroke-width="1.1" stroke-linecap="round" stroke-linejoin="round"/></svg>
<svg style="left:1195.00px;top:74.60px" width="28" height="28" viewBox="0 0 28 28" fill="none"><circle cx="17.6" cy="10.4" r="8.6" stroke="#555" stroke-width="1.15" fill="#fff"/><path d="M11.4 16.6 L1.6 26.4" stroke="#555" stroke-width="1.3" stroke-linecap="round"/></svg>
<span class="t" style="left:1194.30px;top:103.80px;height:16px;line-height:16px;font-size:11.6px;color:#242424;transform:scaleX(0.8770);transform-origin:0 50%;">Find &amp;</span>
<span class="t" style="left:1190.40px;top:117.40px;height:16px;line-height:16px;font-size:11.6px;color:#242424;transform:scaleX(0.8375);transform-origin:0 50%;">Select</span>
<svg style="left:1220.00px;top:121.60px" width="8" height="8" viewBox="0 0 8 8" fill="none"><path d="M1.7999999999999998 2.9 L4 5.1 L6.2 2.9" stroke="#444" stroke-width="1.1" stroke-linecap="round" stroke-linejoin="round"/></svg>
<span class="t" style="left:1132.60px;top:140.30px;height:16px;line-height:16px;font-size:10.0px;color:#3b3b3b;transform:scaleX(0.9092);transform-origin:0 50%;">Editing</span>
<svg style="left:1257.00px;top:74.60px" width="26" height="27" viewBox="0 0 26 27" fill="none"><path d="M2 2 H12 L18.6 8.6 V25.6 H2 Z" fill="#ececec" stroke="#d2d2d2" stroke-width="1"/><g transform="rotate(45 17 8)"><rect x="12.2" y="-0.6" width="9.6" height="6" fill="#fff" stroke="#c8c8c8" stroke-width="1.1"/><rect x="13.6" y="5.4" width="6.8" height="5" fill="#fff" stroke="#c8c8c8" stroke-width="1.1"/><rect x="13.6" y="10.4" width="6.8" height="12" rx="1" fill="#fff" stroke="#c8c8c8" stroke-width="1.1"/><rect x="15.8" y="12" width="2.4" height="8.6" rx="1.2" fill="#fff" stroke="#c8c8c8" stroke-width="0.9"/></g></svg>
<span class="t" style="left:1245.40px;top:103.80px;height:16px;line-height:16px;font-size:11.6px;color:#bdbdbd;transform:scaleX(0.8886);transform-origin:0 50%;">Sensitivity</span>
<svg style="left:1264.40px;top:120.60px" width="8" height="8" viewBox="0 0 8 8" fill="none"><path d="M1.6 2.8 L4 5.2 L6.4 2.8" stroke="#c4c4c4" stroke-width="1.1" stroke-linecap="round" stroke-linejoin="round"/></svg>
<span class="t" style="left:1249.00px;top:140.30px;height:16px;line-height:16px;font-size:10.0px;color:#3b3b3b;transform:scaleX(0.8797);transform-origin:0 50%;">Sensitivity</span>
<svg style="left:1314.60px;top:75.60px" width="26" height="26" viewBox="0 0 26 26" fill="none"><rect x="1" y="1" width="24" height="24" stroke="#e0592a" stroke-width="1.4" fill="#fff"/><rect x="4" y="4" width="7.4" height="7.4" stroke="#e0592a" stroke-width="1.2"/><rect x="14.6" y="4" width="7.4" height="7.4" stroke="#e0592a" stroke-width="1.2"/><rect x="4" y="14.6" width="7.4" height="7.4" stroke="#e0592a" stroke-width="1.2"/><rect x="14.6" y="14.6" width="7.4" height="7.4" stroke="#e0592a" stroke-width="1.2"/></svg>
<span class="t" style="left:1309.50px;top:103.80px;height:16px;line-height:16px;font-size:11.6px;color:#242424;transform:scaleX(0.9306);transform-origin:0 50%;">Add-ins</span>
<span class="t" style="left:1311.60px;top:140.30px;height:16px;line-height:16px;font-size:10.0px;color:#3b3b3b;transform:scaleX(0.9261);transform-origin:0 50%;">Add-ins</span>
<svg style="left:1367.00px;top:74.00px" width="30" height="29" viewBox="0 0 30 29" fill="none"><rect x="1" y="1" width="27.4" height="26.6" fill="#fff" stroke="#444" stroke-width="1.3"/><path d="M1 3.4 H28.4" stroke="#444" stroke-width="2.4"/><path d="M1 9.4 H28.4 M1 15.4 H28.4 M1 21.4 H28.4 M10 3 V27.6 M19.4 3 V27.6" stroke="#8a8a8a" stroke-width="0.9"/><circle cx="14" cy="13" r="8.8" fill="#fff" stroke="#444" stroke-width="1.3"/><rect x="9.4" y="12" width="2.6" height="5" fill="#e6e6e6" stroke="#777" stroke-width="0.7"/><rect x="12.6" y="8.4" width="2.8" height="8.6" fill="#e6e6e6" stroke="#777" stroke-width="0.7"/><rect x="15.8" y="10" width="2.8" height="7" fill="#3a96dd"/><path d="M20.4 19.6 L28.6 28" stroke="#444" stroke-width="1.5" stroke-linecap="round"/></svg>
<span class="t" style="left:1363.60px;top:103.80px;height:16px;line-height:16px;font-size:11.6px;color:#242424;transform:scaleX(0.8821);transform-origin:0 50%;">Analyze</span>
<span class="t" style="left:1370.80px;top:117.60px;height:16px;line-height:16px;font-size:11.6px;color:#242424;transform:scaleX(0.8979);transform-origin:0 50%;">Data</span>
<div style="left:8.00px;top:164.00px;width:87.40px;height:19.20px;background:#fff;border-radius:4px"></div>
<span class="t" style="left:12.40px;top:165.80px;height:16px;line-height:16px;font-size:11.6px;color:#333;transform:scaleX(0.9206);transform-origin:0 50%;">B56</span>
<svg style="left:82.60px;top:170.60px" width="8" height="8" viewBox="0 0 8 8" fill="none"><path d="M0.7999999999999998 2.4 L4 5.6 L7.2 2.4" stroke="#333" stroke-width="1.2" stroke-linecap="round" stroke-linejoin="round"/></svg>
<div style="left:104.10px;top:169.90px;width:2.00px;height:2.00px;background:#444;border-radius:50%"></div>
<div style="left:104.10px;top:173.30px;width:2.00px;height:2.00px;background:#444;border-radius:50%"></div>
<div style="left:104.10px;top:176.70px;width:2.00px;height:2.00px;background:#444;border-radius:50%"></div>
<div style="left:114.60px;top:164.00px;width:63.00px;height:19.20px;background:#fff;border-radius:4px"></div>
<svg style="left:119.00px;top:168.00px" width="12" height="12" viewBox="0 0 12 12" fill="none"><path d="M1.6 1.6 L10.4 10.4 M10.4 1.6 L1.6 10.4" stroke="#bdbdbd" stroke-width="1.1" stroke-linecap="round"/></svg>
<svg style="left:138.00px;top:168.00px" width="14" height="12" viewBox="0 0 14 12" fill="none"><path d="M1.6 6.6 L5.2 10.2 L12.6 1.8" stroke="#bdbdbd" stroke-width="1.1" stroke-linecap="round" stroke-linejoin="round"/></svg>
<span class="t" style="left:160.6px;top:164.6px;height:16px;line-height:16px;font-family:'Liberation Serif',serif;font-style:italic;font-weight:bold;font-size:14.2px;color:#3f3f3f;letter-spacing:-0.3px">fx</span>
<div style="left:183.00px;top:164.00px;width:1277.00px;height:19.20px;background:#fff;border-radius:4px"></div>
</div></body></html>
